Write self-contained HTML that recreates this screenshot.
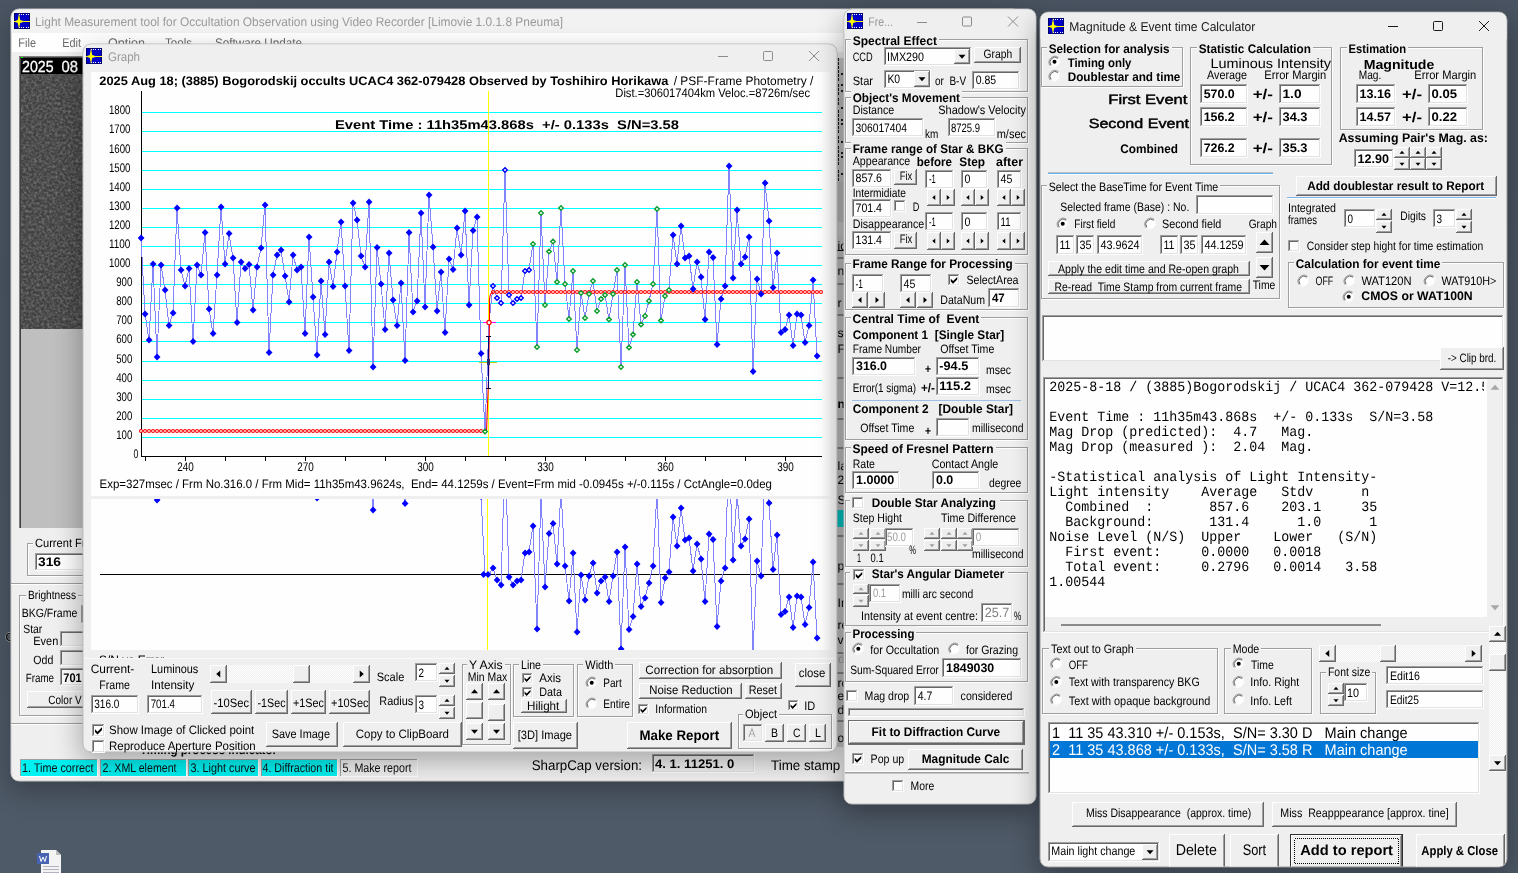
<!DOCTYPE html>
<html><head><meta charset="utf-8"><title>Limovie</title>
<style>html,body{margin:0;padding:0;background:#4b5563;overflow:hidden;font-family:"Liberation Sans",sans-serif}svg{display:block;will-change:transform;opacity:0.9999}</style>
</head><body>
<svg width="1518" height="873" viewBox="0 0 1518 873" shape-rendering="crispEdges" text-rendering="geometricPrecision"><defs>
<linearGradient id="desk" x1="0" y1="0" x2="0" y2="1">
 <stop offset="0" stop-color="#4b5563"/><stop offset="1" stop-color="#505b69"/>
</linearGradient>
<filter id="sh" x="-15%" y="-15%" width="130%" height="140%"><feGaussianBlur stdDeviation="14"/></filter>
<filter id="noise" x="0" y="0" width="100%" height="100%">
 <feTurbulence type="fractalNoise" baseFrequency="0.38" numOctaves="2" seed="7" result="t"/>
 <feColorMatrix type="matrix" values="0 0 0 0 1  0 0 0 0 1  0 0 0 0 1  0.55 0 0 0 -0.2"/>
 <feGaussianBlur stdDeviation="0.5"/>
 <feComposite in2="SourceGraphic" operator="in"/>
</filter>
<pattern id="dith" width="2" height="2" patternUnits="userSpaceOnUse">
 <rect width="2" height="2" fill="#f0f0f0"/><rect width="1" height="1" fill="#fff"/><rect x="1" y="1" width="1" height="1" fill="#fff"/>
</pattern>
<clipPath id="clipLow"><rect x="91" y="499" width="740" height="151"/></clipPath>
<clipPath id="clipGraphWin"><rect x="83" y="44" width="754" height="708" rx="8"/></clipPath>
</defs>
<rect x="0" y="0" width="1518" height="873" fill="url(#desk)" />
<text x="5.3" y="640.5" font-family="Liberation Sans" font-size="12" font-weight="bold" fill="#1a1a1a" xml:space="preserve" stroke="#d8d8d8" stroke-width="0.6" paint-order="stroke">G</text>
<rect x="9" y="19" width="1014" height="772" rx="8" fill="#000" opacity="0.28" filter="url(#sh)"/>
<rect x="11" y="9" width="1010" height="772" rx="8" fill="#f0f0f0" stroke="#c8c8c8" stroke-width="1" shape-rendering="auto"/>
<path d="M11.5 33 V17 A7.5 7.5 0 0 1 19 9.5 H1013 A7.5 7.5 0 0 1 1020.5 17 V33z" fill="#f3f3f3" shape-rendering="auto"/>
<rect x="12" y="33" width="1008" height="19" fill="#ffffff" />
<rect x="14" y="13" width="16" height="16" fill="#000070" />
<rect x="15" y="14" width="14" height="14" fill="#0000c8" />
<rect x="19" y="14" width="1" height="1" fill="#fff" />
<rect x="19" y="27" width="1" height="1" fill="#fff" />
<rect x="21.2" y="14" width="1" height="1" fill="#fff" />
<rect x="21.2" y="27" width="1" height="1" fill="#fff" />
<rect x="23.4" y="14" width="1" height="1" fill="#fff" />
<rect x="23.4" y="27" width="1" height="1" fill="#fff" />
<rect x="25.6" y="14" width="1" height="1" fill="#fff" />
<rect x="25.6" y="27" width="1" height="1" fill="#fff" />
<rect x="27.8" y="14" width="1" height="1" fill="#fff" />
<rect x="27.8" y="27" width="1" height="1" fill="#fff" />
<rect x="14" y="21" width="16" height="1.4" fill="#ffff00" />
<path d="M19 13 L20.2 20 L25 21.5 L20.2 23 L19 29 L17.8 23 L14 21.5 L17.8 20z" fill="#ffff00" shape-rendering="auto"/>
<text x="35" y="26" font-family="Liberation Sans" font-size="12.5" textLength="528" lengthAdjust="spacingAndGlyphs" fill="#9a9a9a" xml:space="preserve" >Light Measurement tool for Occultation Observation using Video Recorder [Limovie 1.0.1.8 Pneuma]</text>
<text x="18.3" y="47.3" font-family="Liberation Sans" font-size="12.5" textLength="17.7" lengthAdjust="spacingAndGlyphs" fill="#6a6a6a" xml:space="preserve" >File</text>
<text x="62.3" y="47.3" font-family="Liberation Sans" font-size="12.5" textLength="18.7" lengthAdjust="spacingAndGlyphs" fill="#6a6a6a" xml:space="preserve" >Edit</text>
<text x="108" y="47.3" font-family="Liberation Sans" font-size="12.5" textLength="37" lengthAdjust="spacingAndGlyphs" fill="#6a6a6a" xml:space="preserve" >Option</text>
<text x="165" y="47.3" font-family="Liberation Sans" font-size="12.5" textLength="27" lengthAdjust="spacingAndGlyphs" fill="#6a6a6a" xml:space="preserve" >Tools</text>
<text x="215" y="47.3" font-family="Liberation Sans" font-size="12.5" textLength="87" lengthAdjust="spacingAndGlyphs" fill="#6a6a6a" xml:space="preserve" >Software Update</text>
<rect x="19" y="56" width="70" height="472" fill="#c0c0c0" />
<rect x="19" y="56" width="1" height="472" fill="#808080" />
<rect x="19" y="56" width="70" height="1" fill="#808080" />
<rect x="20" y="57" width="1" height="471" fill="#404040" />
<rect x="20" y="57" width="69" height="1" fill="#404040" />
<rect x="21" y="58" width="66" height="16" fill="#000" />
<rect x="21" y="74" width="66" height="255" fill="#414141" />
<rect x="21" y="74" width="66" height="255" fill="#b8b8b8" filter="url(#noise)"/>
<text x="22" y="72.3" font-family="Liberation Sans" font-size="16" textLength="31.5" lengthAdjust="spacingAndGlyphs" fill="#fff" xml:space="preserve" stroke="#fff" stroke-width="0.3">2025</text>
<text x="61.5" y="72.3" font-family="Liberation Sans" font-size="16" textLength="16.5" lengthAdjust="spacingAndGlyphs" fill="#fff" xml:space="preserve" stroke="#fff" stroke-width="0.3">08</text>
<rect x="21" y="57" width="2" height="1" fill="#00ff00" />
<rect x="28.5" y="544.5" width="79" height="32" fill="none" stroke="#ffffff"/>
<rect x="27.5" y="543.5" width="79" height="32" fill="none" stroke="#a0a0a0"/>
<rect x="33" y="537" width="57" height="12" fill="#f0f0f0" />
<text x="35" y="547" font-family="Liberation Sans" font-size="12" textLength="53" lengthAdjust="spacingAndGlyphs" fill="#000" xml:space="preserve" >Current Fr.</text>
<rect x="35" y="553" width="70" height="18" fill="#fff" />
<rect x="35" y="553" width="70" height="1" fill="#a0a0a0" />
<rect x="35" y="553" width="1" height="18" fill="#a0a0a0" />
<rect x="36" y="554" width="68" height="1" fill="#696969" />
<rect x="36" y="554" width="1" height="16" fill="#696969" />
<rect x="35" y="570" width="70" height="1" fill="#ffffff" />
<rect x="104" y="553" width="1" height="18" fill="#ffffff" />
<rect x="36" y="569" width="68" height="1" fill="#e3e3e3" />
<rect x="103" y="554" width="1" height="16" fill="#e3e3e3" />
<text x="38" y="566" font-family="Liberation Sans" font-size="12.5" font-weight="bold" textLength="23" lengthAdjust="spacingAndGlyphs" fill="#000" xml:space="preserve" >316</text>
<rect x="11" y="583" width="79" height="1" fill="#a0a0a0" />
<rect x="11" y="584" width="79" height="1" fill="#ffffff" />
<rect x="20.5" y="596.5" width="79" height="120" fill="none" stroke="#ffffff"/>
<rect x="19.5" y="595.5" width="79" height="120" fill="none" stroke="#a0a0a0"/>
<rect x="26" y="589" width="52" height="12" fill="#f0f0f0" />
<text x="28" y="599" font-family="Liberation Sans" font-size="12" textLength="48" lengthAdjust="spacingAndGlyphs" fill="#000" xml:space="preserve" >Brightness</text>
<text x="21.7" y="617" font-family="Liberation Sans" font-size="12" textLength="55.6" lengthAdjust="spacingAndGlyphs" fill="#000" xml:space="preserve" >BKG/Frame</text>
<rect x="81" y="605" width="20" height="19" fill="#f0f0f0" />
<rect x="81" y="605" width="20" height="1" fill="#a0a0a0" />
<rect x="81" y="605" width="1" height="19" fill="#a0a0a0" />
<rect x="82" y="606" width="18" height="1" fill="#696969" />
<rect x="82" y="606" width="1" height="17" fill="#696969" />
<rect x="81" y="623" width="20" height="1" fill="#ffffff" />
<rect x="100" y="605" width="1" height="19" fill="#ffffff" />
<rect x="82" y="622" width="18" height="1" fill="#e3e3e3" />
<rect x="99" y="606" width="1" height="17" fill="#e3e3e3" />
<text x="23.3" y="632.7" font-family="Liberation Sans" font-size="12" textLength="19" lengthAdjust="spacingAndGlyphs" fill="#000" xml:space="preserve" >Star</text>
<text x="33.3" y="645.3" font-family="Liberation Sans" font-size="12" textLength="25" lengthAdjust="spacingAndGlyphs" fill="#000" xml:space="preserve" >Even</text>
<rect x="60" y="631" width="40" height="16" fill="#f0f0f0" />
<rect x="60" y="631" width="40" height="1" fill="#a0a0a0" />
<rect x="60" y="631" width="1" height="16" fill="#a0a0a0" />
<rect x="61" y="632" width="38" height="1" fill="#696969" />
<rect x="61" y="632" width="1" height="14" fill="#696969" />
<rect x="60" y="646" width="40" height="1" fill="#ffffff" />
<rect x="99" y="631" width="1" height="16" fill="#ffffff" />
<rect x="61" y="645" width="38" height="1" fill="#e3e3e3" />
<rect x="98" y="632" width="1" height="14" fill="#e3e3e3" />
<text x="33.3" y="663.7" font-family="Liberation Sans" font-size="12" textLength="20" lengthAdjust="spacingAndGlyphs" fill="#000" xml:space="preserve" >Odd</text>
<rect x="60" y="650" width="40" height="16" fill="#f0f0f0" />
<rect x="60" y="650" width="40" height="1" fill="#a0a0a0" />
<rect x="60" y="650" width="1" height="16" fill="#a0a0a0" />
<rect x="61" y="651" width="38" height="1" fill="#696969" />
<rect x="61" y="651" width="1" height="14" fill="#696969" />
<rect x="60" y="665" width="40" height="1" fill="#ffffff" />
<rect x="99" y="650" width="1" height="16" fill="#ffffff" />
<rect x="61" y="664" width="38" height="1" fill="#e3e3e3" />
<rect x="98" y="651" width="1" height="14" fill="#e3e3e3" />
<text x="25.7" y="682" font-family="Liberation Sans" font-size="12" textLength="28.3" lengthAdjust="spacingAndGlyphs" fill="#000" xml:space="preserve" >Frame</text>
<rect x="60" y="668" width="40" height="18" fill="#fff" />
<rect x="60" y="668" width="40" height="1" fill="#a0a0a0" />
<rect x="60" y="668" width="1" height="18" fill="#a0a0a0" />
<rect x="61" y="669" width="38" height="1" fill="#696969" />
<rect x="61" y="669" width="1" height="16" fill="#696969" />
<rect x="60" y="685" width="40" height="1" fill="#ffffff" />
<rect x="99" y="668" width="1" height="18" fill="#ffffff" />
<rect x="61" y="684" width="38" height="1" fill="#e3e3e3" />
<rect x="98" y="669" width="1" height="16" fill="#e3e3e3" />
<text x="63.3" y="681.5" font-family="Liberation Sans" font-size="12.5" font-weight="bold" textLength="18.4" lengthAdjust="spacingAndGlyphs" fill="#000" xml:space="preserve" >701</text>
<rect x="27" y="691" width="70" height="17" fill="#f0f0f0" />
<rect x="27" y="691" width="70" height="1" fill="#ffffff" />
<rect x="27" y="691" width="1" height="17" fill="#ffffff" />
<rect x="27" y="707" width="70" height="1" fill="#696969" />
<rect x="96" y="691" width="1" height="17" fill="#696969" />
<rect x="28" y="706" width="68" height="1" fill="#a0a0a0" />
<rect x="95" y="692" width="1" height="15" fill="#a0a0a0" />
<text x="48.3" y="703.7" font-family="Liberation Sans" font-size="12" textLength="33.4" lengthAdjust="spacingAndGlyphs" fill="#000" xml:space="preserve" >Color V</text>
<rect x="11" y="723" width="79" height="1" fill="#a0a0a0" />
<rect x="11" y="724" width="79" height="1" fill="#ffffff" />
<clipPath id="clipStrip"><rect x="837" y="52" width="8" height="700"/></clipPath><g clip-path="url(#clipStrip)">
<rect x="837" y="52" width="7" height="695" fill="#cdcdcd" />
<rect x="837" y="52" width="7" height="6" fill="#f0f0f0" />
<rect x="838" y="58" width="1" height="3" fill="#202020" />
<rect x="838" y="62" width="1" height="3" fill="#202020" />
<rect x="838" y="66" width="1" height="3" fill="#202020" />
<rect x="838" y="70" width="1" height="3" fill="#202020" />
<rect x="838" y="74" width="1" height="3" fill="#202020" />
<rect x="838" y="78" width="1" height="3" fill="#202020" />
<rect x="838" y="84" width="1" height="3" fill="#202020" />
<rect x="838" y="88" width="1" height="3" fill="#202020" />
<rect x="838" y="92" width="1" height="3" fill="#202020" />
<rect x="838" y="98" width="1" height="3" fill="#202020" />
<rect x="838" y="102" width="1" height="3" fill="#202020" />
<rect x="838" y="110" width="1" height="3" fill="#202020" />
<rect x="838" y="114" width="1" height="3" fill="#202020" />
<rect x="838" y="118" width="1" height="3" fill="#202020" />
<rect x="838" y="122" width="1" height="3" fill="#202020" />
<rect x="838" y="126" width="1" height="3" fill="#202020" />
<rect x="838" y="130" width="1" height="3" fill="#202020" />
<rect x="838" y="136" width="1" height="3" fill="#202020" />
<rect x="838" y="140" width="1" height="3" fill="#202020" />
<rect x="838" y="146" width="1" height="3" fill="#202020" />
<rect x="838" y="150" width="1" height="3" fill="#202020" />
<rect x="838" y="154" width="1" height="3" fill="#202020" />
<rect x="838" y="158" width="1" height="3" fill="#202020" />
<rect x="838" y="162" width="1" height="3" fill="#202020" />
<rect x="838" y="170" width="1" height="3" fill="#202020" />
<rect x="838" y="174" width="1" height="3" fill="#202020" />
<rect x="838" y="178" width="1" height="3" fill="#202020" />
<rect x="841" y="73" width="2" height="2" fill="#202020" />
<rect x="841" y="84" width="2" height="2" fill="#202020" />
<rect x="841" y="90" width="2" height="2" fill="#202020" />
<rect x="841" y="107" width="2" height="2" fill="#202020" />
<rect x="841" y="119" width="2" height="2" fill="#202020" />
<rect x="841" y="123" width="2" height="2" fill="#202020" />
<rect x="841" y="141" width="2" height="2" fill="#202020" />
<rect x="841" y="152" width="2" height="2" fill="#202020" />
<rect x="841" y="156" width="2" height="2" fill="#202020" />
<rect x="841" y="173" width="2" height="2" fill="#202020" />
<rect x="837" y="182" width="7" height="40" fill="#c4c4c4" />
<rect x="837" y="222" width="7" height="14" fill="#d4d4d4" />
<rect x="837" y="257" width="7" height="2" fill="#8a8a8a" />
<rect x="837" y="283" width="7" height="2" fill="#8a8a8a" />
<rect x="837" y="314" width="7" height="2" fill="#8a8a8a" />
<rect x="837" y="377" width="7" height="2" fill="#8a8a8a" />
<rect x="837" y="418" width="7" height="2" fill="#8a8a8a" />
<rect x="837" y="447" width="7" height="2" fill="#8a8a8a" />
<rect x="837" y="535" width="7" height="2" fill="#8a8a8a" />
<rect x="837" y="583" width="7" height="2" fill="#8a8a8a" />
<rect x="837" y="652" width="7" height="2" fill="#8a8a8a" />
<rect x="837" y="672" width="7" height="2" fill="#8a8a8a" />
<rect x="837" y="720" width="7" height="2" fill="#8a8a8a" />
<rect x="837" y="510" width="7" height="17" fill="#00d0d0" />
<text x="837.5" y="250" font-family="Liberation Sans" font-size="12.2" fill="#000" xml:space="preserve" >ic</text>
<text x="837.5" y="275" font-family="Liberation Sans" font-size="12.2" fill="#000" xml:space="preserve" >n</text>
<text x="837.5" y="307" font-family="Liberation Sans" font-size="12.2" fill="#000" xml:space="preserve" >r</text>
<text x="837.5" y="337" font-family="Liberation Sans" font-size="12.2" fill="#000" xml:space="preserve" >se</text>
<text x="837.5" y="353" font-family="Liberation Sans" font-size="12.2" fill="#000" xml:space="preserve" >Fi</text>
<text x="837.5" y="408" font-family="Liberation Sans" font-size="12.2" font-weight="bold" fill="#000" xml:space="preserve" >n</text>
<text x="837.5" y="470" font-family="Liberation Sans" font-size="12.2" fill="#000" xml:space="preserve" >la</text>
<text x="837.5" y="484" font-family="Liberation Sans" font-size="12.2" fill="#000" xml:space="preserve" >25</text>
<text x="837.5" y="504" font-family="Liberation Sans" font-size="12.2" fill="#000" xml:space="preserve" >S</text>
<text x="837.5" y="570" font-family="Liberation Sans" font-size="12.2" fill="#000" xml:space="preserve" >p</text>
<text x="837.5" y="607" font-family="Liberation Sans" font-size="12.2" fill="#000" xml:space="preserve" >In</text>
<text x="837.5" y="629" font-family="Liberation Sans" font-size="12.2" fill="#000" xml:space="preserve" >re</text>
<text x="837.5" y="644" font-family="Liberation Sans" font-size="12.2" fill="#000" xml:space="preserve" >v</text>
<text x="837.5" y="687" font-family="Liberation Sans" font-size="12.2" fill="#000" xml:space="preserve" >ro</text>
<text x="837.5" y="700" font-family="Liberation Sans" font-size="12.2" fill="#000" xml:space="preserve" >er</text>
<text x="837.5" y="714" font-family="Liberation Sans" font-size="12.2" fill="#000" xml:space="preserve" >d</text>
<text x="837.5" y="742" font-family="Liberation Sans" font-size="12.2" fill="#000" xml:space="preserve" >os</text>
<text x="838" y="663" font-family="Liberation Sans" font-size="12.2" fill="#a0a0a0" xml:space="preserve" >d</text>
<rect x="837" y="250" width="7" height="1" fill="#000" />
</g>
<rect x="20" y="759" width="78" height="18" fill="#00f2f2" />
<rect x="20" y="759" width="78" height="1" fill="#a0a0a0" />
<rect x="20" y="759" width="1" height="18" fill="#a0a0a0" />
<rect x="20" y="776" width="78" height="1" fill="#ffffff" />
<rect x="97" y="759" width="1" height="18" fill="#ffffff" />
<rect x="100" y="759" width="87" height="18" fill="#00f2f2" />
<rect x="100" y="759" width="87" height="1" fill="#a0a0a0" />
<rect x="100" y="759" width="1" height="18" fill="#a0a0a0" />
<rect x="100" y="776" width="87" height="1" fill="#ffffff" />
<rect x="186" y="759" width="1" height="18" fill="#ffffff" />
<rect x="188" y="759" width="71" height="18" fill="#00f2f2" />
<rect x="188" y="759" width="71" height="1" fill="#a0a0a0" />
<rect x="188" y="759" width="1" height="18" fill="#a0a0a0" />
<rect x="188" y="776" width="71" height="1" fill="#ffffff" />
<rect x="258" y="759" width="1" height="18" fill="#ffffff" />
<rect x="261" y="759" width="77" height="18" fill="#00f2f2" />
<rect x="261" y="759" width="77" height="1" fill="#a0a0a0" />
<rect x="261" y="759" width="1" height="18" fill="#a0a0a0" />
<rect x="261" y="776" width="77" height="1" fill="#ffffff" />
<rect x="337" y="759" width="1" height="18" fill="#ffffff" />
<rect x="340" y="759" width="78" height="18" fill="#f0f0f0" />
<rect x="340" y="759" width="78" height="1" fill="#a0a0a0" />
<rect x="340" y="759" width="1" height="18" fill="#a0a0a0" />
<rect x="340" y="776" width="78" height="1" fill="#ffffff" />
<rect x="417" y="759" width="1" height="18" fill="#ffffff" />
<text x="22" y="772" font-family="Liberation Sans" font-size="12.5" textLength="71.5" lengthAdjust="spacingAndGlyphs" fill="#101010" xml:space="preserve" >1. Time correct</text>
<text x="102.5" y="772" font-family="Liberation Sans" font-size="12.5" textLength="74" lengthAdjust="spacingAndGlyphs" fill="#101010" xml:space="preserve" >2. XML element</text>
<text x="190.5" y="772" font-family="Liberation Sans" font-size="12.5" textLength="65" lengthAdjust="spacingAndGlyphs" fill="#101010" xml:space="preserve" >3. Light curve</text>
<text x="262.5" y="772" font-family="Liberation Sans" font-size="12.5" textLength="71" lengthAdjust="spacingAndGlyphs" fill="#101010" xml:space="preserve" >4. Diffraction tit</text>
<text x="342.5" y="772" font-family="Liberation Sans" font-size="12.5" textLength="69" lengthAdjust="spacingAndGlyphs" fill="#101010" xml:space="preserve" >5. Make report</text>
<clipPath id="clipTP"><rect x="100" y="752" width="300" height="6"/></clipPath><g clip-path="url(#clipTP)">
<text x="140" y="754.3" font-family="Liberation Sans" font-size="12.5" font-weight="bold" textLength="137" lengthAdjust="spacingAndGlyphs" fill="#000" xml:space="preserve" >Timing process indicator</text>
</g>
<text x="531.7" y="769.7" font-family="Liberation Sans" font-size="14" textLength="110.3" lengthAdjust="spacingAndGlyphs" fill="#000" xml:space="preserve" >SharpCap version:</text>
<rect x="652" y="754" width="103" height="19" fill="#f0f0f0" />
<rect x="652" y="754" width="103" height="1" fill="#a0a0a0" />
<rect x="652" y="754" width="1" height="19" fill="#a0a0a0" />
<rect x="653" y="755" width="101" height="1" fill="#696969" />
<rect x="653" y="755" width="1" height="17" fill="#696969" />
<rect x="652" y="772" width="103" height="1" fill="#ffffff" />
<rect x="754" y="754" width="1" height="19" fill="#ffffff" />
<rect x="653" y="771" width="101" height="1" fill="#e3e3e3" />
<rect x="753" y="755" width="1" height="17" fill="#e3e3e3" />
<text x="655" y="767.7" font-family="Liberation Sans" font-size="12.5" font-weight="bold" textLength="79.3" lengthAdjust="spacingAndGlyphs" fill="#000" xml:space="preserve" >4. 1. 11251. 0</text>
<text x="771" y="770.3" font-family="Liberation Sans" font-size="14" textLength="69.3" lengthAdjust="spacingAndGlyphs" fill="#000" xml:space="preserve" >Time stamp</text>
<path d="M41 850 H56 L61 855 V873 H41z" fill="#f4f4f4" shape-rendering="auto"/>
<path d="M56 850 L61 855 H56z" fill="#bdbdbd" shape-rendering="auto"/>
<rect x="37" y="853" width="12" height="11" fill="#4a64b4" />
<path d="M39.5 856 l1.6 5.5 l1.9 -4.5 l1.9 4.5 l1.6 -5.5" fill="none" stroke="#fff" stroke-width="1" shape-rendering="auto"/>
<rect x="43" y="866" width="16" height="1" fill="#b4b4c0" />
<rect x="43" y="869" width="16" height="1" fill="#b4b4c0" />
<rect x="43" y="872" width="16" height="1" fill="#b4b4c0" />
<rect x="81" y="54" width="758" height="708" rx="8" fill="#000" opacity="0.3" filter="url(#sh)"/>
<rect x="83" y="44" width="754" height="708" rx="8" fill="#f0f0f0" stroke="#bdbdbd" stroke-width="1" shape-rendering="auto"/>
<path d="M83.5 71 V52 A7.5 7.5 0 0 1 91 44.5 H829 A7.5 7.5 0 0 1 836.5 52 V71z" fill="#f0f0f0" shape-rendering="auto"/>
<rect x="86" y="48" width="16" height="16" fill="#000070" />
<rect x="87" y="49" width="14" height="14" fill="#0000c8" />
<rect x="91" y="49" width="1" height="1" fill="#fff" />
<rect x="91" y="62" width="1" height="1" fill="#fff" />
<rect x="93.2" y="49" width="1" height="1" fill="#fff" />
<rect x="93.2" y="62" width="1" height="1" fill="#fff" />
<rect x="95.4" y="49" width="1" height="1" fill="#fff" />
<rect x="95.4" y="62" width="1" height="1" fill="#fff" />
<rect x="97.6" y="49" width="1" height="1" fill="#fff" />
<rect x="97.6" y="62" width="1" height="1" fill="#fff" />
<rect x="99.8" y="49" width="1" height="1" fill="#fff" />
<rect x="99.8" y="62" width="1" height="1" fill="#fff" />
<rect x="86" y="56" width="16" height="1.4" fill="#ffff00" />
<path d="M91 48 L92.2 55 L97 56.5 L92.2 58 L91 64 L89.8 58 L86 56.5 L89.8 55z" fill="#ffff00" shape-rendering="auto"/>
<text x="108" y="61" font-family="Liberation Sans" font-size="12.5" textLength="32" lengthAdjust="spacingAndGlyphs" fill="#9a9a9a" xml:space="preserve" >Graph</text>
<line x1="718" y1="56.5" x2="728" y2="56.5" stroke="#8c8c8c" stroke-width="1" />
<rect x="763.5" y="51.5" width="9" height="9" rx="1" fill="none" stroke="#8c8c8c" shape-rendering="auto"/>
<path d="M809 51 l10 10 M819 51 l-10 10" stroke="#8c8c8c" fill="none" shape-rendering="auto"/>
<linearGradient id="fadeR" x1="0" x2="1" y1="0" y2="0"><stop offset="0" stop-color="#fff"/><stop offset="1" stop-color="#f4f4f4"/></linearGradient>
<rect x="91" y="72" width="730" height="424" fill="#fff" />
<rect x="821" y="72" width="10" height="424" fill="url(#fadeR)" />
<rect x="91" y="499" width="730" height="151" fill="#fff" />
<rect x="821" y="499" width="10" height="151" fill="url(#fadeR)" />
<rect x="142" y="437" width="680" height="1" fill="#00ffff" />
<rect x="142" y="418" width="680" height="1" fill="#00ffff" />
<rect x="142" y="399" width="680" height="1" fill="#00ffff" />
<rect x="142" y="380" width="680" height="1" fill="#00ffff" />
<rect x="142" y="361" width="680" height="1" fill="#00ffff" />
<rect x="142" y="341" width="680" height="1" fill="#00ffff" />
<rect x="142" y="322" width="680" height="1" fill="#00ffff" />
<rect x="142" y="303" width="680" height="1" fill="#00ffff" />
<rect x="142" y="284" width="680" height="1" fill="#00ffff" />
<rect x="142" y="265" width="680" height="1" fill="#00ffff" />
<rect x="142" y="246" width="680" height="1" fill="#00ffff" />
<rect x="142" y="227" width="680" height="1" fill="#00ffff" />
<rect x="142" y="208" width="680" height="1" fill="#00ffff" />
<rect x="142" y="189" width="680" height="1" fill="#00ffff" />
<rect x="142" y="170" width="680" height="1" fill="#00ffff" />
<rect x="142" y="151" width="680" height="1" fill="#00ffff" />
<rect x="142" y="131" width="680" height="1" fill="#00ffff" />
<rect x="142" y="112" width="680" height="1" fill="#00ffff" />
<rect x="141" y="91" width="1" height="366" fill="#000" />
<rect x="141" y="456" width="681" height="1" fill="#000" />
<rect x="145" y="457" width="1" height="4" fill="#000" />
<rect x="185" y="457" width="1" height="4" fill="#000" />
<rect x="225" y="457" width="1" height="4" fill="#000" />
<rect x="265" y="457" width="1" height="4" fill="#000" />
<rect x="305" y="457" width="1" height="4" fill="#000" />
<rect x="345" y="457" width="1" height="4" fill="#000" />
<rect x="385" y="457" width="1" height="4" fill="#000" />
<rect x="425" y="457" width="1" height="4" fill="#000" />
<rect x="465" y="457" width="1" height="4" fill="#000" />
<rect x="505" y="457" width="1" height="4" fill="#000" />
<rect x="545" y="457" width="1" height="4" fill="#000" />
<rect x="585" y="457" width="1" height="4" fill="#000" />
<rect x="625" y="457" width="1" height="4" fill="#000" />
<rect x="665" y="457" width="1" height="4" fill="#000" />
<rect x="705" y="457" width="1" height="4" fill="#000" />
<rect x="745" y="457" width="1" height="4" fill="#000" />
<rect x="785" y="457" width="1" height="4" fill="#000" />
<text x="133.5" y="458" font-family="Liberation Sans" font-size="12.5" textLength="4.8" lengthAdjust="spacingAndGlyphs" fill="#000" xml:space="preserve" >0</text>
<text x="116.2" y="439" font-family="Liberation Sans" font-size="12.5" textLength="16.1" lengthAdjust="spacingAndGlyphs" fill="#000" xml:space="preserve" >100</text>
<text x="116.2" y="420" font-family="Liberation Sans" font-size="12.5" textLength="16.1" lengthAdjust="spacingAndGlyphs" fill="#000" xml:space="preserve" >200</text>
<text x="116.2" y="401" font-family="Liberation Sans" font-size="12.5" textLength="16.1" lengthAdjust="spacingAndGlyphs" fill="#000" xml:space="preserve" >300</text>
<text x="116.2" y="382" font-family="Liberation Sans" font-size="12.5" textLength="16.1" lengthAdjust="spacingAndGlyphs" fill="#000" xml:space="preserve" >400</text>
<text x="116.2" y="363" font-family="Liberation Sans" font-size="12.5" textLength="16.1" lengthAdjust="spacingAndGlyphs" fill="#000" xml:space="preserve" >500</text>
<text x="116.2" y="343" font-family="Liberation Sans" font-size="12.5" textLength="16.1" lengthAdjust="spacingAndGlyphs" fill="#000" xml:space="preserve" >600</text>
<text x="116.2" y="324" font-family="Liberation Sans" font-size="12.5" textLength="16.1" lengthAdjust="spacingAndGlyphs" fill="#000" xml:space="preserve" >700</text>
<text x="116.2" y="305" font-family="Liberation Sans" font-size="12.5" textLength="16.1" lengthAdjust="spacingAndGlyphs" fill="#000" xml:space="preserve" >800</text>
<text x="116.2" y="286" font-family="Liberation Sans" font-size="12.5" textLength="16.1" lengthAdjust="spacingAndGlyphs" fill="#000" xml:space="preserve" >900</text>
<text x="108.9" y="267" font-family="Liberation Sans" font-size="12.5" textLength="21.5" lengthAdjust="spacingAndGlyphs" fill="#000" xml:space="preserve" >1000</text>
<text x="108.9" y="248" font-family="Liberation Sans" font-size="12.5" textLength="21.5" lengthAdjust="spacingAndGlyphs" fill="#000" xml:space="preserve" >1100</text>
<text x="108.9" y="229" font-family="Liberation Sans" font-size="12.5" textLength="21.5" lengthAdjust="spacingAndGlyphs" fill="#000" xml:space="preserve" >1200</text>
<text x="108.9" y="210" font-family="Liberation Sans" font-size="12.5" textLength="21.5" lengthAdjust="spacingAndGlyphs" fill="#000" xml:space="preserve" >1300</text>
<text x="108.9" y="191" font-family="Liberation Sans" font-size="12.5" textLength="21.5" lengthAdjust="spacingAndGlyphs" fill="#000" xml:space="preserve" >1400</text>
<text x="108.9" y="172" font-family="Liberation Sans" font-size="12.5" textLength="21.5" lengthAdjust="spacingAndGlyphs" fill="#000" xml:space="preserve" >1500</text>
<text x="108.9" y="153" font-family="Liberation Sans" font-size="12.5" textLength="21.5" lengthAdjust="spacingAndGlyphs" fill="#000" xml:space="preserve" >1600</text>
<text x="108.9" y="133" font-family="Liberation Sans" font-size="12.5" textLength="21.5" lengthAdjust="spacingAndGlyphs" fill="#000" xml:space="preserve" >1700</text>
<text x="108.9" y="114" font-family="Liberation Sans" font-size="12.5" textLength="21.5" lengthAdjust="spacingAndGlyphs" fill="#000" xml:space="preserve" >1800</text>
<text x="177.2" y="471" font-family="Liberation Sans" font-size="12.5" textLength="16.6" lengthAdjust="spacingAndGlyphs" fill="#000" xml:space="preserve" >240</text>
<text x="297.2" y="471" font-family="Liberation Sans" font-size="12.5" textLength="16.6" lengthAdjust="spacingAndGlyphs" fill="#000" xml:space="preserve" >270</text>
<text x="417.2" y="471" font-family="Liberation Sans" font-size="12.5" textLength="16.6" lengthAdjust="spacingAndGlyphs" fill="#000" xml:space="preserve" >300</text>
<text x="537.2" y="471" font-family="Liberation Sans" font-size="12.5" textLength="16.6" lengthAdjust="spacingAndGlyphs" fill="#000" xml:space="preserve" >330</text>
<text x="657.2" y="471" font-family="Liberation Sans" font-size="12.5" textLength="16.6" lengthAdjust="spacingAndGlyphs" fill="#000" xml:space="preserve" >360</text>
<text x="777.2" y="471" font-family="Liberation Sans" font-size="12.5" textLength="16.6" lengthAdjust="spacingAndGlyphs" fill="#000" xml:space="preserve" >390</text>
<text x="99.3" y="84.7" font-family="Liberation Sans" font-size="12.3" font-weight="bold" textLength="569" lengthAdjust="spacingAndGlyphs" fill="#000" xml:space="preserve" >2025 Aug 18; (3885) Bogorodskij occults UCAC4 362-079428 Observed by Toshihiro Horikawa</text>
<text x="673.7" y="84.7" font-family="Liberation Sans" font-size="12.3" textLength="139.6" lengthAdjust="spacingAndGlyphs" fill="#000" xml:space="preserve" >/ PSF-Frame Photometry /</text>
<text x="615.3" y="96.7" font-family="Liberation Sans" font-size="12.3" textLength="194.7" lengthAdjust="spacingAndGlyphs" fill="#000" xml:space="preserve" >Dist.=306017404km Veloc.=8726m/sec</text>
<text x="335" y="128.7" font-family="Liberation Sans" font-size="12.6" font-weight="bold" textLength="344" lengthAdjust="spacingAndGlyphs" fill="#000" xml:space="preserve" >Event Time : 11h35m43.868s  +/- 0.133s  S/N=3.58</text>
<text x="99.6" y="487.8" font-family="Liberation Sans" font-size="12.2" textLength="672.4" lengthAdjust="spacingAndGlyphs" fill="#000" xml:space="preserve" >Exp=327msec / Frm No.316.0 / Frm Mid= 11h35m43.9624s,  End= 44.1259s / Event=Frm mid -0.0945s +/-0.115s / CctAngle=0.0deg</text>
<rect x="488" y="91" width="1" height="365" fill="#ffff00" />
<polyline points="141.0,238.0 145.0,313.8 149.0,340.0 153.0,264.0 157.0,356.9 161.0,264.9 165.0,289.9 169.0,325.7 173.0,313.1 177.0,207.8 181.0,269.9 185.0,285.9 189.0,268.6 193.0,341.7 197.0,264.9 201.0,274.9 205.0,232.7 209.0,309.1 213.0,333.7 217.0,274.9 221.0,206.8 225.0,264.0 229.0,233.7 233.0,258.0 237.0,322.7 241.0,262.0 245.0,268.6 249.0,264.3 253.0,309.8 257.0,266.9 261.0,248.0 265.0,204.8 269.0,352.6 273.0,274.9 277.0,255.0 281.0,250.0 285.0,275.9 289.0,301.8 293.0,255.0 297.0,269.9 301.0,266.9 305.0,333.7 309.0,237.1 313.0,296.8 317.0,355.0 321.0,280.9 325.0,334.7 329.0,262.0 333.0,286.5 337.0,252.0 341.0,221.8 345.0,285.9 349.0,350.6 353.0,202.8 357.0,219.8 361.0,256.0 365.0,266.9 369.0,201.8 373.0,366.9 377.0,247.7 381.0,283.9 385.0,329.7 389.0,253.0 393.0,299.8 397.0,325.7 401.0,282.9 405.0,360.6 409.0,232.7 413.0,311.8 417.0,300.8 421.0,212.8 425.0,306.8 429.0,194.9 433.0,247.0 437.0,310.8 441.0,271.9 445.0,332.7 449.0,259.0 453.0,269.6 457.0,227.8 461.0,255.0 465.0,210.8 469.0,304.8 473.0,230.7 477.0,217.1 481.0,353.6 485.0,431.4 489.0,322.5 493.0,285.9 497.0,297.8 501.0,302.8 505.0,170.0 509.0,294.8 513.0,302.8 517.0,298.8 521.0,297.8 525.0,270.9 529.0,269.9 533.0,244.0 537.0,347.0 541.0,212.8 545.0,304.8 549.0,251.7 553.0,241.7 557.0,281.9 561.0,207.8 565.0,283.9 569.0,318.8 573.0,270.9 577.0,350.0 581.0,292.8 585.0,317.8 589.0,293.8 593.0,280.9 597.0,310.8 601.0,298.8 605.0,294.8 609.0,319.7 613.0,293.8 617.0,269.9 621.0,366.9 625.0,264.9 629.0,347.6 633.0,334.7 637.0,281.9 641.0,324.7 645.0,315.8 649.0,300.8 653.0,283.9 657.0,208.8 661.0,320.7 665.0,295.8 669.0,289.9 673.0,235.1 677.0,264.0 681.0,225.8 685.0,258.0 689.0,256.0 693.0,288.9 697.0,262.0 701.0,276.9 705.0,319.7 709.0,252.0 713.0,257.6 717.0,344.7 721.0,298.8 725.0,285.9 729.0,166.0 733.0,277.9 737.0,209.8 741.0,264.0 745.0,257.0 749.0,237.1 753.0,371.6 757.0,278.9 761.0,293.8 765.0,182.9 769.0,220.8 773.0,287.5 777.0,253.0 781.0,332.7 785.0,329.7 789.0,314.8 793.0,345.7 797.0,314.1 801.0,314.8 805.0,342.7 809.0,325.7 813.0,279.9 817.0,355.9" fill="none" stroke="#8484ff" stroke-width="1"/>
<g shape-rendering="auto"><circle cx="141" cy="431" r="1.45" fill="#fff" stroke="#ff0000" stroke-width="1.1"/><circle cx="145" cy="431" r="1.45" fill="#fff" stroke="#ff0000" stroke-width="1.1"/><circle cx="149" cy="431" r="1.45" fill="#fff" stroke="#ff0000" stroke-width="1.1"/><circle cx="153" cy="431" r="1.45" fill="#fff" stroke="#ff0000" stroke-width="1.1"/><circle cx="157" cy="431" r="1.45" fill="#fff" stroke="#ff0000" stroke-width="1.1"/><circle cx="161" cy="431" r="1.45" fill="#fff" stroke="#ff0000" stroke-width="1.1"/><circle cx="165" cy="431" r="1.45" fill="#fff" stroke="#ff0000" stroke-width="1.1"/><circle cx="169" cy="431" r="1.45" fill="#fff" stroke="#ff0000" stroke-width="1.1"/><circle cx="173" cy="431" r="1.45" fill="#fff" stroke="#ff0000" stroke-width="1.1"/><circle cx="177" cy="431" r="1.45" fill="#fff" stroke="#ff0000" stroke-width="1.1"/><circle cx="181" cy="431" r="1.45" fill="#fff" stroke="#ff0000" stroke-width="1.1"/><circle cx="185" cy="431" r="1.45" fill="#fff" stroke="#ff0000" stroke-width="1.1"/><circle cx="189" cy="431" r="1.45" fill="#fff" stroke="#ff0000" stroke-width="1.1"/><circle cx="193" cy="431" r="1.45" fill="#fff" stroke="#ff0000" stroke-width="1.1"/><circle cx="197" cy="431" r="1.45" fill="#fff" stroke="#ff0000" stroke-width="1.1"/><circle cx="201" cy="431" r="1.45" fill="#fff" stroke="#ff0000" stroke-width="1.1"/><circle cx="205" cy="431" r="1.45" fill="#fff" stroke="#ff0000" stroke-width="1.1"/><circle cx="209" cy="431" r="1.45" fill="#fff" stroke="#ff0000" stroke-width="1.1"/><circle cx="213" cy="431" r="1.45" fill="#fff" stroke="#ff0000" stroke-width="1.1"/><circle cx="217" cy="431" r="1.45" fill="#fff" stroke="#ff0000" stroke-width="1.1"/><circle cx="221" cy="431" r="1.45" fill="#fff" stroke="#ff0000" stroke-width="1.1"/><circle cx="225" cy="431" r="1.45" fill="#fff" stroke="#ff0000" stroke-width="1.1"/><circle cx="229" cy="431" r="1.45" fill="#fff" stroke="#ff0000" stroke-width="1.1"/><circle cx="233" cy="431" r="1.45" fill="#fff" stroke="#ff0000" stroke-width="1.1"/><circle cx="237" cy="431" r="1.45" fill="#fff" stroke="#ff0000" stroke-width="1.1"/><circle cx="241" cy="431" r="1.45" fill="#fff" stroke="#ff0000" stroke-width="1.1"/><circle cx="245" cy="431" r="1.45" fill="#fff" stroke="#ff0000" stroke-width="1.1"/><circle cx="249" cy="431" r="1.45" fill="#fff" stroke="#ff0000" stroke-width="1.1"/><circle cx="253" cy="431" r="1.45" fill="#fff" stroke="#ff0000" stroke-width="1.1"/><circle cx="257" cy="431" r="1.45" fill="#fff" stroke="#ff0000" stroke-width="1.1"/><circle cx="261" cy="431" r="1.45" fill="#fff" stroke="#ff0000" stroke-width="1.1"/><circle cx="265" cy="431" r="1.45" fill="#fff" stroke="#ff0000" stroke-width="1.1"/><circle cx="269" cy="431" r="1.45" fill="#fff" stroke="#ff0000" stroke-width="1.1"/><circle cx="273" cy="431" r="1.45" fill="#fff" stroke="#ff0000" stroke-width="1.1"/><circle cx="277" cy="431" r="1.45" fill="#fff" stroke="#ff0000" stroke-width="1.1"/><circle cx="281" cy="431" r="1.45" fill="#fff" stroke="#ff0000" stroke-width="1.1"/><circle cx="285" cy="431" r="1.45" fill="#fff" stroke="#ff0000" stroke-width="1.1"/><circle cx="289" cy="431" r="1.45" fill="#fff" stroke="#ff0000" stroke-width="1.1"/><circle cx="293" cy="431" r="1.45" fill="#fff" stroke="#ff0000" stroke-width="1.1"/><circle cx="297" cy="431" r="1.45" fill="#fff" stroke="#ff0000" stroke-width="1.1"/><circle cx="301" cy="431" r="1.45" fill="#fff" stroke="#ff0000" stroke-width="1.1"/><circle cx="305" cy="431" r="1.45" fill="#fff" stroke="#ff0000" stroke-width="1.1"/><circle cx="309" cy="431" r="1.45" fill="#fff" stroke="#ff0000" stroke-width="1.1"/><circle cx="313" cy="431" r="1.45" fill="#fff" stroke="#ff0000" stroke-width="1.1"/><circle cx="317" cy="431" r="1.45" fill="#fff" stroke="#ff0000" stroke-width="1.1"/><circle cx="321" cy="431" r="1.45" fill="#fff" stroke="#ff0000" stroke-width="1.1"/><circle cx="325" cy="431" r="1.45" fill="#fff" stroke="#ff0000" stroke-width="1.1"/><circle cx="329" cy="431" r="1.45" fill="#fff" stroke="#ff0000" stroke-width="1.1"/><circle cx="333" cy="431" r="1.45" fill="#fff" stroke="#ff0000" stroke-width="1.1"/><circle cx="337" cy="431" r="1.45" fill="#fff" stroke="#ff0000" stroke-width="1.1"/><circle cx="341" cy="431" r="1.45" fill="#fff" stroke="#ff0000" stroke-width="1.1"/><circle cx="345" cy="431" r="1.45" fill="#fff" stroke="#ff0000" stroke-width="1.1"/><circle cx="349" cy="431" r="1.45" fill="#fff" stroke="#ff0000" stroke-width="1.1"/><circle cx="353" cy="431" r="1.45" fill="#fff" stroke="#ff0000" stroke-width="1.1"/><circle cx="357" cy="431" r="1.45" fill="#fff" stroke="#ff0000" stroke-width="1.1"/><circle cx="361" cy="431" r="1.45" fill="#fff" stroke="#ff0000" stroke-width="1.1"/><circle cx="365" cy="431" r="1.45" fill="#fff" stroke="#ff0000" stroke-width="1.1"/><circle cx="369" cy="431" r="1.45" fill="#fff" stroke="#ff0000" stroke-width="1.1"/><circle cx="373" cy="431" r="1.45" fill="#fff" stroke="#ff0000" stroke-width="1.1"/><circle cx="377" cy="431" r="1.45" fill="#fff" stroke="#ff0000" stroke-width="1.1"/><circle cx="381" cy="431" r="1.45" fill="#fff" stroke="#ff0000" stroke-width="1.1"/><circle cx="385" cy="431" r="1.45" fill="#fff" stroke="#ff0000" stroke-width="1.1"/><circle cx="389" cy="431" r="1.45" fill="#fff" stroke="#ff0000" stroke-width="1.1"/><circle cx="393" cy="431" r="1.45" fill="#fff" stroke="#ff0000" stroke-width="1.1"/><circle cx="397" cy="431" r="1.45" fill="#fff" stroke="#ff0000" stroke-width="1.1"/><circle cx="401" cy="431" r="1.45" fill="#fff" stroke="#ff0000" stroke-width="1.1"/><circle cx="405" cy="431" r="1.45" fill="#fff" stroke="#ff0000" stroke-width="1.1"/><circle cx="409" cy="431" r="1.45" fill="#fff" stroke="#ff0000" stroke-width="1.1"/><circle cx="413" cy="431" r="1.45" fill="#fff" stroke="#ff0000" stroke-width="1.1"/><circle cx="417" cy="431" r="1.45" fill="#fff" stroke="#ff0000" stroke-width="1.1"/><circle cx="421" cy="431" r="1.45" fill="#fff" stroke="#ff0000" stroke-width="1.1"/><circle cx="425" cy="431" r="1.45" fill="#fff" stroke="#ff0000" stroke-width="1.1"/><circle cx="429" cy="431" r="1.45" fill="#fff" stroke="#ff0000" stroke-width="1.1"/><circle cx="433" cy="431" r="1.45" fill="#fff" stroke="#ff0000" stroke-width="1.1"/><circle cx="437" cy="431" r="1.45" fill="#fff" stroke="#ff0000" stroke-width="1.1"/><circle cx="441" cy="431" r="1.45" fill="#fff" stroke="#ff0000" stroke-width="1.1"/><circle cx="445" cy="431" r="1.45" fill="#fff" stroke="#ff0000" stroke-width="1.1"/><circle cx="449" cy="431" r="1.45" fill="#fff" stroke="#ff0000" stroke-width="1.1"/><circle cx="453" cy="431" r="1.45" fill="#fff" stroke="#ff0000" stroke-width="1.1"/><circle cx="457" cy="431" r="1.45" fill="#fff" stroke="#ff0000" stroke-width="1.1"/><circle cx="461" cy="431" r="1.45" fill="#fff" stroke="#ff0000" stroke-width="1.1"/><circle cx="465" cy="431" r="1.45" fill="#fff" stroke="#ff0000" stroke-width="1.1"/><circle cx="469" cy="431" r="1.45" fill="#fff" stroke="#ff0000" stroke-width="1.1"/><circle cx="473" cy="431" r="1.45" fill="#fff" stroke="#ff0000" stroke-width="1.1"/><circle cx="477" cy="431" r="1.45" fill="#fff" stroke="#ff0000" stroke-width="1.1"/><circle cx="481" cy="431" r="1.45" fill="#fff" stroke="#ff0000" stroke-width="1.1"/><circle cx="485" cy="431" r="1.45" fill="#fff" stroke="#ff0000" stroke-width="1.1"/></g>
<g shape-rendering="auto"><circle cx="493" cy="292" r="1.45" fill="#fff" stroke="#ff0000" stroke-width="1.1"/><circle cx="497" cy="292" r="1.45" fill="#fff" stroke="#ff0000" stroke-width="1.1"/><circle cx="501" cy="292" r="1.45" fill="#fff" stroke="#ff0000" stroke-width="1.1"/><circle cx="505" cy="292" r="1.45" fill="#fff" stroke="#ff0000" stroke-width="1.1"/><circle cx="509" cy="292" r="1.45" fill="#fff" stroke="#ff0000" stroke-width="1.1"/><circle cx="513" cy="292" r="1.45" fill="#fff" stroke="#ff0000" stroke-width="1.1"/><circle cx="517" cy="292" r="1.45" fill="#fff" stroke="#ff0000" stroke-width="1.1"/><circle cx="521" cy="292" r="1.45" fill="#fff" stroke="#ff0000" stroke-width="1.1"/><circle cx="525" cy="292" r="1.45" fill="#fff" stroke="#ff0000" stroke-width="1.1"/><circle cx="529" cy="292" r="1.45" fill="#fff" stroke="#ff0000" stroke-width="1.1"/><circle cx="533" cy="292" r="1.45" fill="#fff" stroke="#ff0000" stroke-width="1.1"/><circle cx="537" cy="292" r="1.45" fill="#fff" stroke="#ff0000" stroke-width="1.1"/><circle cx="541" cy="292" r="1.45" fill="#fff" stroke="#ff0000" stroke-width="1.1"/><circle cx="545" cy="292" r="1.45" fill="#fff" stroke="#ff0000" stroke-width="1.1"/><circle cx="549" cy="292" r="1.45" fill="#fff" stroke="#ff0000" stroke-width="1.1"/><circle cx="553" cy="292" r="1.45" fill="#fff" stroke="#ff0000" stroke-width="1.1"/><circle cx="557" cy="292" r="1.45" fill="#fff" stroke="#ff0000" stroke-width="1.1"/><circle cx="561" cy="292" r="1.45" fill="#fff" stroke="#ff0000" stroke-width="1.1"/><circle cx="565" cy="292" r="1.45" fill="#fff" stroke="#ff0000" stroke-width="1.1"/><circle cx="569" cy="292" r="1.45" fill="#fff" stroke="#ff0000" stroke-width="1.1"/><circle cx="573" cy="292" r="1.45" fill="#fff" stroke="#ff0000" stroke-width="1.1"/><circle cx="577" cy="292" r="1.45" fill="#fff" stroke="#ff0000" stroke-width="1.1"/><circle cx="581" cy="292" r="1.45" fill="#fff" stroke="#ff0000" stroke-width="1.1"/><circle cx="585" cy="292" r="1.45" fill="#fff" stroke="#ff0000" stroke-width="1.1"/><circle cx="589" cy="292" r="1.45" fill="#fff" stroke="#ff0000" stroke-width="1.1"/><circle cx="593" cy="292" r="1.45" fill="#fff" stroke="#ff0000" stroke-width="1.1"/><circle cx="597" cy="292" r="1.45" fill="#fff" stroke="#ff0000" stroke-width="1.1"/><circle cx="601" cy="292" r="1.45" fill="#fff" stroke="#ff0000" stroke-width="1.1"/><circle cx="605" cy="292" r="1.45" fill="#fff" stroke="#ff0000" stroke-width="1.1"/><circle cx="609" cy="292" r="1.45" fill="#fff" stroke="#ff0000" stroke-width="1.1"/><circle cx="613" cy="292" r="1.45" fill="#fff" stroke="#ff0000" stroke-width="1.1"/><circle cx="617" cy="292" r="1.45" fill="#fff" stroke="#ff0000" stroke-width="1.1"/><circle cx="621" cy="292" r="1.45" fill="#fff" stroke="#ff0000" stroke-width="1.1"/><circle cx="625" cy="292" r="1.45" fill="#fff" stroke="#ff0000" stroke-width="1.1"/><circle cx="629" cy="292" r="1.45" fill="#fff" stroke="#ff0000" stroke-width="1.1"/><circle cx="633" cy="292" r="1.45" fill="#fff" stroke="#ff0000" stroke-width="1.1"/><circle cx="637" cy="292" r="1.45" fill="#fff" stroke="#ff0000" stroke-width="1.1"/><circle cx="641" cy="292" r="1.45" fill="#fff" stroke="#ff0000" stroke-width="1.1"/><circle cx="645" cy="292" r="1.45" fill="#fff" stroke="#ff0000" stroke-width="1.1"/><circle cx="649" cy="292" r="1.45" fill="#fff" stroke="#ff0000" stroke-width="1.1"/><circle cx="653" cy="292" r="1.45" fill="#fff" stroke="#ff0000" stroke-width="1.1"/><circle cx="657" cy="292" r="1.45" fill="#fff" stroke="#ff0000" stroke-width="1.1"/><circle cx="661" cy="292" r="1.45" fill="#fff" stroke="#ff0000" stroke-width="1.1"/><circle cx="665" cy="292" r="1.45" fill="#fff" stroke="#ff0000" stroke-width="1.1"/><circle cx="669" cy="292" r="1.45" fill="#fff" stroke="#ff0000" stroke-width="1.1"/><circle cx="673" cy="292" r="1.45" fill="#fff" stroke="#ff0000" stroke-width="1.1"/><circle cx="677" cy="292" r="1.45" fill="#fff" stroke="#ff0000" stroke-width="1.1"/><circle cx="681" cy="292" r="1.45" fill="#fff" stroke="#ff0000" stroke-width="1.1"/><circle cx="685" cy="292" r="1.45" fill="#fff" stroke="#ff0000" stroke-width="1.1"/><circle cx="689" cy="292" r="1.45" fill="#fff" stroke="#ff0000" stroke-width="1.1"/><circle cx="693" cy="292" r="1.45" fill="#fff" stroke="#ff0000" stroke-width="1.1"/><circle cx="697" cy="292" r="1.45" fill="#fff" stroke="#ff0000" stroke-width="1.1"/><circle cx="701" cy="292" r="1.45" fill="#fff" stroke="#ff0000" stroke-width="1.1"/><circle cx="705" cy="292" r="1.45" fill="#fff" stroke="#ff0000" stroke-width="1.1"/><circle cx="709" cy="292" r="1.45" fill="#fff" stroke="#ff0000" stroke-width="1.1"/><circle cx="713" cy="292" r="1.45" fill="#fff" stroke="#ff0000" stroke-width="1.1"/><circle cx="717" cy="292" r="1.45" fill="#fff" stroke="#ff0000" stroke-width="1.1"/><circle cx="721" cy="292" r="1.45" fill="#fff" stroke="#ff0000" stroke-width="1.1"/><circle cx="725" cy="292" r="1.45" fill="#fff" stroke="#ff0000" stroke-width="1.1"/><circle cx="729" cy="292" r="1.45" fill="#fff" stroke="#ff0000" stroke-width="1.1"/><circle cx="733" cy="292" r="1.45" fill="#fff" stroke="#ff0000" stroke-width="1.1"/><circle cx="737" cy="292" r="1.45" fill="#fff" stroke="#ff0000" stroke-width="1.1"/><circle cx="741" cy="292" r="1.45" fill="#fff" stroke="#ff0000" stroke-width="1.1"/><circle cx="745" cy="292" r="1.45" fill="#fff" stroke="#ff0000" stroke-width="1.1"/><circle cx="749" cy="292" r="1.45" fill="#fff" stroke="#ff0000" stroke-width="1.1"/><circle cx="753" cy="292" r="1.45" fill="#fff" stroke="#ff0000" stroke-width="1.1"/><circle cx="757" cy="292" r="1.45" fill="#fff" stroke="#ff0000" stroke-width="1.1"/><circle cx="761" cy="292" r="1.45" fill="#fff" stroke="#ff0000" stroke-width="1.1"/><circle cx="765" cy="292" r="1.45" fill="#fff" stroke="#ff0000" stroke-width="1.1"/><circle cx="769" cy="292" r="1.45" fill="#fff" stroke="#ff0000" stroke-width="1.1"/><circle cx="773" cy="292" r="1.45" fill="#fff" stroke="#ff0000" stroke-width="1.1"/><circle cx="777" cy="292" r="1.45" fill="#fff" stroke="#ff0000" stroke-width="1.1"/><circle cx="781" cy="292" r="1.45" fill="#fff" stroke="#ff0000" stroke-width="1.1"/><circle cx="785" cy="292" r="1.45" fill="#fff" stroke="#ff0000" stroke-width="1.1"/><circle cx="789" cy="292" r="1.45" fill="#fff" stroke="#ff0000" stroke-width="1.1"/><circle cx="793" cy="292" r="1.45" fill="#fff" stroke="#ff0000" stroke-width="1.1"/><circle cx="797" cy="292" r="1.45" fill="#fff" stroke="#ff0000" stroke-width="1.1"/><circle cx="801" cy="292" r="1.45" fill="#fff" stroke="#ff0000" stroke-width="1.1"/><circle cx="805" cy="292" r="1.45" fill="#fff" stroke="#ff0000" stroke-width="1.1"/><circle cx="809" cy="292" r="1.45" fill="#fff" stroke="#ff0000" stroke-width="1.1"/><circle cx="813" cy="292" r="1.45" fill="#fff" stroke="#ff0000" stroke-width="1.1"/><circle cx="817" cy="292" r="1.45" fill="#fff" stroke="#ff0000" stroke-width="1.1"/><circle cx="821" cy="292" r="1.45" fill="#fff" stroke="#ff0000" stroke-width="1.1"/></g>
<path d="M486.5 431 L488.5 380 L489.5 322 L489.5 300 Q489.8 292 493.5 292" fill="none" stroke="#ff0000" stroke-width="1.1" shape-rendering="auto"/>
<g shape-rendering="auto">
<path d="M137.8 238.0 L141.0 234.5 L144.5 238.0 L141.0 241.5z" fill="#0000ff"/>
<path d="M141.8 314.0 L145.0 310.5 L148.5 314.0 L145.0 317.5z" fill="#0000ff"/>
<path d="M145.8 340.0 L149.0 336.5 L152.5 340.0 L149.0 343.5z" fill="#0000ff"/>
<path d="M149.8 264.0 L153.0 260.5 L156.5 264.0 L153.0 267.5z" fill="#0000ff"/>
<path d="M153.8 357.0 L157.0 353.5 L160.5 357.0 L157.0 360.5z" fill="#0000ff"/>
<path d="M157.8 265.0 L161.0 261.5 L164.5 265.0 L161.0 268.5z" fill="#0000ff"/>
<path d="M161.8 290.0 L165.0 286.5 L168.5 290.0 L165.0 293.5z" fill="#0000ff"/>
<path d="M165.8 325.5 L169.0 322.0 L172.5 325.5 L169.0 329.0z" fill="#0000ff"/>
<path d="M169.8 313.0 L173.0 309.5 L176.5 313.0 L173.0 316.5z" fill="#0000ff"/>
<path d="M173.8 208.0 L177.0 204.5 L180.5 208.0 L177.0 211.5z" fill="#0000ff"/>
<path d="M177.8 270.0 L181.0 266.5 L184.5 270.0 L181.0 273.5z" fill="#0000ff"/>
<path d="M181.8 286.0 L185.0 282.5 L188.5 286.0 L185.0 289.5z" fill="#0000ff"/>
<path d="M185.8 268.5 L189.0 265.0 L192.5 268.5 L189.0 272.0z" fill="#0000ff"/>
<path d="M189.8 341.5 L193.0 338.0 L196.5 341.5 L193.0 345.0z" fill="#0000ff"/>
<path d="M193.8 265.0 L197.0 261.5 L200.5 265.0 L197.0 268.5z" fill="#0000ff"/>
<path d="M197.8 275.0 L201.0 271.5 L204.5 275.0 L201.0 278.5z" fill="#0000ff"/>
<path d="M201.8 232.5 L205.0 229.0 L208.5 232.5 L205.0 236.0z" fill="#0000ff"/>
<path d="M205.8 309.0 L209.0 305.5 L212.5 309.0 L209.0 312.5z" fill="#0000ff"/>
<path d="M209.8 333.5 L213.0 330.0 L216.5 333.5 L213.0 337.0z" fill="#0000ff"/>
<path d="M213.8 275.0 L217.0 271.5 L220.5 275.0 L217.0 278.5z" fill="#0000ff"/>
<path d="M217.8 207.0 L221.0 203.5 L224.5 207.0 L221.0 210.5z" fill="#0000ff"/>
<path d="M221.8 264.0 L225.0 260.5 L228.5 264.0 L225.0 267.5z" fill="#0000ff"/>
<path d="M225.8 233.5 L229.0 230.0 L232.5 233.5 L229.0 237.0z" fill="#0000ff"/>
<path d="M229.8 258.0 L233.0 254.5 L236.5 258.0 L233.0 261.5z" fill="#0000ff"/>
<path d="M233.8 322.5 L237.0 319.0 L240.5 322.5 L237.0 326.0z" fill="#0000ff"/>
<path d="M237.8 262.0 L241.0 258.5 L244.5 262.0 L241.0 265.5z" fill="#0000ff"/>
<path d="M241.8 268.5 L245.0 265.0 L248.5 268.5 L245.0 272.0z" fill="#0000ff"/>
<path d="M245.8 264.5 L249.0 261.0 L252.5 264.5 L249.0 268.0z" fill="#0000ff"/>
<path d="M249.8 310.0 L253.0 306.5 L256.5 310.0 L253.0 313.5z" fill="#0000ff"/>
<path d="M253.8 267.0 L257.0 263.5 L260.5 267.0 L257.0 270.5z" fill="#0000ff"/>
<path d="M257.8 248.0 L261.0 244.5 L264.5 248.0 L261.0 251.5z" fill="#0000ff"/>
<path d="M261.8 205.0 L265.0 201.5 L268.5 205.0 L265.0 208.5z" fill="#0000ff"/>
<path d="M265.8 352.5 L269.0 349.0 L272.5 352.5 L269.0 356.0z" fill="#0000ff"/>
<path d="M269.8 275.0 L273.0 271.5 L276.5 275.0 L273.0 278.5z" fill="#0000ff"/>
<path d="M273.8 255.0 L277.0 251.5 L280.5 255.0 L277.0 258.5z" fill="#0000ff"/>
<path d="M277.8 250.0 L281.0 246.5 L284.5 250.0 L281.0 253.5z" fill="#0000ff"/>
<path d="M281.8 276.0 L285.0 272.5 L288.5 276.0 L285.0 279.5z" fill="#0000ff"/>
<path d="M285.8 302.0 L289.0 298.5 L292.5 302.0 L289.0 305.5z" fill="#0000ff"/>
<path d="M289.8 255.0 L293.0 251.5 L296.5 255.0 L293.0 258.5z" fill="#0000ff"/>
<path d="M293.8 270.0 L297.0 266.5 L300.5 270.0 L297.0 273.5z" fill="#0000ff"/>
<path d="M297.8 267.0 L301.0 263.5 L304.5 267.0 L301.0 270.5z" fill="#0000ff"/>
<path d="M301.8 333.5 L305.0 330.0 L308.5 333.5 L305.0 337.0z" fill="#0000ff"/>
<path d="M305.8 237.0 L309.0 233.5 L312.5 237.0 L309.0 240.5z" fill="#0000ff"/>
<path d="M309.8 297.0 L313.0 293.5 L316.5 297.0 L313.0 300.5z" fill="#0000ff"/>
<path d="M313.8 355.0 L317.0 351.5 L320.5 355.0 L317.0 358.5z" fill="#0000ff"/>
<path d="M317.8 281.0 L321.0 277.5 L324.5 281.0 L321.0 284.5z" fill="#0000ff"/>
<path d="M321.8 334.5 L325.0 331.0 L328.5 334.5 L325.0 338.0z" fill="#0000ff"/>
<path d="M325.8 262.0 L329.0 258.5 L332.5 262.0 L329.0 265.5z" fill="#0000ff"/>
<path d="M329.8 286.5 L333.0 283.0 L336.5 286.5 L333.0 290.0z" fill="#0000ff"/>
<path d="M333.8 252.0 L337.0 248.5 L340.5 252.0 L337.0 255.5z" fill="#0000ff"/>
<path d="M337.8 222.0 L341.0 218.5 L344.5 222.0 L341.0 225.5z" fill="#0000ff"/>
<path d="M341.8 286.0 L345.0 282.5 L348.5 286.0 L345.0 289.5z" fill="#0000ff"/>
<path d="M345.8 350.5 L349.0 347.0 L352.5 350.5 L349.0 354.0z" fill="#0000ff"/>
<path d="M349.8 203.0 L353.0 199.5 L356.5 203.0 L353.0 206.5z" fill="#0000ff"/>
<path d="M353.8 220.0 L357.0 216.5 L360.5 220.0 L357.0 223.5z" fill="#0000ff"/>
<path d="M357.8 256.0 L361.0 252.5 L364.5 256.0 L361.0 259.5z" fill="#0000ff"/>
<path d="M361.8 267.0 L365.0 263.5 L368.5 267.0 L365.0 270.5z" fill="#0000ff"/>
<path d="M365.8 202.0 L369.0 198.5 L372.5 202.0 L369.0 205.5z" fill="#0000ff"/>
<path d="M369.8 367.0 L373.0 363.5 L376.5 367.0 L373.0 370.5z" fill="#0000ff"/>
<path d="M373.8 247.5 L377.0 244.0 L380.5 247.5 L377.0 251.0z" fill="#0000ff"/>
<path d="M377.8 284.0 L381.0 280.5 L384.5 284.0 L381.0 287.5z" fill="#0000ff"/>
<path d="M381.8 329.5 L385.0 326.0 L388.5 329.5 L385.0 333.0z" fill="#0000ff"/>
<path d="M385.8 253.0 L389.0 249.5 L392.5 253.0 L389.0 256.5z" fill="#0000ff"/>
<path d="M389.8 300.0 L393.0 296.5 L396.5 300.0 L393.0 303.5z" fill="#0000ff"/>
<path d="M393.8 325.5 L397.0 322.0 L400.5 325.5 L397.0 329.0z" fill="#0000ff"/>
<path d="M397.8 283.0 L401.0 279.5 L404.5 283.0 L401.0 286.5z" fill="#0000ff"/>
<path d="M401.8 360.5 L405.0 357.0 L408.5 360.5 L405.0 364.0z" fill="#0000ff"/>
<path d="M405.8 232.5 L409.0 229.0 L412.5 232.5 L409.0 236.0z" fill="#0000ff"/>
<path d="M409.8 312.0 L413.0 308.5 L416.5 312.0 L413.0 315.5z" fill="#0000ff"/>
<path d="M413.8 301.0 L417.0 297.5 L420.5 301.0 L417.0 304.5z" fill="#0000ff"/>
<path d="M417.8 213.0 L421.0 209.5 L424.5 213.0 L421.0 216.5z" fill="#0000ff"/>
<path d="M421.8 307.0 L425.0 303.5 L428.5 307.0 L425.0 310.5z" fill="#0000ff"/>
<path d="M425.8 195.0 L429.0 191.5 L432.5 195.0 L429.0 198.5z" fill="#0000ff"/>
<path d="M429.8 247.0 L433.0 243.5 L436.5 247.0 L433.0 250.5z" fill="#0000ff"/>
<path d="M433.8 311.0 L437.0 307.5 L440.5 311.0 L437.0 314.5z" fill="#0000ff"/>
<path d="M437.8 272.0 L441.0 268.5 L444.5 272.0 L441.0 275.5z" fill="#0000ff"/>
<path d="M441.8 332.5 L445.0 329.0 L448.5 332.5 L445.0 336.0z" fill="#0000ff"/>
<path d="M445.8 259.0 L449.0 255.5 L452.5 259.0 L449.0 262.5z" fill="#0000ff"/>
<path d="M449.8 269.5 L453.0 266.0 L456.5 269.5 L453.0 273.0z" fill="#0000ff"/>
<path d="M453.8 228.0 L457.0 224.5 L460.5 228.0 L457.0 231.5z" fill="#0000ff"/>
<path d="M457.8 255.0 L461.0 251.5 L464.5 255.0 L461.0 258.5z" fill="#0000ff"/>
<path d="M461.8 211.0 L465.0 207.5 L468.5 211.0 L465.0 214.5z" fill="#0000ff"/>
<path d="M465.8 305.0 L469.0 301.5 L472.5 305.0 L469.0 308.5z" fill="#0000ff"/>
<path d="M469.8 230.5 L473.0 227.0 L476.5 230.5 L473.0 234.0z" fill="#0000ff"/>
<path d="M473.8 217.0 L477.0 213.5 L480.5 217.0 L477.0 220.5z" fill="#0000ff"/>
<path d="M477.8 353.5 L481.0 350.0 L484.5 353.5 L481.0 357.0z" fill="#0000ff"/>
<path d="M482.7 431.5 L485.0 429.2 L487.3 431.5 L485.0 433.8z" fill="#fff" stroke="#10a030" stroke-width="1.4"/>
<path d="M490.7 286.0 L493.0 283.7 L495.3 286.0 L493.0 288.3z" fill="#fff" stroke="#0000ff" stroke-width="1.4"/>
<path d="M494.7 298.0 L497.0 295.7 L499.3 298.0 L497.0 300.3z" fill="#fff" stroke="#0000ff" stroke-width="1.4"/>
<path d="M498.7 303.0 L501.0 300.7 L503.3 303.0 L501.0 305.3z" fill="#fff" stroke="#0000ff" stroke-width="1.4"/>
<path d="M502.7 170.0 L505.0 167.7 L507.3 170.0 L505.0 172.3z" fill="#fff" stroke="#0000ff" stroke-width="1.4"/>
<path d="M506.7 295.0 L509.0 292.7 L511.3 295.0 L509.0 297.3z" fill="#fff" stroke="#0000ff" stroke-width="1.4"/>
<path d="M510.7 303.0 L513.0 300.7 L515.3 303.0 L513.0 305.3z" fill="#fff" stroke="#0000ff" stroke-width="1.4"/>
<path d="M514.7 299.0 L517.0 296.7 L519.3 299.0 L517.0 301.3z" fill="#fff" stroke="#0000ff" stroke-width="1.4"/>
<path d="M518.7 298.0 L521.0 295.7 L523.3 298.0 L521.0 300.3z" fill="#fff" stroke="#0000ff" stroke-width="1.4"/>
<path d="M522.7 271.0 L525.0 268.7 L527.3 271.0 L525.0 273.3z" fill="#fff" stroke="#0000ff" stroke-width="1.4"/>
<path d="M526.7 270.0 L529.0 267.7 L531.3 270.0 L529.0 272.3z" fill="#fff" stroke="#0000ff" stroke-width="1.4"/>
<path d="M530.7 244.0 L533.0 241.7 L535.3 244.0 L533.0 246.3z" fill="#fff" stroke="#10a030" stroke-width="1.4"/>
<path d="M534.7 347.0 L537.0 344.7 L539.3 347.0 L537.0 349.3z" fill="#fff" stroke="#10a030" stroke-width="1.4"/>
<path d="M538.7 213.0 L541.0 210.7 L543.3 213.0 L541.0 215.3z" fill="#fff" stroke="#10a030" stroke-width="1.4"/>
<path d="M542.7 305.0 L545.0 302.7 L547.3 305.0 L545.0 307.3z" fill="#fff" stroke="#10a030" stroke-width="1.4"/>
<path d="M546.7 251.5 L549.0 249.2 L551.3 251.5 L549.0 253.8z" fill="#fff" stroke="#10a030" stroke-width="1.4"/>
<path d="M550.7 241.5 L553.0 239.2 L555.3 241.5 L553.0 243.8z" fill="#fff" stroke="#10a030" stroke-width="1.4"/>
<path d="M554.7 282.0 L557.0 279.7 L559.3 282.0 L557.0 284.3z" fill="#fff" stroke="#10a030" stroke-width="1.4"/>
<path d="M558.7 208.0 L561.0 205.7 L563.3 208.0 L561.0 210.3z" fill="#fff" stroke="#10a030" stroke-width="1.4"/>
<path d="M562.7 284.0 L565.0 281.7 L567.3 284.0 L565.0 286.3z" fill="#fff" stroke="#10a030" stroke-width="1.4"/>
<path d="M566.7 319.0 L569.0 316.7 L571.3 319.0 L569.0 321.3z" fill="#fff" stroke="#10a030" stroke-width="1.4"/>
<path d="M570.7 271.0 L573.0 268.7 L575.3 271.0 L573.0 273.3z" fill="#fff" stroke="#10a030" stroke-width="1.4"/>
<path d="M574.7 350.0 L577.0 347.7 L579.3 350.0 L577.0 352.3z" fill="#fff" stroke="#10a030" stroke-width="1.4"/>
<path d="M578.7 293.0 L581.0 290.7 L583.3 293.0 L581.0 295.3z" fill="#fff" stroke="#10a030" stroke-width="1.4"/>
<path d="M582.7 318.0 L585.0 315.7 L587.3 318.0 L585.0 320.3z" fill="#fff" stroke="#10a030" stroke-width="1.4"/>
<path d="M586.7 294.0 L589.0 291.7 L591.3 294.0 L589.0 296.3z" fill="#fff" stroke="#10a030" stroke-width="1.4"/>
<path d="M590.7 281.0 L593.0 278.7 L595.3 281.0 L593.0 283.3z" fill="#fff" stroke="#10a030" stroke-width="1.4"/>
<path d="M594.7 311.0 L597.0 308.7 L599.3 311.0 L597.0 313.3z" fill="#fff" stroke="#10a030" stroke-width="1.4"/>
<path d="M598.7 299.0 L601.0 296.7 L603.3 299.0 L601.0 301.3z" fill="#fff" stroke="#10a030" stroke-width="1.4"/>
<path d="M602.7 295.0 L605.0 292.7 L607.3 295.0 L605.0 297.3z" fill="#fff" stroke="#10a030" stroke-width="1.4"/>
<path d="M606.7 319.5 L609.0 317.2 L611.3 319.5 L609.0 321.8z" fill="#fff" stroke="#10a030" stroke-width="1.4"/>
<path d="M610.7 294.0 L613.0 291.7 L615.3 294.0 L613.0 296.3z" fill="#fff" stroke="#10a030" stroke-width="1.4"/>
<path d="M614.7 270.0 L617.0 267.7 L619.3 270.0 L617.0 272.3z" fill="#fff" stroke="#10a030" stroke-width="1.4"/>
<path d="M618.7 367.0 L621.0 364.7 L623.3 367.0 L621.0 369.3z" fill="#fff" stroke="#10a030" stroke-width="1.4"/>
<path d="M622.7 265.0 L625.0 262.7 L627.3 265.0 L625.0 267.3z" fill="#fff" stroke="#10a030" stroke-width="1.4"/>
<path d="M626.7 347.5 L629.0 345.2 L631.3 347.5 L629.0 349.8z" fill="#fff" stroke="#10a030" stroke-width="1.4"/>
<path d="M630.7 334.5 L633.0 332.2 L635.3 334.5 L633.0 336.8z" fill="#fff" stroke="#10a030" stroke-width="1.4"/>
<path d="M634.7 282.0 L637.0 279.7 L639.3 282.0 L637.0 284.3z" fill="#fff" stroke="#10a030" stroke-width="1.4"/>
<path d="M638.7 324.5 L641.0 322.2 L643.3 324.5 L641.0 326.8z" fill="#fff" stroke="#10a030" stroke-width="1.4"/>
<path d="M642.7 316.0 L645.0 313.7 L647.3 316.0 L645.0 318.3z" fill="#fff" stroke="#10a030" stroke-width="1.4"/>
<path d="M646.7 301.0 L649.0 298.7 L651.3 301.0 L649.0 303.3z" fill="#fff" stroke="#10a030" stroke-width="1.4"/>
<path d="M650.7 284.0 L653.0 281.7 L655.3 284.0 L653.0 286.3z" fill="#fff" stroke="#10a030" stroke-width="1.4"/>
<path d="M654.7 209.0 L657.0 206.7 L659.3 209.0 L657.0 211.3z" fill="#fff" stroke="#10a030" stroke-width="1.4"/>
<path d="M658.7 320.5 L661.0 318.2 L663.3 320.5 L661.0 322.8z" fill="#fff" stroke="#10a030" stroke-width="1.4"/>
<path d="M662.7 296.0 L665.0 293.7 L667.3 296.0 L665.0 298.3z" fill="#fff" stroke="#10a030" stroke-width="1.4"/>
<path d="M666.7 290.0 L669.0 287.7 L671.3 290.0 L669.0 292.3z" fill="#fff" stroke="#10a030" stroke-width="1.4"/>
<path d="M669.8 235.0 L673.0 231.5 L676.5 235.0 L673.0 238.5z" fill="#0000ff"/>
<path d="M673.8 264.0 L677.0 260.5 L680.5 264.0 L677.0 267.5z" fill="#0000ff"/>
<path d="M677.8 226.0 L681.0 222.5 L684.5 226.0 L681.0 229.5z" fill="#0000ff"/>
<path d="M681.8 258.0 L685.0 254.5 L688.5 258.0 L685.0 261.5z" fill="#0000ff"/>
<path d="M685.8 256.0 L689.0 252.5 L692.5 256.0 L689.0 259.5z" fill="#0000ff"/>
<path d="M689.8 289.0 L693.0 285.5 L696.5 289.0 L693.0 292.5z" fill="#0000ff"/>
<path d="M693.8 262.0 L697.0 258.5 L700.5 262.0 L697.0 265.5z" fill="#0000ff"/>
<path d="M697.8 277.0 L701.0 273.5 L704.5 277.0 L701.0 280.5z" fill="#0000ff"/>
<path d="M701.8 319.5 L705.0 316.0 L708.5 319.5 L705.0 323.0z" fill="#0000ff"/>
<path d="M705.8 252.0 L709.0 248.5 L712.5 252.0 L709.0 255.5z" fill="#0000ff"/>
<path d="M709.8 257.5 L713.0 254.0 L716.5 257.5 L713.0 261.0z" fill="#0000ff"/>
<path d="M713.8 344.5 L717.0 341.0 L720.5 344.5 L717.0 348.0z" fill="#0000ff"/>
<path d="M717.8 299.0 L721.0 295.5 L724.5 299.0 L721.0 302.5z" fill="#0000ff"/>
<path d="M721.8 286.0 L725.0 282.5 L728.5 286.0 L725.0 289.5z" fill="#0000ff"/>
<path d="M725.8 166.0 L729.0 162.5 L732.5 166.0 L729.0 169.5z" fill="#0000ff"/>
<path d="M729.8 278.0 L733.0 274.5 L736.5 278.0 L733.0 281.5z" fill="#0000ff"/>
<path d="M733.8 210.0 L737.0 206.5 L740.5 210.0 L737.0 213.5z" fill="#0000ff"/>
<path d="M737.8 264.0 L741.0 260.5 L744.5 264.0 L741.0 267.5z" fill="#0000ff"/>
<path d="M741.8 257.0 L745.0 253.5 L748.5 257.0 L745.0 260.5z" fill="#0000ff"/>
<path d="M745.8 237.0 L749.0 233.5 L752.5 237.0 L749.0 240.5z" fill="#0000ff"/>
<path d="M749.8 371.5 L753.0 368.0 L756.5 371.5 L753.0 375.0z" fill="#0000ff"/>
<path d="M753.8 279.0 L757.0 275.5 L760.5 279.0 L757.0 282.5z" fill="#0000ff"/>
<path d="M757.8 294.0 L761.0 290.5 L764.5 294.0 L761.0 297.5z" fill="#0000ff"/>
<path d="M761.8 183.0 L765.0 179.5 L768.5 183.0 L765.0 186.5z" fill="#0000ff"/>
<path d="M765.8 221.0 L769.0 217.5 L772.5 221.0 L769.0 224.5z" fill="#0000ff"/>
<path d="M769.8 287.5 L773.0 284.0 L776.5 287.5 L773.0 291.0z" fill="#0000ff"/>
<path d="M773.8 253.0 L777.0 249.5 L780.5 253.0 L777.0 256.5z" fill="#0000ff"/>
<path d="M777.8 332.5 L781.0 329.0 L784.5 332.5 L781.0 336.0z" fill="#0000ff"/>
<path d="M781.8 329.5 L785.0 326.0 L788.5 329.5 L785.0 333.0z" fill="#0000ff"/>
<path d="M785.8 315.0 L789.0 311.5 L792.5 315.0 L789.0 318.5z" fill="#0000ff"/>
<path d="M789.8 345.5 L793.0 342.0 L796.5 345.5 L793.0 349.0z" fill="#0000ff"/>
<path d="M793.8 314.0 L797.0 310.5 L800.5 314.0 L797.0 317.5z" fill="#0000ff"/>
<path d="M797.8 315.0 L801.0 311.5 L804.5 315.0 L801.0 318.5z" fill="#0000ff"/>
<path d="M801.8 342.5 L805.0 339.0 L808.5 342.5 L805.0 346.0z" fill="#0000ff"/>
<path d="M805.8 325.5 L809.0 322.0 L812.5 325.5 L809.0 329.0z" fill="#0000ff"/>
<path d="M809.8 280.0 L813.0 276.5 L816.5 280.0 L813.0 283.5z" fill="#0000ff"/>
<path d="M813.8 356.0 L817.0 352.5 L820.5 356.0 L817.0 359.5z" fill="#0000ff"/>
</g>
<rect x="483" y="322" width="13" height="1" fill="#ff00ff" />
<circle cx="489" cy="322.5" r="2.1" fill="#fff" stroke="#ff0000" stroke-width="1.2" shape-rendering="auto"/>
<rect x="479" y="362" width="18" height="1" fill="#c8c800" />
<rect x="488" y="336" width="1" height="53" fill="#000080" />
<rect x="486" y="336" width="5" height="1" fill="#000040" />
<rect x="486" y="388" width="5" height="1" fill="#000040" />
<rect x="487" y="359" width="3" height="6" fill="#303070" />
<rect x="100" y="574" width="720" height="1" fill="#000" />
<g clip-path="url(#clipLow)">
<rect x="487" y="499" width="1" height="151" fill="#ffff00" />
<polyline points="141.0,381.0 145.0,456.8 149.0,483.0 153.0,407.0 157.0,499.9 161.0,407.9 165.0,432.9 169.0,468.7 173.0,456.1 177.0,350.8 181.0,412.9 185.0,428.9 189.0,411.6 193.0,484.7 197.0,407.9 201.0,417.9 205.0,375.7 209.0,452.1 213.0,476.7 217.0,417.9 221.0,349.8 225.0,407.0 229.0,376.7 233.0,401.0 237.0,465.7 241.0,405.0 245.0,411.6 249.0,407.3 253.0,452.8 257.0,409.9 261.0,391.0 265.0,347.8 269.0,495.6 273.0,417.9 277.0,398.0 281.0,393.0 285.0,418.9 289.0,444.8 293.0,398.0 297.0,412.9 301.0,409.9 305.0,476.7 309.0,380.1 313.0,439.8 317.0,498.0 321.0,423.9 325.0,477.7 329.0,405.0 333.0,429.5 337.0,395.0 341.0,364.8 345.0,428.9 349.0,493.6 353.0,345.8 357.0,362.8 361.0,399.0 365.0,409.9 369.0,344.8 373.0,509.9 377.0,390.7 381.0,426.9 385.0,472.7 389.0,396.0 393.0,442.8 397.0,468.7 401.0,425.9 405.0,503.6 409.0,375.7 413.0,454.8 417.0,443.8 421.0,355.8 425.0,449.8 429.0,337.9 433.0,390.0 437.0,453.8 441.0,414.9 445.0,475.7 449.0,402.0 453.0,412.6 457.0,370.8 461.0,398.0 465.0,353.8 469.0,447.8 473.0,373.7 477.0,360.1 481.0,496.6 485.0,574.3 489.0,574.3 493.0,567.9 497.0,579.8 501.0,584.8 505.0,452.0 509.0,576.8 513.0,584.8 517.0,580.8 521.0,579.8 525.0,552.9 529.0,551.9 533.0,526.0 537.0,629.0 541.0,494.8 545.0,586.8 549.0,533.7 553.0,523.7 557.0,563.9 561.0,489.8 565.0,565.9 569.0,600.8 573.0,552.9 577.0,632.0 581.0,574.8 585.0,599.8 589.0,575.8 593.0,562.9 597.0,592.8 601.0,580.8 605.0,576.8 609.0,601.7 613.0,575.8 617.0,551.9 621.0,648.9 625.0,546.9 629.0,629.6 633.0,616.7 637.0,563.9 641.0,606.7 645.0,597.8 649.0,582.8 653.0,565.9 657.0,490.8 661.0,602.7 665.0,577.8 669.0,571.9 673.0,517.1 677.0,546.0 681.0,507.8 685.0,540.0 689.0,538.0 693.0,570.9 697.0,544.0 701.0,558.9 705.0,601.7 709.0,534.0 713.0,539.6 717.0,626.7 721.0,580.8 725.0,567.9 729.0,448.0 733.0,559.9 737.0,491.8 741.0,546.0 745.0,539.0 749.0,519.1 753.0,653.6 757.0,560.9 761.0,575.8 765.0,464.9 769.0,502.8 773.0,569.5 777.0,535.0 781.0,614.7 785.0,611.7 789.0,596.8 793.0,627.7 797.0,596.1 801.0,596.8 805.0,624.7 809.0,607.7 813.0,561.9 817.0,637.9" fill="none" stroke="#8484ff" stroke-width="1"/>
<g shape-rendering="auto">
<path d="M153.8 500.0 L157.0 496.5 L160.5 500.0 L157.0 503.5z" fill="#0000ff"/>
<path d="M265.8 495.5 L269.0 492.0 L272.5 495.5 L269.0 499.0z" fill="#0000ff"/>
<path d="M313.8 498.0 L317.0 494.5 L320.5 498.0 L317.0 501.5z" fill="#0000ff"/>
<path d="M345.8 493.5 L349.0 490.0 L352.5 493.5 L349.0 497.0z" fill="#0000ff"/>
<path d="M369.8 510.0 L373.0 506.5 L376.5 510.0 L373.0 513.5z" fill="#0000ff"/>
<path d="M401.8 503.5 L405.0 500.0 L408.5 503.5 L405.0 507.0z" fill="#0000ff"/>
<path d="M477.8 496.5 L481.0 493.0 L484.5 496.5 L481.0 500.0z" fill="#0000ff"/>
<path d="M480.3 574.5 L483.5 571.0 L487.0 574.5 L483.5 578.0z" fill="#0000ff"/>
<path d="M484.8 574.5 L488.0 571.0 L491.5 574.5 L488.0 578.0z" fill="#0000ff"/>
<path d="M489.8 568.0 L493.0 564.5 L496.5 568.0 L493.0 571.5z" fill="#0000ff"/>
<path d="M493.8 580.0 L497.0 576.5 L500.5 580.0 L497.0 583.5z" fill="#0000ff"/>
<path d="M497.8 585.0 L501.0 581.5 L504.5 585.0 L501.0 588.5z" fill="#0000ff"/>
<path d="M505.8 577.0 L509.0 573.5 L512.5 577.0 L509.0 580.5z" fill="#0000ff"/>
<path d="M509.8 585.0 L513.0 581.5 L516.5 585.0 L513.0 588.5z" fill="#0000ff"/>
<path d="M513.8 581.0 L517.0 577.5 L520.5 581.0 L517.0 584.5z" fill="#0000ff"/>
<path d="M517.8 580.0 L521.0 576.5 L524.5 580.0 L521.0 583.5z" fill="#0000ff"/>
<path d="M521.8 553.0 L525.0 549.5 L528.5 553.0 L525.0 556.5z" fill="#0000ff"/>
<path d="M525.8 552.0 L529.0 548.5 L532.5 552.0 L529.0 555.5z" fill="#0000ff"/>
<path d="M529.8 526.0 L533.0 522.5 L536.5 526.0 L533.0 529.5z" fill="#0000ff"/>
<path d="M533.8 629.0 L537.0 625.5 L540.5 629.0 L537.0 632.5z" fill="#0000ff"/>
<path d="M537.8 495.0 L541.0 491.5 L544.5 495.0 L541.0 498.5z" fill="#0000ff"/>
<path d="M541.8 587.0 L545.0 583.5 L548.5 587.0 L545.0 590.5z" fill="#0000ff"/>
<path d="M545.8 533.5 L549.0 530.0 L552.5 533.5 L549.0 537.0z" fill="#0000ff"/>
<path d="M549.8 523.5 L553.0 520.0 L556.5 523.5 L553.0 527.0z" fill="#0000ff"/>
<path d="M553.8 564.0 L557.0 560.5 L560.5 564.0 L557.0 567.5z" fill="#0000ff"/>
<path d="M561.8 566.0 L565.0 562.5 L568.5 566.0 L565.0 569.5z" fill="#0000ff"/>
<path d="M565.8 601.0 L569.0 597.5 L572.5 601.0 L569.0 604.5z" fill="#0000ff"/>
<path d="M569.8 553.0 L573.0 549.5 L576.5 553.0 L573.0 556.5z" fill="#0000ff"/>
<path d="M573.8 632.0 L577.0 628.5 L580.5 632.0 L577.0 635.5z" fill="#0000ff"/>
<path d="M577.8 575.0 L581.0 571.5 L584.5 575.0 L581.0 578.5z" fill="#0000ff"/>
<path d="M581.8 600.0 L585.0 596.5 L588.5 600.0 L585.0 603.5z" fill="#0000ff"/>
<path d="M585.8 576.0 L589.0 572.5 L592.5 576.0 L589.0 579.5z" fill="#0000ff"/>
<path d="M589.8 563.0 L593.0 559.5 L596.5 563.0 L593.0 566.5z" fill="#0000ff"/>
<path d="M593.8 593.0 L597.0 589.5 L600.5 593.0 L597.0 596.5z" fill="#0000ff"/>
<path d="M597.8 581.0 L601.0 577.5 L604.5 581.0 L601.0 584.5z" fill="#0000ff"/>
<path d="M601.8 577.0 L605.0 573.5 L608.5 577.0 L605.0 580.5z" fill="#0000ff"/>
<path d="M605.8 601.5 L609.0 598.0 L612.5 601.5 L609.0 605.0z" fill="#0000ff"/>
<path d="M609.8 576.0 L613.0 572.5 L616.5 576.0 L613.0 579.5z" fill="#0000ff"/>
<path d="M613.8 552.0 L617.0 548.5 L620.5 552.0 L617.0 555.5z" fill="#0000ff"/>
<path d="M617.8 649.0 L621.0 645.5 L624.5 649.0 L621.0 652.5z" fill="#0000ff"/>
<path d="M621.8 547.0 L625.0 543.5 L628.5 547.0 L625.0 550.5z" fill="#0000ff"/>
<path d="M625.8 629.5 L629.0 626.0 L632.5 629.5 L629.0 633.0z" fill="#0000ff"/>
<path d="M629.8 616.5 L633.0 613.0 L636.5 616.5 L633.0 620.0z" fill="#0000ff"/>
<path d="M633.8 564.0 L637.0 560.5 L640.5 564.0 L637.0 567.5z" fill="#0000ff"/>
<path d="M637.8 606.5 L641.0 603.0 L644.5 606.5 L641.0 610.0z" fill="#0000ff"/>
<path d="M641.8 598.0 L645.0 594.5 L648.5 598.0 L645.0 601.5z" fill="#0000ff"/>
<path d="M645.8 583.0 L649.0 579.5 L652.5 583.0 L649.0 586.5z" fill="#0000ff"/>
<path d="M649.8 566.0 L653.0 562.5 L656.5 566.0 L653.0 569.5z" fill="#0000ff"/>
<path d="M653.8 491.0 L657.0 487.5 L660.5 491.0 L657.0 494.5z" fill="#0000ff"/>
<path d="M657.8 602.5 L661.0 599.0 L664.5 602.5 L661.0 606.0z" fill="#0000ff"/>
<path d="M661.8 578.0 L665.0 574.5 L668.5 578.0 L665.0 581.5z" fill="#0000ff"/>
<path d="M665.8 572.0 L669.0 568.5 L672.5 572.0 L669.0 575.5z" fill="#0000ff"/>
<path d="M669.8 517.0 L673.0 513.5 L676.5 517.0 L673.0 520.5z" fill="#0000ff"/>
<path d="M673.8 546.0 L677.0 542.5 L680.5 546.0 L677.0 549.5z" fill="#0000ff"/>
<path d="M677.8 508.0 L681.0 504.5 L684.5 508.0 L681.0 511.5z" fill="#0000ff"/>
<path d="M681.8 540.0 L685.0 536.5 L688.5 540.0 L685.0 543.5z" fill="#0000ff"/>
<path d="M685.8 538.0 L689.0 534.5 L692.5 538.0 L689.0 541.5z" fill="#0000ff"/>
<path d="M689.8 571.0 L693.0 567.5 L696.5 571.0 L693.0 574.5z" fill="#0000ff"/>
<path d="M693.8 544.0 L697.0 540.5 L700.5 544.0 L697.0 547.5z" fill="#0000ff"/>
<path d="M697.8 559.0 L701.0 555.5 L704.5 559.0 L701.0 562.5z" fill="#0000ff"/>
<path d="M701.8 601.5 L705.0 598.0 L708.5 601.5 L705.0 605.0z" fill="#0000ff"/>
<path d="M705.8 534.0 L709.0 530.5 L712.5 534.0 L709.0 537.5z" fill="#0000ff"/>
<path d="M709.8 539.5 L713.0 536.0 L716.5 539.5 L713.0 543.0z" fill="#0000ff"/>
<path d="M713.8 626.5 L717.0 623.0 L720.5 626.5 L717.0 630.0z" fill="#0000ff"/>
<path d="M717.8 581.0 L721.0 577.5 L724.5 581.0 L721.0 584.5z" fill="#0000ff"/>
<path d="M721.8 568.0 L725.0 564.5 L728.5 568.0 L725.0 571.5z" fill="#0000ff"/>
<path d="M729.8 560.0 L733.0 556.5 L736.5 560.0 L733.0 563.5z" fill="#0000ff"/>
<path d="M733.8 492.0 L737.0 488.5 L740.5 492.0 L737.0 495.5z" fill="#0000ff"/>
<path d="M737.8 546.0 L741.0 542.5 L744.5 546.0 L741.0 549.5z" fill="#0000ff"/>
<path d="M741.8 539.0 L745.0 535.5 L748.5 539.0 L745.0 542.5z" fill="#0000ff"/>
<path d="M745.8 519.0 L749.0 515.5 L752.5 519.0 L749.0 522.5z" fill="#0000ff"/>
<path d="M749.8 653.5 L753.0 650.0 L756.5 653.5 L753.0 657.0z" fill="#0000ff"/>
<path d="M753.8 561.0 L757.0 557.5 L760.5 561.0 L757.0 564.5z" fill="#0000ff"/>
<path d="M757.8 576.0 L761.0 572.5 L764.5 576.0 L761.0 579.5z" fill="#0000ff"/>
<path d="M765.8 503.0 L769.0 499.5 L772.5 503.0 L769.0 506.5z" fill="#0000ff"/>
<path d="M769.8 569.5 L773.0 566.0 L776.5 569.5 L773.0 573.0z" fill="#0000ff"/>
<path d="M773.8 535.0 L777.0 531.5 L780.5 535.0 L777.0 538.5z" fill="#0000ff"/>
<path d="M777.8 614.5 L781.0 611.0 L784.5 614.5 L781.0 618.0z" fill="#0000ff"/>
<path d="M781.8 611.5 L785.0 608.0 L788.5 611.5 L785.0 615.0z" fill="#0000ff"/>
<path d="M785.8 597.0 L789.0 593.5 L792.5 597.0 L789.0 600.5z" fill="#0000ff"/>
<path d="M789.8 627.5 L793.0 624.0 L796.5 627.5 L793.0 631.0z" fill="#0000ff"/>
<path d="M793.8 596.0 L797.0 592.5 L800.5 596.0 L797.0 599.5z" fill="#0000ff"/>
<path d="M797.8 597.0 L801.0 593.5 L804.5 597.0 L801.0 600.5z" fill="#0000ff"/>
<path d="M801.8 624.5 L805.0 621.0 L808.5 624.5 L805.0 628.0z" fill="#0000ff"/>
<path d="M805.8 607.5 L809.0 604.0 L812.5 607.5 L809.0 611.0z" fill="#0000ff"/>
<path d="M809.8 562.0 L813.0 558.5 L816.5 562.0 L813.0 565.5z" fill="#0000ff"/>
<path d="M813.8 638.0 L817.0 634.5 L820.5 638.0 L817.0 641.5z" fill="#0000ff"/>
</g></g>
<clipPath id="clipSN"><rect x="91" y="650" width="200" height="8.5"/></clipPath>
<g clip-path="url(#clipSN)">
<text x="99" y="664" font-family="Liberation Sans" font-size="12.2" textLength="65.3" lengthAdjust="spacingAndGlyphs" fill="#000" xml:space="preserve" >S/N vs Error</text>
</g>
<rect x="84" y="658" width="752" height="1" fill="#fbfbfb" />
<text x="90.7" y="672.7" font-family="Liberation Sans" font-size="12.2" textLength="43.6" lengthAdjust="spacingAndGlyphs" fill="#000" xml:space="preserve" >Current-</text>
<text x="99.3" y="688.7" font-family="Liberation Sans" font-size="12.2" textLength="30.7" lengthAdjust="spacingAndGlyphs" fill="#000" xml:space="preserve" >Frame</text>
<text x="151" y="672.7" font-family="Liberation Sans" font-size="12.2" textLength="47.3" lengthAdjust="spacingAndGlyphs" fill="#000" xml:space="preserve" >Luminous</text>
<text x="151" y="688.7" font-family="Liberation Sans" font-size="12.2" textLength="43.3" lengthAdjust="spacingAndGlyphs" fill="#000" xml:space="preserve" >Intensity</text>
<rect x="91" y="695" width="48" height="19" fill="#fff" />
<rect x="91" y="695" width="48" height="1" fill="#a0a0a0" />
<rect x="91" y="695" width="1" height="19" fill="#a0a0a0" />
<rect x="92" y="696" width="46" height="1" fill="#696969" />
<rect x="92" y="696" width="1" height="17" fill="#696969" />
<rect x="91" y="713" width="48" height="1" fill="#ffffff" />
<rect x="138" y="695" width="1" height="19" fill="#ffffff" />
<rect x="92" y="712" width="46" height="1" fill="#e3e3e3" />
<rect x="137" y="696" width="1" height="17" fill="#e3e3e3" />
<text x="94.3" y="708" font-family="Liberation Sans" font-size="12.2" textLength="25" lengthAdjust="spacingAndGlyphs" fill="#000" xml:space="preserve" >316.0</text>
<rect x="147" y="695" width="56" height="19" fill="#fff" />
<rect x="147" y="695" width="56" height="1" fill="#a0a0a0" />
<rect x="147" y="695" width="1" height="19" fill="#a0a0a0" />
<rect x="148" y="696" width="54" height="1" fill="#696969" />
<rect x="148" y="696" width="1" height="17" fill="#696969" />
<rect x="147" y="713" width="56" height="1" fill="#ffffff" />
<rect x="202" y="695" width="1" height="19" fill="#ffffff" />
<rect x="148" y="712" width="54" height="1" fill="#e3e3e3" />
<rect x="201" y="696" width="1" height="17" fill="#e3e3e3" />
<text x="150.7" y="708" font-family="Liberation Sans" font-size="12.2" textLength="24.3" lengthAdjust="spacingAndGlyphs" fill="#000" xml:space="preserve" >701.4</text>
<rect x="210" y="665" width="160" height="18" fill="url(#dith)" />
<rect x="210" y="665" width="17" height="18" fill="#f0f0f0" />
<rect x="210" y="665" width="17" height="1" fill="#ffffff" />
<rect x="210" y="665" width="1" height="18" fill="#ffffff" />
<rect x="210" y="682" width="17" height="1" fill="#696969" />
<rect x="226" y="665" width="1" height="18" fill="#696969" />
<rect x="211" y="681" width="15" height="1" fill="#a0a0a0" />
<rect x="225" y="666" width="1" height="16" fill="#a0a0a0" />
<path d="M220.25 670.5 L220.25 677.5 L216.25 674.0z" fill="#000" shape-rendering="auto"/>
<rect x="353" y="665" width="17" height="18" fill="#f0f0f0" />
<rect x="353" y="665" width="17" height="1" fill="#ffffff" />
<rect x="353" y="665" width="1" height="18" fill="#ffffff" />
<rect x="353" y="682" width="17" height="1" fill="#696969" />
<rect x="369" y="665" width="1" height="18" fill="#696969" />
<rect x="354" y="681" width="15" height="1" fill="#a0a0a0" />
<rect x="368" y="666" width="1" height="16" fill="#a0a0a0" />
<path d="M359.75 670.5 L359.75 677.5 L363.75 674.0z" fill="#000" shape-rendering="auto"/>
<rect x="293" y="665" width="17" height="18" fill="#f0f0f0" />
<rect x="293" y="665" width="17" height="1" fill="#ffffff" />
<rect x="293" y="665" width="1" height="18" fill="#ffffff" />
<rect x="293" y="682" width="17" height="1" fill="#696969" />
<rect x="309" y="665" width="1" height="18" fill="#696969" />
<rect x="294" y="681" width="15" height="1" fill="#a0a0a0" />
<rect x="308" y="666" width="1" height="16" fill="#a0a0a0" />
<text x="376.7" y="681" font-family="Liberation Sans" font-size="12.2" textLength="27.6" lengthAdjust="spacingAndGlyphs" fill="#000" xml:space="preserve" >Scale</text>
<rect x="415" y="663" width="23" height="19" fill="#fff" />
<rect x="415" y="663" width="23" height="1" fill="#a0a0a0" />
<rect x="415" y="663" width="1" height="19" fill="#a0a0a0" />
<rect x="416" y="664" width="21" height="1" fill="#696969" />
<rect x="416" y="664" width="1" height="17" fill="#696969" />
<rect x="415" y="681" width="23" height="1" fill="#ffffff" />
<rect x="437" y="663" width="1" height="19" fill="#ffffff" />
<rect x="416" y="680" width="21" height="1" fill="#e3e3e3" />
<rect x="436" y="664" width="1" height="17" fill="#e3e3e3" />
<text x="418.5" y="676.5" font-family="Liberation Sans" font-size="12.2" textLength="5.5" lengthAdjust="spacingAndGlyphs" fill="#000" xml:space="preserve" >2</text>
<rect x="439" y="663" width="16" height="11" fill="#f0f0f0" />
<rect x="439" y="663" width="16" height="1" fill="#ffffff" />
<rect x="439" y="663" width="1" height="11" fill="#ffffff" />
<rect x="439" y="673" width="16" height="1" fill="#696969" />
<rect x="454" y="663" width="1" height="11" fill="#696969" />
<rect x="440" y="672" width="14" height="1" fill="#a0a0a0" />
<rect x="453" y="664" width="1" height="9" fill="#a0a0a0" />
<path d="M444.5 669.75 L449.5 669.75 L447.0 666.75z" fill="#000" shape-rendering="auto"/>
<rect x="439" y="675" width="16" height="12" fill="#f0f0f0" />
<rect x="439" y="675" width="16" height="1" fill="#ffffff" />
<rect x="439" y="675" width="1" height="12" fill="#ffffff" />
<rect x="439" y="686" width="16" height="1" fill="#696969" />
<rect x="454" y="675" width="1" height="12" fill="#696969" />
<rect x="440" y="685" width="14" height="1" fill="#a0a0a0" />
<rect x="453" y="676" width="1" height="10" fill="#a0a0a0" />
<path d="M444.5 679.75 L449.5 679.75 L447.0 682.75z" fill="#000" shape-rendering="auto"/>
<text x="379.3" y="704.7" font-family="Liberation Sans" font-size="12.2" textLength="34" lengthAdjust="spacingAndGlyphs" fill="#000" xml:space="preserve" >Radius</text>
<rect x="415" y="695" width="23" height="19" fill="#fff" />
<rect x="415" y="695" width="23" height="1" fill="#a0a0a0" />
<rect x="415" y="695" width="1" height="19" fill="#a0a0a0" />
<rect x="416" y="696" width="21" height="1" fill="#696969" />
<rect x="416" y="696" width="1" height="17" fill="#696969" />
<rect x="415" y="713" width="23" height="1" fill="#ffffff" />
<rect x="437" y="695" width="1" height="19" fill="#ffffff" />
<rect x="416" y="712" width="21" height="1" fill="#e3e3e3" />
<rect x="436" y="696" width="1" height="17" fill="#e3e3e3" />
<text x="418.5" y="709" font-family="Liberation Sans" font-size="12.2" textLength="5.5" lengthAdjust="spacingAndGlyphs" fill="#000" xml:space="preserve" >3</text>
<rect x="439" y="695" width="16" height="11" fill="#f0f0f0" />
<rect x="439" y="695" width="16" height="1" fill="#ffffff" />
<rect x="439" y="695" width="1" height="11" fill="#ffffff" />
<rect x="439" y="705" width="16" height="1" fill="#696969" />
<rect x="454" y="695" width="1" height="11" fill="#696969" />
<rect x="440" y="704" width="14" height="1" fill="#a0a0a0" />
<rect x="453" y="696" width="1" height="9" fill="#a0a0a0" />
<path d="M444.5 701.75 L449.5 701.75 L447.0 698.75z" fill="#000" shape-rendering="auto"/>
<rect x="439" y="707" width="16" height="12" fill="#f0f0f0" />
<rect x="439" y="707" width="16" height="1" fill="#ffffff" />
<rect x="439" y="707" width="1" height="12" fill="#ffffff" />
<rect x="439" y="718" width="16" height="1" fill="#696969" />
<rect x="454" y="707" width="1" height="12" fill="#696969" />
<rect x="440" y="717" width="14" height="1" fill="#a0a0a0" />
<rect x="453" y="708" width="1" height="10" fill="#a0a0a0" />
<path d="M444.5 711.75 L449.5 711.75 L447.0 714.75z" fill="#000" shape-rendering="auto"/>
<rect x="211" y="690" width="41" height="24" fill="#f0f0f0" />
<rect x="211" y="690" width="41" height="1" fill="#ffffff" />
<rect x="211" y="690" width="1" height="24" fill="#ffffff" />
<rect x="211" y="713" width="41" height="1" fill="#696969" />
<rect x="251" y="690" width="1" height="24" fill="#696969" />
<rect x="212" y="712" width="39" height="1" fill="#a0a0a0" />
<rect x="250" y="691" width="1" height="22" fill="#a0a0a0" />
<text x="213.5" y="706.5" font-family="Liberation Sans" font-size="12.2" textLength="35.5" lengthAdjust="spacingAndGlyphs" fill="#000" xml:space="preserve" >-10Sec</text>
<rect x="255" y="690" width="33" height="24" fill="#f0f0f0" />
<rect x="255" y="690" width="33" height="1" fill="#ffffff" />
<rect x="255" y="690" width="1" height="24" fill="#ffffff" />
<rect x="255" y="713" width="33" height="1" fill="#696969" />
<rect x="287" y="690" width="1" height="24" fill="#696969" />
<rect x="256" y="712" width="31" height="1" fill="#a0a0a0" />
<rect x="286" y="691" width="1" height="22" fill="#a0a0a0" />
<text x="257.5" y="706.5" font-family="Liberation Sans" font-size="12.2" textLength="28" lengthAdjust="spacingAndGlyphs" fill="#000" xml:space="preserve" >-1Sec</text>
<rect x="291" y="690" width="35" height="24" fill="#f0f0f0" />
<rect x="291" y="690" width="35" height="1" fill="#ffffff" />
<rect x="291" y="690" width="1" height="24" fill="#ffffff" />
<rect x="291" y="713" width="35" height="1" fill="#696969" />
<rect x="325" y="690" width="1" height="24" fill="#696969" />
<rect x="292" y="712" width="33" height="1" fill="#a0a0a0" />
<rect x="324" y="691" width="1" height="22" fill="#a0a0a0" />
<text x="293" y="706.5" font-family="Liberation Sans" font-size="12.2" textLength="31" lengthAdjust="spacingAndGlyphs" fill="#000" xml:space="preserve" >+1Sec</text>
<rect x="329" y="690" width="41" height="24" fill="#f0f0f0" />
<rect x="329" y="690" width="41" height="1" fill="#ffffff" />
<rect x="329" y="690" width="1" height="24" fill="#ffffff" />
<rect x="329" y="713" width="41" height="1" fill="#696969" />
<rect x="369" y="690" width="1" height="24" fill="#696969" />
<rect x="330" y="712" width="39" height="1" fill="#a0a0a0" />
<rect x="368" y="691" width="1" height="22" fill="#a0a0a0" />
<text x="331" y="706.5" font-family="Liberation Sans" font-size="12.2" textLength="37.5" lengthAdjust="spacingAndGlyphs" fill="#000" xml:space="preserve" >+10Sec</text>
<rect x="92" y="724" width="13" height="13" fill="#fff" />
<rect x="92" y="724" width="13" height="1" fill="#a0a0a0" />
<rect x="92" y="724" width="1" height="13" fill="#a0a0a0" />
<rect x="93" y="725" width="11" height="1" fill="#696969" />
<rect x="93" y="725" width="1" height="11" fill="#696969" />
<rect x="92" y="736" width="13" height="1" fill="#ffffff" />
<rect x="104" y="724" width="1" height="13" fill="#ffffff" />
<rect x="93" y="735" width="11" height="1" fill="#e3e3e3" />
<rect x="103" y="725" width="1" height="11" fill="#e3e3e3" />
<path d="M95 729.2 l2.5 2.5 l4.5 -4.5 v2.8 l-4.5 4.5 l-2.5 -2.5z" fill="#000" shape-rendering="auto"/>
<text x="109" y="733.7" font-family="Liberation Sans" font-size="12.2" textLength="145.3" lengthAdjust="spacingAndGlyphs" fill="#000" xml:space="preserve" >Show Image of Clicked point</text>
<rect x="92" y="740" width="13" height="13" fill="#fff" />
<rect x="92" y="740" width="13" height="1" fill="#a0a0a0" />
<rect x="92" y="740" width="1" height="13" fill="#a0a0a0" />
<rect x="93" y="741" width="11" height="1" fill="#696969" />
<rect x="93" y="741" width="1" height="11" fill="#696969" />
<rect x="92" y="752" width="13" height="1" fill="#ffffff" />
<rect x="104" y="740" width="1" height="13" fill="#ffffff" />
<rect x="93" y="751" width="11" height="1" fill="#e3e3e3" />
<rect x="103" y="741" width="1" height="11" fill="#e3e3e3" />
<text x="109" y="749.7" font-family="Liberation Sans" font-size="12.2" textLength="146.7" lengthAdjust="spacingAndGlyphs" fill="#000" xml:space="preserve" >Reproduce Aperture Position</text>
<rect x="266" y="722" width="72" height="25" fill="#f0f0f0" />
<rect x="266" y="722" width="72" height="1" fill="#ffffff" />
<rect x="266" y="722" width="1" height="25" fill="#ffffff" />
<rect x="266" y="746" width="72" height="1" fill="#696969" />
<rect x="337" y="722" width="1" height="25" fill="#696969" />
<rect x="267" y="745" width="70" height="1" fill="#a0a0a0" />
<rect x="336" y="723" width="1" height="23" fill="#a0a0a0" />
<text x="271.7" y="737.7" font-family="Liberation Sans" font-size="12.2" textLength="58.3" lengthAdjust="spacingAndGlyphs" fill="#000" xml:space="preserve" >Save Image</text>
<rect x="343" y="722" width="119" height="25" fill="#f0f0f0" />
<rect x="343" y="722" width="119" height="1" fill="#ffffff" />
<rect x="343" y="722" width="1" height="25" fill="#ffffff" />
<rect x="343" y="746" width="119" height="1" fill="#696969" />
<rect x="461" y="722" width="1" height="25" fill="#696969" />
<rect x="344" y="745" width="117" height="1" fill="#a0a0a0" />
<rect x="460" y="723" width="1" height="23" fill="#a0a0a0" />
<text x="355.7" y="737.7" font-family="Liberation Sans" font-size="12.2" textLength="93.3" lengthAdjust="spacingAndGlyphs" fill="#000" xml:space="preserve" >Copy to ClipBoard</text>
<rect x="463.5" y="665.5" width="48" height="80" fill="none" stroke="#ffffff"/>
<rect x="462.5" y="664.5" width="48" height="80" fill="none" stroke="#a0a0a0"/>
<rect x="466.9" y="658" width="37.7" height="12" fill="#f0f0f0" />
<text x="468.9" y="668.7" font-family="Liberation Sans" font-size="12.2" textLength="33.7" lengthAdjust="spacingAndGlyphs" fill="#000" xml:space="preserve" >Y Axis</text>
<text x="467.8" y="680.6" font-family="Liberation Sans" font-size="12.2" textLength="39.5" lengthAdjust="spacingAndGlyphs" fill="#000" xml:space="preserve" >Min Max</text>
<rect x="466" y="683" width="17" height="57" fill="url(#dith)" />
<rect x="466" y="683" width="17" height="17" fill="#f0f0f0" />
<rect x="466" y="683" width="17" height="1" fill="#ffffff" />
<rect x="466" y="683" width="1" height="17" fill="#ffffff" />
<rect x="466" y="699" width="17" height="1" fill="#696969" />
<rect x="482" y="683" width="1" height="17" fill="#696969" />
<rect x="467" y="698" width="15" height="1" fill="#a0a0a0" />
<rect x="481" y="684" width="1" height="15" fill="#a0a0a0" />
<path d="M471.0 693.25 L478.0 693.25 L474.5 689.25z" fill="#000" shape-rendering="auto"/>
<rect x="466" y="702" width="17" height="17" fill="#f0f0f0" />
<rect x="466" y="702" width="17" height="1" fill="#ffffff" />
<rect x="466" y="702" width="1" height="17" fill="#ffffff" />
<rect x="466" y="718" width="17" height="1" fill="#696969" />
<rect x="482" y="702" width="1" height="17" fill="#696969" />
<rect x="467" y="717" width="15" height="1" fill="#a0a0a0" />
<rect x="481" y="703" width="1" height="15" fill="#a0a0a0" />
<rect x="466" y="723" width="17" height="17" fill="#f0f0f0" />
<rect x="466" y="723" width="17" height="1" fill="#ffffff" />
<rect x="466" y="723" width="1" height="17" fill="#ffffff" />
<rect x="466" y="739" width="17" height="1" fill="#696969" />
<rect x="482" y="723" width="1" height="17" fill="#696969" />
<rect x="467" y="738" width="15" height="1" fill="#a0a0a0" />
<rect x="481" y="724" width="1" height="15" fill="#a0a0a0" />
<path d="M471.0 729.75 L478.0 729.75 L474.5 733.75z" fill="#000" shape-rendering="auto"/>
<rect x="488" y="683" width="17" height="57" fill="url(#dith)" />
<rect x="488" y="683" width="17" height="17" fill="#f0f0f0" />
<rect x="488" y="683" width="17" height="1" fill="#ffffff" />
<rect x="488" y="683" width="1" height="17" fill="#ffffff" />
<rect x="488" y="699" width="17" height="1" fill="#696969" />
<rect x="504" y="683" width="1" height="17" fill="#696969" />
<rect x="489" y="698" width="15" height="1" fill="#a0a0a0" />
<rect x="503" y="684" width="1" height="15" fill="#a0a0a0" />
<path d="M493.0 693.25 L500.0 693.25 L496.5 689.25z" fill="#000" shape-rendering="auto"/>
<rect x="488" y="704" width="17" height="17" fill="#f0f0f0" />
<rect x="488" y="704" width="17" height="1" fill="#ffffff" />
<rect x="488" y="704" width="1" height="17" fill="#ffffff" />
<rect x="488" y="720" width="17" height="1" fill="#696969" />
<rect x="504" y="704" width="1" height="17" fill="#696969" />
<rect x="489" y="719" width="15" height="1" fill="#a0a0a0" />
<rect x="503" y="705" width="1" height="15" fill="#a0a0a0" />
<rect x="488" y="723" width="17" height="17" fill="#f0f0f0" />
<rect x="488" y="723" width="17" height="1" fill="#ffffff" />
<rect x="488" y="723" width="1" height="17" fill="#ffffff" />
<rect x="488" y="739" width="17" height="1" fill="#696969" />
<rect x="504" y="723" width="1" height="17" fill="#696969" />
<rect x="489" y="738" width="15" height="1" fill="#a0a0a0" />
<rect x="503" y="724" width="1" height="15" fill="#a0a0a0" />
<path d="M493.0 729.75 L500.0 729.75 L496.5 733.75z" fill="#000" shape-rendering="auto"/>
<rect x="514.5" y="665.5" width="60" height="52" fill="none" stroke="#ffffff"/>
<rect x="513.5" y="664.5" width="60" height="52" fill="none" stroke="#a0a0a0"/>
<rect x="519" y="658" width="24" height="12" fill="#f0f0f0" />
<text x="521" y="668.5" font-family="Liberation Sans" font-size="12.2" textLength="20" lengthAdjust="spacingAndGlyphs" fill="#000" xml:space="preserve" >Line</text>
<rect x="522" y="673" width="11" height="11" fill="#fff" />
<rect x="522" y="673" width="11" height="1" fill="#a0a0a0" />
<rect x="522" y="673" width="1" height="11" fill="#a0a0a0" />
<rect x="523" y="674" width="9" height="1" fill="#696969" />
<rect x="523" y="674" width="1" height="9" fill="#696969" />
<rect x="522" y="683" width="11" height="1" fill="#ffffff" />
<rect x="532" y="673" width="1" height="11" fill="#ffffff" />
<rect x="523" y="682" width="9" height="1" fill="#e3e3e3" />
<rect x="531" y="674" width="1" height="9" fill="#e3e3e3" />
<path d="M524.538 677.4 l2.11538 2.11538 l3.80769 -3.80769 v2.36923 l-3.80769 3.80769 l-2.11538 -2.11538z" fill="#000" shape-rendering="auto"/>
<text x="539.3" y="682" font-family="Liberation Sans" font-size="12.2" textLength="21.7" lengthAdjust="spacingAndGlyphs" fill="#000" xml:space="preserve" >Axis</text>
<rect x="522" y="687" width="11" height="11" fill="#fff" />
<rect x="522" y="687" width="11" height="1" fill="#a0a0a0" />
<rect x="522" y="687" width="1" height="11" fill="#a0a0a0" />
<rect x="523" y="688" width="9" height="1" fill="#696969" />
<rect x="523" y="688" width="1" height="9" fill="#696969" />
<rect x="522" y="697" width="11" height="1" fill="#ffffff" />
<rect x="532" y="687" width="1" height="11" fill="#ffffff" />
<rect x="523" y="696" width="9" height="1" fill="#e3e3e3" />
<rect x="531" y="688" width="1" height="9" fill="#e3e3e3" />
<path d="M524.538 691.4 l2.11538 2.11538 l3.80769 -3.80769 v2.36923 l-3.80769 3.80769 l-2.11538 -2.11538z" fill="#000" shape-rendering="auto"/>
<text x="539.3" y="696.3" font-family="Liberation Sans" font-size="12.2" textLength="22.7" lengthAdjust="spacingAndGlyphs" fill="#000" xml:space="preserve" >Data</text>
<rect x="521" y="699" width="46" height="14" fill="#f0f0f0" />
<rect x="521" y="699" width="46" height="1" fill="#ffffff" />
<rect x="521" y="699" width="1" height="14" fill="#ffffff" />
<rect x="521" y="712" width="46" height="1" fill="#696969" />
<rect x="566" y="699" width="1" height="14" fill="#696969" />
<rect x="522" y="711" width="44" height="1" fill="#a0a0a0" />
<rect x="565" y="700" width="1" height="12" fill="#a0a0a0" />
<text x="527" y="709.7" font-family="Liberation Sans" font-size="12.2" textLength="32.3" lengthAdjust="spacingAndGlyphs" fill="#000" xml:space="preserve" >Hilight</text>
<rect x="578.5" y="665.5" width="55" height="52" fill="none" stroke="#ffffff"/>
<rect x="577.5" y="664.5" width="55" height="52" fill="none" stroke="#a0a0a0"/>
<rect x="583.3" y="658" width="32" height="12" fill="#f0f0f0" />
<text x="585.3" y="668.5" font-family="Liberation Sans" font-size="12.2" textLength="28" lengthAdjust="spacingAndGlyphs" fill="#000" xml:space="preserve" >Width</text>
<circle cx="591.7" cy="682.7" r="5.5" fill="#fff" stroke="#e3e3e3" stroke-width="1" shape-rendering="auto"/>
<path d="M587.5 686.9 A6 6 0 0 1 595.9 678.5" fill="none" stroke="#a0a0a0" stroke-width="1" shape-rendering="auto"/>
<path d="M588.2 686.2 A5 5 0 0 1 595.2 679.2" fill="none" stroke="#696969" stroke-width="1" shape-rendering="auto"/>
<path d="M587.5 686.9 A6 6 0 0 0 595.9 678.5" fill="none" stroke="#ffffff" stroke-width="1" shape-rendering="auto"/>
<circle cx="591.7" cy="682.7" r="2" fill="#000" shape-rendering="auto"/>
<text x="603.3" y="686.5" font-family="Liberation Sans" font-size="12.2" textLength="18.4" lengthAdjust="spacingAndGlyphs" fill="#000" xml:space="preserve" >Part</text>
<circle cx="591.7" cy="703.7" r="5.5" fill="#fff" stroke="#e3e3e3" stroke-width="1" shape-rendering="auto"/>
<path d="M587.5 707.9 A6 6 0 0 1 595.9 699.5" fill="none" stroke="#a0a0a0" stroke-width="1" shape-rendering="auto"/>
<path d="M588.2 707.2 A5 5 0 0 1 595.2 700.2" fill="none" stroke="#696969" stroke-width="1" shape-rendering="auto"/>
<path d="M587.5 707.9 A6 6 0 0 0 595.9 699.5" fill="none" stroke="#ffffff" stroke-width="1" shape-rendering="auto"/>
<text x="603.3" y="707.7" font-family="Liberation Sans" font-size="12.2" textLength="26.7" lengthAdjust="spacingAndGlyphs" fill="#000" xml:space="preserve" >Entire</text>
<rect x="639" y="662" width="143" height="17" fill="#f0f0f0" />
<rect x="639" y="662" width="143" height="1" fill="#ffffff" />
<rect x="639" y="662" width="1" height="17" fill="#ffffff" />
<rect x="639" y="678" width="143" height="1" fill="#696969" />
<rect x="781" y="662" width="1" height="17" fill="#696969" />
<rect x="640" y="677" width="141" height="1" fill="#a0a0a0" />
<rect x="780" y="663" width="1" height="15" fill="#a0a0a0" />
<text x="645.3" y="673.7" font-family="Liberation Sans" font-size="12.2" textLength="128" lengthAdjust="spacingAndGlyphs" fill="#000" xml:space="preserve" >Correction for absorption</text>
<rect x="639" y="683" width="103" height="16" fill="#f0f0f0" />
<rect x="639" y="683" width="103" height="1" fill="#ffffff" />
<rect x="639" y="683" width="1" height="16" fill="#ffffff" />
<rect x="639" y="698" width="103" height="1" fill="#696969" />
<rect x="741" y="683" width="1" height="16" fill="#696969" />
<rect x="640" y="697" width="101" height="1" fill="#a0a0a0" />
<rect x="740" y="684" width="1" height="14" fill="#a0a0a0" />
<text x="649.3" y="694.3" font-family="Liberation Sans" font-size="12.2" textLength="83.4" lengthAdjust="spacingAndGlyphs" fill="#000" xml:space="preserve" >Noise Reduction</text>
<rect x="745" y="683" width="37" height="16" fill="#f0f0f0" />
<rect x="745" y="683" width="37" height="1" fill="#ffffff" />
<rect x="745" y="683" width="1" height="16" fill="#ffffff" />
<rect x="745" y="698" width="37" height="1" fill="#696969" />
<rect x="781" y="683" width="1" height="16" fill="#696969" />
<rect x="746" y="697" width="35" height="1" fill="#a0a0a0" />
<rect x="780" y="684" width="1" height="14" fill="#a0a0a0" />
<text x="748.7" y="694.3" font-family="Liberation Sans" font-size="12.2" textLength="28.3" lengthAdjust="spacingAndGlyphs" fill="#000" xml:space="preserve" >Reset</text>
<rect x="795" y="663" width="36" height="24" fill="#f0f0f0" />
<rect x="795" y="663" width="36" height="1" fill="#ffffff" />
<rect x="795" y="663" width="1" height="24" fill="#ffffff" />
<rect x="795" y="686" width="36" height="1" fill="#696969" />
<rect x="830" y="663" width="1" height="24" fill="#696969" />
<rect x="796" y="685" width="34" height="1" fill="#a0a0a0" />
<rect x="829" y="664" width="1" height="22" fill="#a0a0a0" />
<text x="798.7" y="677" font-family="Liberation Sans" font-size="12.2" textLength="26.6" lengthAdjust="spacingAndGlyphs" fill="#000" xml:space="preserve" >close</text>
<rect x="638" y="704" width="11" height="11" fill="#fff" />
<rect x="638" y="704" width="11" height="1" fill="#a0a0a0" />
<rect x="638" y="704" width="1" height="11" fill="#a0a0a0" />
<rect x="639" y="705" width="9" height="1" fill="#696969" />
<rect x="639" y="705" width="1" height="9" fill="#696969" />
<rect x="638" y="714" width="11" height="1" fill="#ffffff" />
<rect x="648" y="704" width="1" height="11" fill="#ffffff" />
<rect x="639" y="713" width="9" height="1" fill="#e3e3e3" />
<rect x="647" y="705" width="1" height="9" fill="#e3e3e3" />
<path d="M640.538 708.4 l2.11538 2.11538 l3.80769 -3.80769 v2.36923 l-3.80769 3.80769 l-2.11538 -2.11538z" fill="#000" shape-rendering="auto"/>
<text x="655.3" y="712.7" font-family="Liberation Sans" font-size="12.2" textLength="51.7" lengthAdjust="spacingAndGlyphs" fill="#000" xml:space="preserve" >Information</text>
<rect x="788" y="700" width="11" height="11" fill="#fff" />
<rect x="788" y="700" width="11" height="1" fill="#a0a0a0" />
<rect x="788" y="700" width="1" height="11" fill="#a0a0a0" />
<rect x="789" y="701" width="9" height="1" fill="#696969" />
<rect x="789" y="701" width="1" height="9" fill="#696969" />
<rect x="788" y="710" width="11" height="1" fill="#ffffff" />
<rect x="798" y="700" width="1" height="11" fill="#ffffff" />
<rect x="789" y="709" width="9" height="1" fill="#e3e3e3" />
<rect x="797" y="701" width="1" height="9" fill="#e3e3e3" />
<path d="M790.538 704.4 l2.11538 2.11538 l3.80769 -3.80769 v2.36923 l-3.80769 3.80769 l-2.11538 -2.11538z" fill="#000" shape-rendering="auto"/>
<text x="804.3" y="709.7" font-family="Liberation Sans" font-size="12.2" textLength="11" lengthAdjust="spacingAndGlyphs" fill="#000" xml:space="preserve" >ID</text>
<rect x="739.5" y="715.5" width="93" height="34" fill="none" stroke="#ffffff"/>
<rect x="738.5" y="714.5" width="93" height="34" fill="none" stroke="#a0a0a0"/>
<rect x="743" y="708" width="36" height="12" fill="#f0f0f0" />
<text x="745" y="717.7" font-family="Liberation Sans" font-size="12.2" textLength="32" lengthAdjust="spacingAndGlyphs" fill="#000" xml:space="preserve" >Object</text>
<rect x="743" y="724" width="20" height="18" fill="#f0f0f0" />
<rect x="743" y="724" width="20" height="1" fill="#a0a0a0" />
<rect x="743" y="724" width="1" height="18" fill="#a0a0a0" />
<rect x="744" y="725" width="18" height="1" fill="#696969" />
<rect x="744" y="725" width="1" height="16" fill="#696969" />
<rect x="743" y="741" width="20" height="1" fill="#ffffff" />
<rect x="762" y="724" width="1" height="18" fill="#ffffff" />
<rect x="744" y="740" width="18" height="1" fill="#e3e3e3" />
<rect x="761" y="725" width="1" height="16" fill="#e3e3e3" />
<text x="749" y="737" font-family="Liberation Sans" font-size="12.2" textLength="7" lengthAdjust="spacingAndGlyphs" fill="#fff" xml:space="preserve" >A</text>
<text x="748.5" y="736.5" font-family="Liberation Sans" font-size="12.2" textLength="7" lengthAdjust="spacingAndGlyphs" fill="#a0a0a0" xml:space="preserve" >A</text>
<rect x="765" y="724" width="19" height="18" fill="#f0f0f0" />
<rect x="765" y="724" width="19" height="1" fill="#ffffff" />
<rect x="765" y="724" width="1" height="18" fill="#ffffff" />
<rect x="765" y="741" width="19" height="1" fill="#696969" />
<rect x="783" y="724" width="1" height="18" fill="#696969" />
<rect x="766" y="740" width="17" height="1" fill="#a0a0a0" />
<rect x="782" y="725" width="1" height="16" fill="#a0a0a0" />
<text x="771" y="737" font-family="Liberation Sans" font-size="12.2" textLength="7" lengthAdjust="spacingAndGlyphs" fill="#000" xml:space="preserve" >B</text>
<rect x="787" y="724" width="19" height="18" fill="#f0f0f0" />
<rect x="787" y="724" width="19" height="1" fill="#ffffff" />
<rect x="787" y="724" width="1" height="18" fill="#ffffff" />
<rect x="787" y="741" width="19" height="1" fill="#696969" />
<rect x="805" y="724" width="1" height="18" fill="#696969" />
<rect x="788" y="740" width="17" height="1" fill="#a0a0a0" />
<rect x="804" y="725" width="1" height="16" fill="#a0a0a0" />
<text x="793" y="737" font-family="Liberation Sans" font-size="12.2" textLength="7.5" lengthAdjust="spacingAndGlyphs" fill="#000" xml:space="preserve" >C</text>
<rect x="809" y="724" width="17" height="18" fill="#f0f0f0" />
<rect x="809" y="724" width="17" height="1" fill="#ffffff" />
<rect x="809" y="724" width="1" height="18" fill="#ffffff" />
<rect x="809" y="741" width="17" height="1" fill="#696969" />
<rect x="825" y="724" width="1" height="18" fill="#696969" />
<rect x="810" y="740" width="15" height="1" fill="#a0a0a0" />
<rect x="824" y="725" width="1" height="16" fill="#a0a0a0" />
<text x="815" y="737" font-family="Liberation Sans" font-size="12.2" textLength="6" lengthAdjust="spacingAndGlyphs" fill="#000" xml:space="preserve" >L</text>
<rect x="513" y="722" width="65" height="27" fill="#f0f0f0" />
<rect x="513" y="722" width="65" height="1" fill="#ffffff" />
<rect x="513" y="722" width="1" height="27" fill="#ffffff" />
<rect x="513" y="748" width="65" height="1" fill="#696969" />
<rect x="577" y="722" width="1" height="27" fill="#696969" />
<rect x="514" y="747" width="63" height="1" fill="#a0a0a0" />
<rect x="576" y="723" width="1" height="25" fill="#a0a0a0" />
<text x="517.7" y="738.5" font-family="Liberation Sans" font-size="12.2" textLength="54.3" lengthAdjust="spacingAndGlyphs" fill="#000" xml:space="preserve" >[3D] Image</text>
<rect x="627" y="722" width="105" height="27" fill="#f0f0f0" />
<rect x="627" y="722" width="105" height="1" fill="#ffffff" />
<rect x="627" y="722" width="1" height="27" fill="#ffffff" />
<rect x="627" y="748" width="105" height="1" fill="#696969" />
<rect x="731" y="722" width="1" height="27" fill="#696969" />
<rect x="628" y="747" width="103" height="1" fill="#a0a0a0" />
<rect x="730" y="723" width="1" height="25" fill="#a0a0a0" />
<text x="639.5" y="739.5" font-family="Liberation Sans" font-size="14" font-weight="bold" textLength="79.7" lengthAdjust="spacingAndGlyphs" fill="#000" xml:space="preserve" >Make Report</text>
<rect x="842" y="19" width="196" height="795" rx="8" fill="#000" opacity="0.3" filter="url(#sh)"/>
<rect x="844" y="9" width="192" height="795" rx="8" fill="#f0f0f0" stroke="#bdbdbd" stroke-width="1" shape-rendering="auto"/>
<path d="M844.5 33 V17 A7.5 7.5 0 0 1 852 9.5 H1028 A7.5 7.5 0 0 1 1035.5 17 V33z" fill="#f0f0f0" shape-rendering="auto"/>
<rect x="847" y="13" width="16" height="16" fill="#000070" />
<rect x="848" y="14" width="14" height="14" fill="#0000c8" />
<rect x="852" y="14" width="1" height="1" fill="#fff" />
<rect x="852" y="27" width="1" height="1" fill="#fff" />
<rect x="854.2" y="14" width="1" height="1" fill="#fff" />
<rect x="854.2" y="27" width="1" height="1" fill="#fff" />
<rect x="856.4" y="14" width="1" height="1" fill="#fff" />
<rect x="856.4" y="27" width="1" height="1" fill="#fff" />
<rect x="858.6" y="14" width="1" height="1" fill="#fff" />
<rect x="858.6" y="27" width="1" height="1" fill="#fff" />
<rect x="860.8" y="14" width="1" height="1" fill="#fff" />
<rect x="860.8" y="27" width="1" height="1" fill="#fff" />
<rect x="847" y="21" width="16" height="1.4" fill="#ffff00" />
<path d="M852 13 L853.2 20 L858 21.5 L853.2 23 L852 29 L850.8 23 L847 21.5 L850.8 20z" fill="#ffff00" shape-rendering="auto"/>
<text x="868.3" y="26" font-family="Liberation Sans" font-size="12.5" textLength="24.7" lengthAdjust="spacingAndGlyphs" fill="#9a9a9a" xml:space="preserve" >Fre...</text>
<line x1="916.7" y1="22" x2="926.7" y2="22" stroke="#8c8c8c" stroke-width="1" />
<rect x="962.5" y="17.0" width="9" height="9" rx="1" fill="none" stroke="#8c8c8c" shape-rendering="auto"/>
<path d="M1008 16.5 l10 10 M1018 16.5 l-10 10" stroke="#8c8c8c" fill="none" shape-rendering="auto"/>
<rect x="846.5" y="40.5" width="182" height="52" fill="none" stroke="#ffffff"/>
<rect x="845.5" y="39.5" width="182" height="52" fill="none" stroke="#a0a0a0"/>
<rect x="850.7" y="33" width="88.3" height="12" fill="#f0f0f0" />
<text x="852.7" y="44.7" font-family="Liberation Sans" font-size="12.4" font-weight="bold" textLength="84.3" lengthAdjust="spacingAndGlyphs" fill="#000" xml:space="preserve" >Spectral Effect</text>
<text x="852.7" y="61" font-family="Liberation Sans" font-size="12.2" textLength="20" lengthAdjust="spacingAndGlyphs" fill="#000" xml:space="preserve" >CCD</text>
<rect x="884" y="47" width="88" height="19" fill="#fff" />
<rect x="884" y="47" width="88" height="1" fill="#a0a0a0" />
<rect x="884" y="47" width="1" height="19" fill="#a0a0a0" />
<rect x="885" y="48" width="86" height="1" fill="#696969" />
<rect x="885" y="48" width="1" height="17" fill="#696969" />
<rect x="884" y="65" width="88" height="1" fill="#ffffff" />
<rect x="971" y="47" width="1" height="19" fill="#ffffff" />
<rect x="885" y="64" width="86" height="1" fill="#e3e3e3" />
<rect x="970" y="48" width="1" height="17" fill="#e3e3e3" />
<text x="887" y="60.5" font-family="Liberation Sans" font-size="12.2" textLength="37" lengthAdjust="spacingAndGlyphs" fill="#000" xml:space="preserve" >IMX290</text>
<rect x="954" y="49" width="16" height="15" fill="#f0f0f0" />
<rect x="954" y="49" width="16" height="1" fill="#ffffff" />
<rect x="954" y="49" width="1" height="15" fill="#ffffff" />
<rect x="954" y="63" width="16" height="1" fill="#696969" />
<rect x="969" y="49" width="1" height="15" fill="#696969" />
<rect x="955" y="62" width="14" height="1" fill="#a0a0a0" />
<rect x="968" y="50" width="1" height="13" fill="#a0a0a0" />
<path d="M958.5 54.75 L965.5 54.75 L962.0 58.75z" fill="#000" shape-rendering="auto"/>
<rect x="974" y="47" width="47" height="16" fill="#f0f0f0" />
<rect x="974" y="47" width="47" height="1" fill="#ffffff" />
<rect x="974" y="47" width="1" height="16" fill="#ffffff" />
<rect x="974" y="62" width="47" height="1" fill="#696969" />
<rect x="1020" y="47" width="1" height="16" fill="#696969" />
<rect x="975" y="61" width="45" height="1" fill="#a0a0a0" />
<rect x="1019" y="48" width="1" height="14" fill="#a0a0a0" />
<text x="983.6" y="57.9" font-family="Liberation Sans" font-size="12.2" textLength="28.6" lengthAdjust="spacingAndGlyphs" fill="#000" xml:space="preserve" >Graph</text>
<text x="852.7" y="84.7" font-family="Liberation Sans" font-size="12.2" textLength="20.3" lengthAdjust="spacingAndGlyphs" fill="#000" xml:space="preserve" >Star</text>
<rect x="884" y="70" width="47" height="19" fill="#fff" />
<rect x="884" y="70" width="47" height="1" fill="#a0a0a0" />
<rect x="884" y="70" width="1" height="19" fill="#a0a0a0" />
<rect x="885" y="71" width="45" height="1" fill="#696969" />
<rect x="885" y="71" width="1" height="17" fill="#696969" />
<rect x="884" y="88" width="47" height="1" fill="#ffffff" />
<rect x="930" y="70" width="1" height="19" fill="#ffffff" />
<rect x="885" y="87" width="45" height="1" fill="#e3e3e3" />
<rect x="929" y="71" width="1" height="17" fill="#e3e3e3" />
<text x="887.4" y="82.6" font-family="Liberation Sans" font-size="12.2" textLength="12.8" lengthAdjust="spacingAndGlyphs" fill="#000" xml:space="preserve" >K0</text>
<rect x="914" y="71" width="16" height="16" fill="#f0f0f0" />
<rect x="914" y="71" width="16" height="1" fill="#ffffff" />
<rect x="914" y="71" width="1" height="16" fill="#ffffff" />
<rect x="914" y="86" width="16" height="1" fill="#696969" />
<rect x="929" y="71" width="1" height="16" fill="#696969" />
<rect x="915" y="85" width="14" height="1" fill="#a0a0a0" />
<rect x="928" y="72" width="1" height="14" fill="#a0a0a0" />
<path d="M918.5 77.25 L925.5 77.25 L922.0 81.25z" fill="#000" shape-rendering="auto"/>
<text x="935" y="84.5" font-family="Liberation Sans" font-size="12.2" textLength="31.1" lengthAdjust="spacingAndGlyphs" fill="#000" xml:space="preserve" >or  B-V</text>
<rect x="972" y="71" width="48" height="19" fill="#fff" />
<rect x="972" y="71" width="48" height="1" fill="#a0a0a0" />
<rect x="972" y="71" width="1" height="19" fill="#a0a0a0" />
<rect x="973" y="72" width="46" height="1" fill="#696969" />
<rect x="973" y="72" width="1" height="17" fill="#696969" />
<rect x="972" y="89" width="48" height="1" fill="#ffffff" />
<rect x="1019" y="71" width="1" height="19" fill="#ffffff" />
<rect x="973" y="88" width="46" height="1" fill="#e3e3e3" />
<rect x="1018" y="72" width="1" height="17" fill="#e3e3e3" />
<text x="975.7" y="83.5" font-family="Liberation Sans" font-size="12.2" textLength="20.4" lengthAdjust="spacingAndGlyphs" fill="#000" xml:space="preserve" >0.85</text>
<rect x="846.5" y="98.5" width="182" height="45" fill="none" stroke="#ffffff"/>
<rect x="845.5" y="97.5" width="182" height="45" fill="none" stroke="#a0a0a0"/>
<rect x="850.7" y="91" width="111.3" height="12" fill="#f0f0f0" />
<text x="852.7" y="102.3" font-family="Liberation Sans" font-size="12.4" font-weight="bold" textLength="107.3" lengthAdjust="spacingAndGlyphs" fill="#000" xml:space="preserve" >Object&#x27;s Movement</text>
<text x="852.7" y="114.3" font-family="Liberation Sans" font-size="12.2" textLength="41.6" lengthAdjust="spacingAndGlyphs" fill="#000" xml:space="preserve" >Distance</text>
<text x="938.3" y="114.3" font-family="Liberation Sans" font-size="12.2" textLength="87.7" lengthAdjust="spacingAndGlyphs" fill="#000" xml:space="preserve" >Shadow&#x27;s Velocity</text>
<rect x="852" y="118" width="72" height="19" fill="#fff" />
<rect x="852" y="118" width="72" height="1" fill="#a0a0a0" />
<rect x="852" y="118" width="1" height="19" fill="#a0a0a0" />
<rect x="853" y="119" width="70" height="1" fill="#696969" />
<rect x="853" y="119" width="1" height="17" fill="#696969" />
<rect x="852" y="136" width="72" height="1" fill="#ffffff" />
<rect x="923" y="118" width="1" height="19" fill="#ffffff" />
<rect x="853" y="135" width="70" height="1" fill="#e3e3e3" />
<rect x="922" y="119" width="1" height="17" fill="#e3e3e3" />
<text x="855.5" y="132" font-family="Liberation Sans" font-size="12.2" textLength="51.5" lengthAdjust="spacingAndGlyphs" fill="#000" xml:space="preserve" >306017404</text>
<text x="925" y="138.3" font-family="Liberation Sans" font-size="12.2" textLength="13.3" lengthAdjust="spacingAndGlyphs" fill="#000" xml:space="preserve" >km</text>
<rect x="948" y="118" width="48" height="19" fill="#fff" />
<rect x="948" y="118" width="48" height="1" fill="#a0a0a0" />
<rect x="948" y="118" width="1" height="19" fill="#a0a0a0" />
<rect x="949" y="119" width="46" height="1" fill="#696969" />
<rect x="949" y="119" width="1" height="17" fill="#696969" />
<rect x="948" y="136" width="48" height="1" fill="#ffffff" />
<rect x="995" y="118" width="1" height="19" fill="#ffffff" />
<rect x="949" y="135" width="46" height="1" fill="#e3e3e3" />
<rect x="994" y="119" width="1" height="17" fill="#e3e3e3" />
<text x="951" y="132" font-family="Liberation Sans" font-size="12.2" textLength="29" lengthAdjust="spacingAndGlyphs" fill="#000" xml:space="preserve" >8725.9</text>
<text x="996.7" y="138.3" font-family="Liberation Sans" font-size="12.2" textLength="29.3" lengthAdjust="spacingAndGlyphs" fill="#000" xml:space="preserve" >m/sec</text>
<rect x="846.5" y="149.5" width="182" height="106" fill="none" stroke="#ffffff"/>
<rect x="845.5" y="148.5" width="182" height="106" fill="none" stroke="#a0a0a0"/>
<rect x="850.7" y="142" width="155" height="12" fill="#f0f0f0" />
<text x="852.7" y="152.7" font-family="Liberation Sans" font-size="12.4" font-weight="bold" textLength="151" lengthAdjust="spacingAndGlyphs" fill="#000" xml:space="preserve" >Frame range of Star &amp; BKG</text>
<text x="852.7" y="165" font-family="Liberation Sans" font-size="12.2" textLength="57.6" lengthAdjust="spacingAndGlyphs" fill="#000" xml:space="preserve" >Appearance</text>
<text x="916.7" y="165.7" font-family="Liberation Sans" font-size="12.4" font-weight="bold" textLength="35.3" lengthAdjust="spacingAndGlyphs" fill="#000" xml:space="preserve" >before</text>
<text x="959.3" y="165.7" font-family="Liberation Sans" font-size="12.4" font-weight="bold" textLength="25.7" lengthAdjust="spacingAndGlyphs" fill="#000" xml:space="preserve" >Step</text>
<text x="996" y="165.7" font-family="Liberation Sans" font-size="12.4" font-weight="bold" textLength="27" lengthAdjust="spacingAndGlyphs" fill="#000" xml:space="preserve" >after</text>
<rect x="852" y="169" width="40" height="19" fill="#fff" />
<rect x="852" y="169" width="40" height="1" fill="#a0a0a0" />
<rect x="852" y="169" width="1" height="19" fill="#a0a0a0" />
<rect x="853" y="170" width="38" height="1" fill="#696969" />
<rect x="853" y="170" width="1" height="17" fill="#696969" />
<rect x="852" y="187" width="40" height="1" fill="#ffffff" />
<rect x="891" y="169" width="1" height="19" fill="#ffffff" />
<rect x="853" y="186" width="38" height="1" fill="#e3e3e3" />
<rect x="890" y="170" width="1" height="17" fill="#e3e3e3" />
<text x="855.5" y="181.7" font-family="Liberation Sans" font-size="12.2" textLength="26.5" lengthAdjust="spacingAndGlyphs" fill="#000" xml:space="preserve" >857.6</text>
<rect x="894" y="169" width="23" height="16" fill="#f0f0f0" />
<rect x="894" y="169" width="23" height="1" fill="#ffffff" />
<rect x="894" y="169" width="1" height="16" fill="#ffffff" />
<rect x="894" y="184" width="23" height="1" fill="#696969" />
<rect x="916" y="169" width="1" height="16" fill="#696969" />
<rect x="895" y="183" width="21" height="1" fill="#a0a0a0" />
<rect x="915" y="170" width="1" height="14" fill="#a0a0a0" />
<text x="899.7" y="179.7" font-family="Liberation Sans" font-size="12.2" textLength="12.5" lengthAdjust="spacingAndGlyphs" fill="#000" xml:space="preserve" >Fix</text>
<rect x="925" y="170" width="29" height="19" fill="#fff" />
<rect x="925" y="170" width="29" height="1" fill="#a0a0a0" />
<rect x="925" y="170" width="1" height="19" fill="#a0a0a0" />
<rect x="926" y="171" width="27" height="1" fill="#696969" />
<rect x="926" y="171" width="1" height="17" fill="#696969" />
<rect x="925" y="188" width="29" height="1" fill="#ffffff" />
<rect x="953" y="170" width="1" height="19" fill="#ffffff" />
<rect x="926" y="187" width="27" height="1" fill="#e3e3e3" />
<rect x="952" y="171" width="1" height="17" fill="#e3e3e3" />
<text x="929" y="183" font-family="Liberation Sans" font-size="12.2" textLength="6.8" lengthAdjust="spacingAndGlyphs" fill="#000" xml:space="preserve" >-1</text>
<rect x="961" y="170" width="27" height="19" fill="#fff" />
<rect x="961" y="170" width="27" height="1" fill="#a0a0a0" />
<rect x="961" y="170" width="1" height="19" fill="#a0a0a0" />
<rect x="962" y="171" width="25" height="1" fill="#696969" />
<rect x="962" y="171" width="1" height="17" fill="#696969" />
<rect x="961" y="188" width="27" height="1" fill="#ffffff" />
<rect x="987" y="170" width="1" height="19" fill="#ffffff" />
<rect x="962" y="187" width="25" height="1" fill="#e3e3e3" />
<rect x="986" y="171" width="1" height="17" fill="#e3e3e3" />
<text x="964.5" y="183" font-family="Liberation Sans" font-size="12.2" textLength="5.9" lengthAdjust="spacingAndGlyphs" fill="#000" xml:space="preserve" >0</text>
<rect x="997" y="170" width="25" height="19" fill="#fff" />
<rect x="997" y="170" width="25" height="1" fill="#a0a0a0" />
<rect x="997" y="170" width="1" height="19" fill="#a0a0a0" />
<rect x="998" y="171" width="23" height="1" fill="#696969" />
<rect x="998" y="171" width="1" height="17" fill="#696969" />
<rect x="997" y="188" width="25" height="1" fill="#ffffff" />
<rect x="1021" y="170" width="1" height="19" fill="#ffffff" />
<rect x="998" y="187" width="23" height="1" fill="#e3e3e3" />
<rect x="1020" y="171" width="1" height="17" fill="#e3e3e3" />
<text x="1000.5" y="183" font-family="Liberation Sans" font-size="12.2" textLength="11.8" lengthAdjust="spacingAndGlyphs" fill="#000" xml:space="preserve" >45</text>
<text x="852.7" y="196.7" font-family="Liberation Sans" font-size="12.2" textLength="53.3" lengthAdjust="spacingAndGlyphs" fill="#000" xml:space="preserve" >Intermidiate</text>
<rect x="927" y="189" width="14" height="17" fill="#f0f0f0" />
<rect x="927" y="189" width="14" height="1" fill="#ffffff" />
<rect x="927" y="189" width="1" height="17" fill="#ffffff" />
<rect x="927" y="205" width="14" height="1" fill="#696969" />
<rect x="940" y="189" width="1" height="17" fill="#696969" />
<rect x="928" y="204" width="12" height="1" fill="#a0a0a0" />
<rect x="939" y="190" width="1" height="15" fill="#a0a0a0" />
<path d="M935.25 195.0 L935.25 200.0 L932.25 197.5z" fill="#000" shape-rendering="auto"/>
<rect x="941" y="189" width="14" height="17" fill="#f0f0f0" />
<rect x="941" y="189" width="14" height="1" fill="#ffffff" />
<rect x="941" y="189" width="1" height="17" fill="#ffffff" />
<rect x="941" y="205" width="14" height="1" fill="#696969" />
<rect x="954" y="189" width="1" height="17" fill="#696969" />
<rect x="942" y="204" width="12" height="1" fill="#a0a0a0" />
<rect x="953" y="190" width="1" height="15" fill="#a0a0a0" />
<path d="M946.75 195.0 L946.75 200.0 L949.75 197.5z" fill="#000" shape-rendering="auto"/>
<rect x="961" y="189" width="14" height="17" fill="#f0f0f0" />
<rect x="961" y="189" width="14" height="1" fill="#ffffff" />
<rect x="961" y="189" width="1" height="17" fill="#ffffff" />
<rect x="961" y="205" width="14" height="1" fill="#696969" />
<rect x="974" y="189" width="1" height="17" fill="#696969" />
<rect x="962" y="204" width="12" height="1" fill="#a0a0a0" />
<rect x="973" y="190" width="1" height="15" fill="#a0a0a0" />
<path d="M969.25 195.0 L969.25 200.0 L966.25 197.5z" fill="#000" shape-rendering="auto"/>
<rect x="975" y="189" width="14" height="17" fill="#f0f0f0" />
<rect x="975" y="189" width="14" height="1" fill="#ffffff" />
<rect x="975" y="189" width="1" height="17" fill="#ffffff" />
<rect x="975" y="205" width="14" height="1" fill="#696969" />
<rect x="988" y="189" width="1" height="17" fill="#696969" />
<rect x="976" y="204" width="12" height="1" fill="#a0a0a0" />
<rect x="987" y="190" width="1" height="15" fill="#a0a0a0" />
<path d="M980.75 195.0 L980.75 200.0 L983.75 197.5z" fill="#000" shape-rendering="auto"/>
<rect x="997" y="189" width="14" height="17" fill="#f0f0f0" />
<rect x="997" y="189" width="14" height="1" fill="#ffffff" />
<rect x="997" y="189" width="1" height="17" fill="#ffffff" />
<rect x="997" y="205" width="14" height="1" fill="#696969" />
<rect x="1010" y="189" width="1" height="17" fill="#696969" />
<rect x="998" y="204" width="12" height="1" fill="#a0a0a0" />
<rect x="1009" y="190" width="1" height="15" fill="#a0a0a0" />
<path d="M1005.25 195.0 L1005.25 200.0 L1002.25 197.5z" fill="#000" shape-rendering="auto"/>
<rect x="1011" y="189" width="14" height="17" fill="#f0f0f0" />
<rect x="1011" y="189" width="14" height="1" fill="#ffffff" />
<rect x="1011" y="189" width="1" height="17" fill="#ffffff" />
<rect x="1011" y="205" width="14" height="1" fill="#696969" />
<rect x="1024" y="189" width="1" height="17" fill="#696969" />
<rect x="1012" y="204" width="12" height="1" fill="#a0a0a0" />
<rect x="1023" y="190" width="1" height="15" fill="#a0a0a0" />
<path d="M1016.75 195.0 L1016.75 200.0 L1019.75 197.5z" fill="#000" shape-rendering="auto"/>
<rect x="852" y="199" width="40" height="19" fill="#fff" />
<rect x="852" y="199" width="40" height="1" fill="#a0a0a0" />
<rect x="852" y="199" width="1" height="19" fill="#a0a0a0" />
<rect x="853" y="200" width="38" height="1" fill="#696969" />
<rect x="853" y="200" width="1" height="17" fill="#696969" />
<rect x="852" y="217" width="40" height="1" fill="#ffffff" />
<rect x="891" y="199" width="1" height="19" fill="#ffffff" />
<rect x="853" y="216" width="38" height="1" fill="#e3e3e3" />
<rect x="890" y="200" width="1" height="17" fill="#e3e3e3" />
<text x="855.5" y="212" font-family="Liberation Sans" font-size="12.2" textLength="26.5" lengthAdjust="spacingAndGlyphs" fill="#000" xml:space="preserve" >701.4</text>
<rect x="894" y="200" width="12" height="12" fill="#fff" />
<rect x="894" y="200" width="12" height="1" fill="#a0a0a0" />
<rect x="894" y="200" width="1" height="12" fill="#a0a0a0" />
<rect x="895" y="201" width="10" height="1" fill="#696969" />
<rect x="895" y="201" width="1" height="10" fill="#696969" />
<rect x="894" y="211" width="12" height="1" fill="#ffffff" />
<rect x="905" y="200" width="1" height="12" fill="#ffffff" />
<rect x="895" y="210" width="10" height="1" fill="#e3e3e3" />
<rect x="904" y="201" width="1" height="10" fill="#e3e3e3" />
<text x="912.7" y="211" font-family="Liberation Sans" font-size="12.2" textLength="6.6" lengthAdjust="spacingAndGlyphs" fill="#000" xml:space="preserve" >D</text>
<rect x="925" y="212" width="29" height="19" fill="#fff" />
<rect x="925" y="212" width="29" height="1" fill="#a0a0a0" />
<rect x="925" y="212" width="1" height="19" fill="#a0a0a0" />
<rect x="926" y="213" width="27" height="1" fill="#696969" />
<rect x="926" y="213" width="1" height="17" fill="#696969" />
<rect x="925" y="230" width="29" height="1" fill="#ffffff" />
<rect x="953" y="212" width="1" height="19" fill="#ffffff" />
<rect x="926" y="229" width="27" height="1" fill="#e3e3e3" />
<rect x="952" y="213" width="1" height="17" fill="#e3e3e3" />
<text x="929" y="225.5" font-family="Liberation Sans" font-size="12.2" textLength="6.8" lengthAdjust="spacingAndGlyphs" fill="#000" xml:space="preserve" >-1</text>
<rect x="961" y="212" width="27" height="19" fill="#fff" />
<rect x="961" y="212" width="27" height="1" fill="#a0a0a0" />
<rect x="961" y="212" width="1" height="19" fill="#a0a0a0" />
<rect x="962" y="213" width="25" height="1" fill="#696969" />
<rect x="962" y="213" width="1" height="17" fill="#696969" />
<rect x="961" y="230" width="27" height="1" fill="#ffffff" />
<rect x="987" y="212" width="1" height="19" fill="#ffffff" />
<rect x="962" y="229" width="25" height="1" fill="#e3e3e3" />
<rect x="986" y="213" width="1" height="17" fill="#e3e3e3" />
<text x="964.5" y="225.5" font-family="Liberation Sans" font-size="12.2" textLength="5.9" lengthAdjust="spacingAndGlyphs" fill="#000" xml:space="preserve" >0</text>
<rect x="997" y="212" width="25" height="19" fill="#fff" />
<rect x="997" y="212" width="25" height="1" fill="#a0a0a0" />
<rect x="997" y="212" width="1" height="19" fill="#a0a0a0" />
<rect x="998" y="213" width="23" height="1" fill="#696969" />
<rect x="998" y="213" width="1" height="17" fill="#696969" />
<rect x="997" y="230" width="25" height="1" fill="#ffffff" />
<rect x="1021" y="212" width="1" height="19" fill="#ffffff" />
<rect x="998" y="229" width="23" height="1" fill="#e3e3e3" />
<rect x="1020" y="213" width="1" height="17" fill="#e3e3e3" />
<text x="1000.5" y="225.5" font-family="Liberation Sans" font-size="12.2" textLength="10" lengthAdjust="spacingAndGlyphs" fill="#000" xml:space="preserve" >11</text>
<text x="852.7" y="228.3" font-family="Liberation Sans" font-size="12.2" textLength="71.6" lengthAdjust="spacingAndGlyphs" fill="#000" xml:space="preserve" >Disappearance</text>
<rect x="852" y="231" width="40" height="19" fill="#fff" />
<rect x="852" y="231" width="40" height="1" fill="#a0a0a0" />
<rect x="852" y="231" width="1" height="19" fill="#a0a0a0" />
<rect x="853" y="232" width="38" height="1" fill="#696969" />
<rect x="853" y="232" width="1" height="17" fill="#696969" />
<rect x="852" y="249" width="40" height="1" fill="#ffffff" />
<rect x="891" y="231" width="1" height="19" fill="#ffffff" />
<rect x="853" y="248" width="38" height="1" fill="#e3e3e3" />
<rect x="890" y="232" width="1" height="17" fill="#e3e3e3" />
<text x="855.5" y="244" font-family="Liberation Sans" font-size="12.2" textLength="26.5" lengthAdjust="spacingAndGlyphs" fill="#000" xml:space="preserve" >131.4</text>
<rect x="894" y="232" width="23" height="17" fill="#f0f0f0" />
<rect x="894" y="232" width="23" height="1" fill="#ffffff" />
<rect x="894" y="232" width="1" height="17" fill="#ffffff" />
<rect x="894" y="248" width="23" height="1" fill="#696969" />
<rect x="916" y="232" width="1" height="17" fill="#696969" />
<rect x="895" y="247" width="21" height="1" fill="#a0a0a0" />
<rect x="915" y="233" width="1" height="15" fill="#a0a0a0" />
<text x="899.7" y="243.2" font-family="Liberation Sans" font-size="12.2" textLength="12.5" lengthAdjust="spacingAndGlyphs" fill="#000" xml:space="preserve" >Fix</text>
<rect x="927" y="232" width="14" height="18" fill="#f0f0f0" />
<rect x="927" y="232" width="14" height="1" fill="#ffffff" />
<rect x="927" y="232" width="1" height="18" fill="#ffffff" />
<rect x="927" y="249" width="14" height="1" fill="#696969" />
<rect x="940" y="232" width="1" height="18" fill="#696969" />
<rect x="928" y="248" width="12" height="1" fill="#a0a0a0" />
<rect x="939" y="233" width="1" height="16" fill="#a0a0a0" />
<path d="M935.25 238.5 L935.25 243.5 L932.25 241.0z" fill="#000" shape-rendering="auto"/>
<rect x="941" y="232" width="14" height="18" fill="#f0f0f0" />
<rect x="941" y="232" width="14" height="1" fill="#ffffff" />
<rect x="941" y="232" width="1" height="18" fill="#ffffff" />
<rect x="941" y="249" width="14" height="1" fill="#696969" />
<rect x="954" y="232" width="1" height="18" fill="#696969" />
<rect x="942" y="248" width="12" height="1" fill="#a0a0a0" />
<rect x="953" y="233" width="1" height="16" fill="#a0a0a0" />
<path d="M946.75 238.5 L946.75 243.5 L949.75 241.0z" fill="#000" shape-rendering="auto"/>
<rect x="961" y="232" width="14" height="18" fill="#f0f0f0" />
<rect x="961" y="232" width="14" height="1" fill="#ffffff" />
<rect x="961" y="232" width="1" height="18" fill="#ffffff" />
<rect x="961" y="249" width="14" height="1" fill="#696969" />
<rect x="974" y="232" width="1" height="18" fill="#696969" />
<rect x="962" y="248" width="12" height="1" fill="#a0a0a0" />
<rect x="973" y="233" width="1" height="16" fill="#a0a0a0" />
<path d="M969.25 238.5 L969.25 243.5 L966.25 241.0z" fill="#000" shape-rendering="auto"/>
<rect x="975" y="232" width="14" height="18" fill="#f0f0f0" />
<rect x="975" y="232" width="14" height="1" fill="#ffffff" />
<rect x="975" y="232" width="1" height="18" fill="#ffffff" />
<rect x="975" y="249" width="14" height="1" fill="#696969" />
<rect x="988" y="232" width="1" height="18" fill="#696969" />
<rect x="976" y="248" width="12" height="1" fill="#a0a0a0" />
<rect x="987" y="233" width="1" height="16" fill="#a0a0a0" />
<path d="M980.75 238.5 L980.75 243.5 L983.75 241.0z" fill="#000" shape-rendering="auto"/>
<rect x="997" y="232" width="14" height="18" fill="#f0f0f0" />
<rect x="997" y="232" width="14" height="1" fill="#ffffff" />
<rect x="997" y="232" width="1" height="18" fill="#ffffff" />
<rect x="997" y="249" width="14" height="1" fill="#696969" />
<rect x="1010" y="232" width="1" height="18" fill="#696969" />
<rect x="998" y="248" width="12" height="1" fill="#a0a0a0" />
<rect x="1009" y="233" width="1" height="16" fill="#a0a0a0" />
<path d="M1005.25 238.5 L1005.25 243.5 L1002.25 241.0z" fill="#000" shape-rendering="auto"/>
<rect x="1011" y="232" width="14" height="18" fill="#f0f0f0" />
<rect x="1011" y="232" width="14" height="1" fill="#ffffff" />
<rect x="1011" y="232" width="1" height="18" fill="#ffffff" />
<rect x="1011" y="249" width="14" height="1" fill="#696969" />
<rect x="1024" y="232" width="1" height="18" fill="#696969" />
<rect x="1012" y="248" width="12" height="1" fill="#a0a0a0" />
<rect x="1023" y="233" width="1" height="16" fill="#a0a0a0" />
<path d="M1016.75 238.5 L1016.75 243.5 L1019.75 241.0z" fill="#000" shape-rendering="auto"/>
<rect x="846.5" y="264.5" width="182" height="46" fill="none" stroke="#ffffff"/>
<rect x="845.5" y="263.5" width="182" height="46" fill="none" stroke="#a0a0a0"/>
<rect x="850.5" y="257" width="164.1" height="12" fill="#f0f0f0" />
<text x="852.5" y="268.4" font-family="Liberation Sans" font-size="12.4" font-weight="bold" textLength="160.1" lengthAdjust="spacingAndGlyphs" fill="#000" xml:space="preserve" >Frame Range for Processing</text>
<rect x="852" y="274" width="32" height="19" fill="#fff" />
<rect x="852" y="274" width="32" height="1" fill="#a0a0a0" />
<rect x="852" y="274" width="1" height="19" fill="#a0a0a0" />
<rect x="853" y="275" width="30" height="1" fill="#696969" />
<rect x="853" y="275" width="1" height="17" fill="#696969" />
<rect x="852" y="292" width="32" height="1" fill="#ffffff" />
<rect x="883" y="274" width="1" height="19" fill="#ffffff" />
<rect x="853" y="291" width="30" height="1" fill="#e3e3e3" />
<rect x="882" y="275" width="1" height="17" fill="#e3e3e3" />
<text x="855.5" y="287.5" font-family="Liberation Sans" font-size="12.2" textLength="7.5" lengthAdjust="spacingAndGlyphs" fill="#000" xml:space="preserve" >-1</text>
<rect x="900" y="274" width="32" height="19" fill="#fff" />
<rect x="900" y="274" width="32" height="1" fill="#a0a0a0" />
<rect x="900" y="274" width="1" height="19" fill="#a0a0a0" />
<rect x="901" y="275" width="30" height="1" fill="#696969" />
<rect x="901" y="275" width="1" height="17" fill="#696969" />
<rect x="900" y="292" width="32" height="1" fill="#ffffff" />
<rect x="931" y="274" width="1" height="19" fill="#ffffff" />
<rect x="901" y="291" width="30" height="1" fill="#e3e3e3" />
<rect x="930" y="275" width="1" height="17" fill="#e3e3e3" />
<text x="903.6" y="287.5" font-family="Liberation Sans" font-size="12.2" textLength="11.8" lengthAdjust="spacingAndGlyphs" fill="#000" xml:space="preserve" >45</text>
<rect x="948" y="274" width="12" height="12" fill="#fff" />
<rect x="948" y="274" width="12" height="1" fill="#a0a0a0" />
<rect x="948" y="274" width="1" height="12" fill="#a0a0a0" />
<rect x="949" y="275" width="10" height="1" fill="#696969" />
<rect x="949" y="275" width="1" height="10" fill="#696969" />
<rect x="948" y="285" width="12" height="1" fill="#ffffff" />
<rect x="959" y="274" width="1" height="12" fill="#ffffff" />
<rect x="949" y="284" width="10" height="1" fill="#e3e3e3" />
<rect x="958" y="275" width="1" height="10" fill="#e3e3e3" />
<path d="M950.769 278.8 l2.30769 2.30769 l4.15385 -4.15385 v2.58462 l-4.15385 4.15385 l-2.30769 -2.30769z" fill="#000" shape-rendering="auto"/>
<text x="966.5" y="283.8" font-family="Liberation Sans" font-size="12.2" textLength="52" lengthAdjust="spacingAndGlyphs" fill="#000" xml:space="preserve" >SelectArea</text>
<rect x="852" y="292" width="16" height="16" fill="#f0f0f0" />
<rect x="852" y="292" width="16" height="1" fill="#ffffff" />
<rect x="852" y="292" width="1" height="16" fill="#ffffff" />
<rect x="852" y="307" width="16" height="1" fill="#696969" />
<rect x="867" y="292" width="1" height="16" fill="#696969" />
<rect x="853" y="306" width="14" height="1" fill="#a0a0a0" />
<rect x="866" y="293" width="1" height="14" fill="#a0a0a0" />
<path d="M861.5 297.0 L861.5 303.0 L858.0 300.0z" fill="#000" shape-rendering="auto"/>
<rect x="869" y="292" width="16" height="16" fill="#f0f0f0" />
<rect x="869" y="292" width="16" height="1" fill="#ffffff" />
<rect x="869" y="292" width="1" height="16" fill="#ffffff" />
<rect x="869" y="307" width="16" height="1" fill="#696969" />
<rect x="884" y="292" width="1" height="16" fill="#696969" />
<rect x="870" y="306" width="14" height="1" fill="#a0a0a0" />
<rect x="883" y="293" width="1" height="14" fill="#a0a0a0" />
<path d="M875.5 297.0 L875.5 303.0 L879.0 300.0z" fill="#000" shape-rendering="auto"/>
<rect x="900" y="292" width="16" height="16" fill="#f0f0f0" />
<rect x="900" y="292" width="16" height="1" fill="#ffffff" />
<rect x="900" y="292" width="1" height="16" fill="#ffffff" />
<rect x="900" y="307" width="16" height="1" fill="#696969" />
<rect x="915" y="292" width="1" height="16" fill="#696969" />
<rect x="901" y="306" width="14" height="1" fill="#a0a0a0" />
<rect x="914" y="293" width="1" height="14" fill="#a0a0a0" />
<path d="M909.5 297.0 L909.5 303.0 L906.0 300.0z" fill="#000" shape-rendering="auto"/>
<rect x="917" y="292" width="16" height="16" fill="#f0f0f0" />
<rect x="917" y="292" width="16" height="1" fill="#ffffff" />
<rect x="917" y="292" width="1" height="16" fill="#ffffff" />
<rect x="917" y="307" width="16" height="1" fill="#696969" />
<rect x="932" y="292" width="1" height="16" fill="#696969" />
<rect x="918" y="306" width="14" height="1" fill="#a0a0a0" />
<rect x="931" y="293" width="1" height="14" fill="#a0a0a0" />
<path d="M923.5 297.0 L923.5 303.0 L927.0 300.0z" fill="#000" shape-rendering="auto"/>
<text x="940.3" y="304.3" font-family="Liberation Sans" font-size="12.2" textLength="44.7" lengthAdjust="spacingAndGlyphs" fill="#000" xml:space="preserve" >DataNum</text>
<rect x="988" y="288" width="32" height="20" fill="#fff" />
<rect x="988" y="288" width="32" height="1" fill="#a0a0a0" />
<rect x="988" y="288" width="1" height="20" fill="#a0a0a0" />
<rect x="989" y="289" width="30" height="1" fill="#696969" />
<rect x="989" y="289" width="1" height="18" fill="#696969" />
<rect x="988" y="307" width="32" height="1" fill="#ffffff" />
<rect x="1019" y="288" width="1" height="20" fill="#ffffff" />
<rect x="989" y="306" width="30" height="1" fill="#e3e3e3" />
<rect x="1018" y="289" width="1" height="18" fill="#e3e3e3" />
<text x="991.9" y="301.6" font-family="Liberation Sans" font-size="12.4" font-weight="bold" textLength="12.8" lengthAdjust="spacingAndGlyphs" fill="#000" xml:space="preserve" >47</text>
<rect x="846.5" y="318.5" width="182" height="122" fill="none" stroke="#ffffff"/>
<rect x="845.5" y="317.5" width="182" height="122" fill="none" stroke="#a0a0a0"/>
<rect x="850.5" y="311" width="130.8" height="12" fill="#f0f0f0" />
<text x="852.5" y="322.5" font-family="Liberation Sans" font-size="12.4" font-weight="bold" textLength="126.8" lengthAdjust="spacingAndGlyphs" fill="#000" xml:space="preserve" >Central Time of  Event</text>
<text x="852.7" y="338.7" font-family="Liberation Sans" font-size="12.4" font-weight="bold" textLength="151.6" lengthAdjust="spacingAndGlyphs" fill="#000" xml:space="preserve" >Component 1  [Single Star]</text>
<text x="852.7" y="352.7" font-family="Liberation Sans" font-size="12.2" textLength="68.3" lengthAdjust="spacingAndGlyphs" fill="#000" xml:space="preserve" >Frame Number</text>
<text x="940.3" y="352.7" font-family="Liberation Sans" font-size="12.2" textLength="54" lengthAdjust="spacingAndGlyphs" fill="#000" xml:space="preserve" >Offset Time</text>
<rect x="852" y="357" width="64" height="19" fill="#fff" />
<rect x="852" y="357" width="64" height="1" fill="#a0a0a0" />
<rect x="852" y="357" width="1" height="19" fill="#a0a0a0" />
<rect x="853" y="358" width="62" height="1" fill="#696969" />
<rect x="853" y="358" width="1" height="17" fill="#696969" />
<rect x="852" y="375" width="64" height="1" fill="#ffffff" />
<rect x="915" y="357" width="1" height="19" fill="#ffffff" />
<rect x="853" y="374" width="62" height="1" fill="#e3e3e3" />
<rect x="914" y="358" width="1" height="17" fill="#e3e3e3" />
<text x="856" y="370" font-family="Liberation Sans" font-size="12.4" font-weight="bold" textLength="31" lengthAdjust="spacingAndGlyphs" fill="#000" xml:space="preserve" >316.0</text>
<text x="925" y="373" font-family="Liberation Sans" font-size="12.4" font-weight="bold" textLength="6" lengthAdjust="spacingAndGlyphs" fill="#000" xml:space="preserve" >+</text>
<rect x="936" y="357" width="44" height="19" fill="#fff" />
<rect x="936" y="357" width="44" height="1" fill="#a0a0a0" />
<rect x="936" y="357" width="1" height="19" fill="#a0a0a0" />
<rect x="937" y="358" width="42" height="1" fill="#696969" />
<rect x="937" y="358" width="1" height="17" fill="#696969" />
<rect x="936" y="375" width="44" height="1" fill="#ffffff" />
<rect x="979" y="357" width="1" height="19" fill="#ffffff" />
<rect x="937" y="374" width="42" height="1" fill="#e3e3e3" />
<rect x="978" y="358" width="1" height="17" fill="#e3e3e3" />
<text x="939.3" y="370" font-family="Liberation Sans" font-size="12.4" font-weight="bold" textLength="29" lengthAdjust="spacingAndGlyphs" fill="#000" xml:space="preserve" >-94.5</text>
<text x="986" y="374.3" font-family="Liberation Sans" font-size="12.2" textLength="25" lengthAdjust="spacingAndGlyphs" fill="#000" xml:space="preserve" >msec</text>
<rect x="936" y="377" width="44" height="19" fill="#fff" />
<rect x="936" y="377" width="44" height="1" fill="#a0a0a0" />
<rect x="936" y="377" width="1" height="19" fill="#a0a0a0" />
<rect x="937" y="378" width="42" height="1" fill="#696969" />
<rect x="937" y="378" width="1" height="17" fill="#696969" />
<rect x="936" y="395" width="44" height="1" fill="#ffffff" />
<rect x="979" y="377" width="1" height="19" fill="#ffffff" />
<rect x="937" y="394" width="42" height="1" fill="#e3e3e3" />
<rect x="978" y="378" width="1" height="17" fill="#e3e3e3" />
<text x="939.3" y="390" font-family="Liberation Sans" font-size="12.4" font-weight="bold" textLength="31.7" lengthAdjust="spacingAndGlyphs" fill="#000" xml:space="preserve" >115.2</text>
<text x="986" y="392.7" font-family="Liberation Sans" font-size="12.2" textLength="25" lengthAdjust="spacingAndGlyphs" fill="#000" xml:space="preserve" >msec</text>
<text x="852.7" y="392" font-family="Liberation Sans" font-size="12.2" textLength="63.3" lengthAdjust="spacingAndGlyphs" fill="#000" xml:space="preserve" >Error(1 sigma)</text>
<text x="921" y="392" font-family="Liberation Sans" font-size="12.4" font-weight="bold" textLength="14" lengthAdjust="spacingAndGlyphs" fill="#000" xml:space="preserve" >+/-</text>
<rect x="852" y="400" width="169" height="1" fill="#9cc0e8" />
<text x="852.7" y="413.3" font-family="Liberation Sans" font-size="12.4" font-weight="bold" textLength="160.3" lengthAdjust="spacingAndGlyphs" fill="#000" xml:space="preserve" >Component 2   [Double Star]</text>
<text x="860.3" y="432" font-family="Liberation Sans" font-size="12.2" textLength="54" lengthAdjust="spacingAndGlyphs" fill="#000" xml:space="preserve" >Offset Time</text>
<text x="925" y="435" font-family="Liberation Sans" font-size="12.4" font-weight="bold" textLength="6" lengthAdjust="spacingAndGlyphs" fill="#000" xml:space="preserve" >+</text>
<rect x="936" y="418" width="34" height="19" fill="#fff" />
<rect x="936" y="418" width="34" height="1" fill="#a0a0a0" />
<rect x="936" y="418" width="1" height="19" fill="#a0a0a0" />
<rect x="937" y="419" width="32" height="1" fill="#696969" />
<rect x="937" y="419" width="1" height="17" fill="#696969" />
<rect x="936" y="436" width="34" height="1" fill="#ffffff" />
<rect x="969" y="418" width="1" height="19" fill="#ffffff" />
<rect x="937" y="435" width="32" height="1" fill="#e3e3e3" />
<rect x="968" y="419" width="1" height="17" fill="#e3e3e3" />
<text x="972" y="432" font-family="Liberation Sans" font-size="12.2" textLength="51.5" lengthAdjust="spacingAndGlyphs" fill="#000" xml:space="preserve" >millisecond</text>
<rect x="846.5" y="448.5" width="182" height="45" fill="none" stroke="#ffffff"/>
<rect x="845.5" y="447.5" width="182" height="45" fill="none" stroke="#a0a0a0"/>
<rect x="850.5" y="441" width="145" height="12" fill="#f0f0f0" />
<text x="852.5" y="452.9" font-family="Liberation Sans" font-size="12.4" font-weight="bold" textLength="141" lengthAdjust="spacingAndGlyphs" fill="#000" xml:space="preserve" >Speed of Fresnel Pattern</text>
<text x="852.7" y="467.7" font-family="Liberation Sans" font-size="12.2" textLength="22.3" lengthAdjust="spacingAndGlyphs" fill="#000" xml:space="preserve" >Rate</text>
<text x="931.7" y="467.7" font-family="Liberation Sans" font-size="12.2" textLength="66.6" lengthAdjust="spacingAndGlyphs" fill="#000" xml:space="preserve" >Contact Angle</text>
<rect x="852" y="471" width="48" height="19" fill="#fff" />
<rect x="852" y="471" width="48" height="1" fill="#a0a0a0" />
<rect x="852" y="471" width="1" height="19" fill="#a0a0a0" />
<rect x="853" y="472" width="46" height="1" fill="#696969" />
<rect x="853" y="472" width="1" height="17" fill="#696969" />
<rect x="852" y="489" width="48" height="1" fill="#ffffff" />
<rect x="899" y="471" width="1" height="19" fill="#ffffff" />
<rect x="853" y="488" width="46" height="1" fill="#e3e3e3" />
<rect x="898" y="472" width="1" height="17" fill="#e3e3e3" />
<text x="856" y="483.8" font-family="Liberation Sans" font-size="12.4" font-weight="bold" textLength="38.3" lengthAdjust="spacingAndGlyphs" fill="#000" xml:space="preserve" >1.0000</text>
<rect x="932" y="471" width="48" height="19" fill="#fff" />
<rect x="932" y="471" width="48" height="1" fill="#a0a0a0" />
<rect x="932" y="471" width="1" height="19" fill="#a0a0a0" />
<rect x="933" y="472" width="46" height="1" fill="#696969" />
<rect x="933" y="472" width="1" height="17" fill="#696969" />
<rect x="932" y="489" width="48" height="1" fill="#ffffff" />
<rect x="979" y="471" width="1" height="19" fill="#ffffff" />
<rect x="933" y="488" width="46" height="1" fill="#e3e3e3" />
<rect x="978" y="472" width="1" height="17" fill="#e3e3e3" />
<text x="936" y="483.8" font-family="Liberation Sans" font-size="12.4" font-weight="bold" textLength="17.3" lengthAdjust="spacingAndGlyphs" fill="#000" xml:space="preserve" >0.0</text>
<text x="988.9" y="487" font-family="Liberation Sans" font-size="12.2" textLength="32.3" lengthAdjust="spacingAndGlyphs" fill="#000" xml:space="preserve" >degree</text>
<rect x="846.5" y="501.5" width="182" height="66" fill="none" stroke="#ffffff"/>
<rect x="845.5" y="500.5" width="182" height="66" fill="none" stroke="#a0a0a0"/>
<rect x="850" y="497" width="150" height="12" fill="#f0f0f0" />
<rect x="852" y="497" width="12" height="12" fill="#fff" />
<rect x="852" y="497" width="12" height="1" fill="#a0a0a0" />
<rect x="852" y="497" width="1" height="12" fill="#a0a0a0" />
<rect x="853" y="498" width="10" height="1" fill="#696969" />
<rect x="853" y="498" width="1" height="10" fill="#696969" />
<rect x="852" y="508" width="12" height="1" fill="#ffffff" />
<rect x="863" y="497" width="1" height="12" fill="#ffffff" />
<rect x="853" y="507" width="10" height="1" fill="#e3e3e3" />
<rect x="862" y="498" width="1" height="10" fill="#e3e3e3" />
<text x="871.7" y="506.7" font-family="Liberation Sans" font-size="12.4" font-weight="bold" textLength="124.3" lengthAdjust="spacingAndGlyphs" fill="#000" xml:space="preserve" >Double Star Analyzing</text>
<text x="852.7" y="521.7" font-family="Liberation Sans" font-size="12.2" textLength="49.3" lengthAdjust="spacingAndGlyphs" fill="#000" xml:space="preserve" >Step Hight</text>
<text x="941" y="521.7" font-family="Liberation Sans" font-size="12.2" textLength="75" lengthAdjust="spacingAndGlyphs" fill="#000" xml:space="preserve" >Time Difference</text>
<rect x="853" y="528" width="16" height="11" fill="#f0f0f0" />
<rect x="853" y="528" width="16" height="1" fill="#ffffff" />
<rect x="853" y="528" width="1" height="11" fill="#ffffff" />
<rect x="853" y="538" width="16" height="1" fill="#696969" />
<rect x="868" y="528" width="1" height="11" fill="#696969" />
<rect x="854" y="537" width="14" height="1" fill="#a0a0a0" />
<rect x="867" y="529" width="1" height="9" fill="#a0a0a0" />
<path d="M858.5 534.75 L863.5 534.75 L861.0 531.75z" fill="#a0a0a0" shape-rendering="auto"/>
<rect x="853" y="540" width="16" height="11" fill="#f0f0f0" />
<rect x="853" y="540" width="16" height="1" fill="#ffffff" />
<rect x="853" y="540" width="1" height="11" fill="#ffffff" />
<rect x="853" y="550" width="16" height="1" fill="#696969" />
<rect x="868" y="540" width="1" height="11" fill="#696969" />
<rect x="854" y="549" width="14" height="1" fill="#a0a0a0" />
<rect x="867" y="541" width="1" height="9" fill="#a0a0a0" />
<path d="M858.5 544.25 L863.5 544.25 L861.0 547.25z" fill="#a0a0a0" shape-rendering="auto"/>
<rect x="870" y="528" width="16" height="11" fill="#f0f0f0" />
<rect x="870" y="528" width="16" height="1" fill="#ffffff" />
<rect x="870" y="528" width="1" height="11" fill="#ffffff" />
<rect x="870" y="538" width="16" height="1" fill="#696969" />
<rect x="885" y="528" width="1" height="11" fill="#696969" />
<rect x="871" y="537" width="14" height="1" fill="#a0a0a0" />
<rect x="884" y="529" width="1" height="9" fill="#a0a0a0" />
<path d="M875.5 534.75 L880.5 534.75 L878.0 531.75z" fill="#a0a0a0" shape-rendering="auto"/>
<rect x="870" y="540" width="16" height="11" fill="#f0f0f0" />
<rect x="870" y="540" width="16" height="1" fill="#ffffff" />
<rect x="870" y="540" width="1" height="11" fill="#ffffff" />
<rect x="870" y="550" width="16" height="1" fill="#696969" />
<rect x="885" y="540" width="1" height="11" fill="#696969" />
<rect x="871" y="549" width="14" height="1" fill="#a0a0a0" />
<rect x="884" y="541" width="1" height="9" fill="#a0a0a0" />
<path d="M875.5 544.25 L880.5 544.25 L878.0 547.25z" fill="#a0a0a0" shape-rendering="auto"/>
<rect x="885" y="528" width="29" height="19" fill="#fff" />
<rect x="885" y="528" width="29" height="1" fill="#a0a0a0" />
<rect x="885" y="528" width="1" height="19" fill="#a0a0a0" />
<rect x="886" y="529" width="27" height="1" fill="#696969" />
<rect x="886" y="529" width="1" height="17" fill="#696969" />
<rect x="885" y="546" width="29" height="1" fill="#ffffff" />
<rect x="913" y="528" width="1" height="19" fill="#ffffff" />
<rect x="886" y="545" width="27" height="1" fill="#e3e3e3" />
<rect x="912" y="529" width="1" height="17" fill="#e3e3e3" />
<text x="887" y="541" font-family="Liberation Sans" font-size="12.2" textLength="19" lengthAdjust="spacingAndGlyphs" fill="#a0a0a0" xml:space="preserve" >50.0</text>
<text x="909.3" y="554" font-family="Liberation Sans" font-size="12.2" textLength="6.7" lengthAdjust="spacingAndGlyphs" fill="#000" xml:space="preserve" >%</text>
<rect x="924" y="528" width="16" height="11" fill="#f0f0f0" />
<rect x="924" y="528" width="16" height="1" fill="#ffffff" />
<rect x="924" y="528" width="1" height="11" fill="#ffffff" />
<rect x="924" y="538" width="16" height="1" fill="#696969" />
<rect x="939" y="528" width="1" height="11" fill="#696969" />
<rect x="925" y="537" width="14" height="1" fill="#a0a0a0" />
<rect x="938" y="529" width="1" height="9" fill="#a0a0a0" />
<path d="M929.5 534.75 L934.5 534.75 L932.0 531.75z" fill="#a0a0a0" shape-rendering="auto"/>
<rect x="924" y="540" width="16" height="11" fill="#f0f0f0" />
<rect x="924" y="540" width="16" height="1" fill="#ffffff" />
<rect x="924" y="540" width="1" height="11" fill="#ffffff" />
<rect x="924" y="550" width="16" height="1" fill="#696969" />
<rect x="939" y="540" width="1" height="11" fill="#696969" />
<rect x="925" y="549" width="14" height="1" fill="#a0a0a0" />
<rect x="938" y="541" width="1" height="9" fill="#a0a0a0" />
<path d="M929.5 544.25 L934.5 544.25 L932.0 547.25z" fill="#a0a0a0" shape-rendering="auto"/>
<rect x="941" y="528" width="16" height="11" fill="#f0f0f0" />
<rect x="941" y="528" width="16" height="1" fill="#ffffff" />
<rect x="941" y="528" width="1" height="11" fill="#ffffff" />
<rect x="941" y="538" width="16" height="1" fill="#696969" />
<rect x="956" y="528" width="1" height="11" fill="#696969" />
<rect x="942" y="537" width="14" height="1" fill="#a0a0a0" />
<rect x="955" y="529" width="1" height="9" fill="#a0a0a0" />
<path d="M946.5 534.75 L951.5 534.75 L949.0 531.75z" fill="#a0a0a0" shape-rendering="auto"/>
<rect x="941" y="540" width="16" height="11" fill="#f0f0f0" />
<rect x="941" y="540" width="16" height="1" fill="#ffffff" />
<rect x="941" y="540" width="1" height="11" fill="#ffffff" />
<rect x="941" y="550" width="16" height="1" fill="#696969" />
<rect x="956" y="540" width="1" height="11" fill="#696969" />
<rect x="942" y="549" width="14" height="1" fill="#a0a0a0" />
<rect x="955" y="541" width="1" height="9" fill="#a0a0a0" />
<path d="M946.5 544.25 L951.5 544.25 L949.0 547.25z" fill="#a0a0a0" shape-rendering="auto"/>
<rect x="957" y="528" width="16" height="11" fill="#f0f0f0" />
<rect x="957" y="528" width="16" height="1" fill="#ffffff" />
<rect x="957" y="528" width="1" height="11" fill="#ffffff" />
<rect x="957" y="538" width="16" height="1" fill="#696969" />
<rect x="972" y="528" width="1" height="11" fill="#696969" />
<rect x="958" y="537" width="14" height="1" fill="#a0a0a0" />
<rect x="971" y="529" width="1" height="9" fill="#a0a0a0" />
<path d="M962.5 534.75 L967.5 534.75 L965.0 531.75z" fill="#a0a0a0" shape-rendering="auto"/>
<rect x="957" y="540" width="16" height="11" fill="#f0f0f0" />
<rect x="957" y="540" width="16" height="1" fill="#ffffff" />
<rect x="957" y="540" width="1" height="11" fill="#ffffff" />
<rect x="957" y="550" width="16" height="1" fill="#696969" />
<rect x="972" y="540" width="1" height="11" fill="#696969" />
<rect x="958" y="549" width="14" height="1" fill="#a0a0a0" />
<rect x="971" y="541" width="1" height="9" fill="#a0a0a0" />
<path d="M962.5 544.25 L967.5 544.25 L965.0 547.25z" fill="#a0a0a0" shape-rendering="auto"/>
<rect x="972" y="528" width="48" height="19" fill="#fff" />
<rect x="972" y="528" width="48" height="1" fill="#a0a0a0" />
<rect x="972" y="528" width="1" height="19" fill="#a0a0a0" />
<rect x="973" y="529" width="46" height="1" fill="#696969" />
<rect x="973" y="529" width="1" height="17" fill="#696969" />
<rect x="972" y="546" width="48" height="1" fill="#ffffff" />
<rect x="1019" y="528" width="1" height="19" fill="#ffffff" />
<rect x="973" y="545" width="46" height="1" fill="#e3e3e3" />
<rect x="1018" y="529" width="1" height="17" fill="#e3e3e3" />
<text x="975.7" y="541" font-family="Liberation Sans" font-size="12.2" textLength="5.5" lengthAdjust="spacingAndGlyphs" fill="#a0a0a0" xml:space="preserve" >0</text>
<text x="857.1" y="561.6" font-family="Liberation Sans" font-size="12.2" textLength="4" lengthAdjust="spacingAndGlyphs" fill="#000" xml:space="preserve" >1</text>
<text x="870.6" y="561.6" font-family="Liberation Sans" font-size="12.2" textLength="13.1" lengthAdjust="spacingAndGlyphs" fill="#000" xml:space="preserve" >0.1</text>
<text x="972" y="557.7" font-family="Liberation Sans" font-size="12.2" textLength="51.5" lengthAdjust="spacingAndGlyphs" fill="#000" xml:space="preserve" >millisecond</text>
<rect x="846.5" y="573.5" width="182" height="53" fill="none" stroke="#ffffff"/>
<rect x="845.5" y="572.5" width="182" height="53" fill="none" stroke="#a0a0a0"/>
<rect x="850" y="569" width="158" height="13" fill="#f0f0f0" />
<rect x="853" y="569" width="12" height="12" fill="#fff" />
<rect x="853" y="569" width="12" height="1" fill="#a0a0a0" />
<rect x="853" y="569" width="1" height="12" fill="#a0a0a0" />
<rect x="854" y="570" width="10" height="1" fill="#696969" />
<rect x="854" y="570" width="1" height="10" fill="#696969" />
<rect x="853" y="580" width="12" height="1" fill="#ffffff" />
<rect x="864" y="569" width="1" height="12" fill="#ffffff" />
<rect x="854" y="579" width="10" height="1" fill="#e3e3e3" />
<rect x="863" y="570" width="1" height="10" fill="#e3e3e3" />
<path d="M855.769 573.8 l2.30769 2.30769 l4.15385 -4.15385 v2.58462 l-4.15385 4.15385 l-2.30769 -2.30769z" fill="#000" shape-rendering="auto"/>
<text x="871.7" y="578.3" font-family="Liberation Sans" font-size="12.4" font-weight="bold" textLength="132.6" lengthAdjust="spacingAndGlyphs" fill="#000" xml:space="preserve" >Star&#x27;s Angular Diameter</text>
<rect x="853" y="584" width="16" height="10" fill="#f0f0f0" />
<rect x="853" y="584" width="16" height="1" fill="#ffffff" />
<rect x="853" y="584" width="1" height="10" fill="#ffffff" />
<rect x="853" y="593" width="16" height="1" fill="#696969" />
<rect x="868" y="584" width="1" height="10" fill="#696969" />
<rect x="854" y="592" width="14" height="1" fill="#a0a0a0" />
<rect x="867" y="585" width="1" height="8" fill="#a0a0a0" />
<path d="M858.5 590.25 L863.5 590.25 L861.0 587.25z" fill="#a0a0a0" shape-rendering="auto"/>
<rect x="853" y="595" width="16" height="12" fill="#f0f0f0" />
<rect x="853" y="595" width="16" height="1" fill="#ffffff" />
<rect x="853" y="595" width="1" height="12" fill="#ffffff" />
<rect x="853" y="606" width="16" height="1" fill="#696969" />
<rect x="868" y="595" width="1" height="12" fill="#696969" />
<rect x="854" y="605" width="14" height="1" fill="#a0a0a0" />
<rect x="867" y="596" width="1" height="10" fill="#a0a0a0" />
<path d="M858.5 599.75 L863.5 599.75 L861.0 602.75z" fill="#a0a0a0" shape-rendering="auto"/>
<rect x="869" y="584" width="32" height="19" fill="#fff" />
<rect x="869" y="584" width="32" height="1" fill="#a0a0a0" />
<rect x="869" y="584" width="1" height="19" fill="#a0a0a0" />
<rect x="870" y="585" width="30" height="1" fill="#696969" />
<rect x="870" y="585" width="1" height="17" fill="#696969" />
<rect x="869" y="602" width="32" height="1" fill="#ffffff" />
<rect x="900" y="584" width="1" height="19" fill="#ffffff" />
<rect x="870" y="601" width="30" height="1" fill="#e3e3e3" />
<rect x="899" y="585" width="1" height="17" fill="#e3e3e3" />
<text x="872.9" y="596.7" font-family="Liberation Sans" font-size="12.2" textLength="13.2" lengthAdjust="spacingAndGlyphs" fill="#a0a0a0" xml:space="preserve" >0.1</text>
<text x="901.9" y="597.7" font-family="Liberation Sans" font-size="12.2" textLength="71.4" lengthAdjust="spacingAndGlyphs" fill="#000" xml:space="preserve" >milli arc second</text>
<text x="861" y="620.3" font-family="Liberation Sans" font-size="12.2" textLength="117" lengthAdjust="spacingAndGlyphs" fill="#000" xml:space="preserve" >Intensity at event centre:</text>
<rect x="981" y="603" width="32" height="20" fill="#fff" />
<rect x="981" y="603" width="32" height="1" fill="#a0a0a0" />
<rect x="981" y="603" width="1" height="20" fill="#a0a0a0" />
<rect x="982" y="604" width="30" height="1" fill="#696969" />
<rect x="982" y="604" width="1" height="18" fill="#696969" />
<rect x="981" y="622" width="32" height="1" fill="#ffffff" />
<rect x="1012" y="603" width="1" height="20" fill="#ffffff" />
<rect x="982" y="621" width="30" height="1" fill="#e3e3e3" />
<rect x="1011" y="604" width="1" height="18" fill="#e3e3e3" />
<text x="984.7" y="617" font-family="Liberation Sans" font-size="13.5" textLength="24.6" lengthAdjust="spacingAndGlyphs" fill="#808080" xml:space="preserve" >25.7</text>
<text x="1013.9" y="620.2" font-family="Liberation Sans" font-size="12.2" textLength="7.3" lengthAdjust="spacingAndGlyphs" fill="#000" xml:space="preserve" >%</text>
<rect x="846.5" y="633.5" width="182" height="49" fill="none" stroke="#ffffff"/>
<rect x="845.5" y="632.5" width="182" height="49" fill="none" stroke="#a0a0a0"/>
<rect x="850.5" y="626" width="65.9" height="12" fill="#f0f0f0" />
<text x="852.5" y="637.6" font-family="Liberation Sans" font-size="12.4" font-weight="bold" textLength="61.9" lengthAdjust="spacingAndGlyphs" fill="#000" xml:space="preserve" >Processing</text>
<circle cx="858.3" cy="648.7" r="5.5" fill="#fff" stroke="#e3e3e3" stroke-width="1" shape-rendering="auto"/>
<path d="M854.1 652.9 A6 6 0 0 1 862.5 644.5" fill="none" stroke="#a0a0a0" stroke-width="1" shape-rendering="auto"/>
<path d="M854.8 652.2 A5 5 0 0 1 861.8 645.2" fill="none" stroke="#696969" stroke-width="1" shape-rendering="auto"/>
<path d="M854.1 652.9 A6 6 0 0 0 862.5 644.5" fill="none" stroke="#ffffff" stroke-width="1" shape-rendering="auto"/>
<circle cx="858.3" cy="648.7" r="2" fill="#000" shape-rendering="auto"/>
<text x="870.3" y="653.7" font-family="Liberation Sans" font-size="12.2" textLength="69" lengthAdjust="spacingAndGlyphs" fill="#000" xml:space="preserve" >for Occultation</text>
<circle cx="954.3" cy="648.7" r="5.5" fill="#fff" stroke="#e3e3e3" stroke-width="1" shape-rendering="auto"/>
<path d="M950.1 652.9 A6 6 0 0 1 958.5 644.5" fill="none" stroke="#a0a0a0" stroke-width="1" shape-rendering="auto"/>
<path d="M950.8 652.2 A5 5 0 0 1 957.8 645.2" fill="none" stroke="#696969" stroke-width="1" shape-rendering="auto"/>
<path d="M950.1 652.9 A6 6 0 0 0 958.5 644.5" fill="none" stroke="#ffffff" stroke-width="1" shape-rendering="auto"/>
<text x="966" y="653.7" font-family="Liberation Sans" font-size="12.2" textLength="52" lengthAdjust="spacingAndGlyphs" fill="#000" xml:space="preserve" >for Grazing</text>
<text x="850.3" y="673.7" font-family="Liberation Sans" font-size="12.2" textLength="88.4" lengthAdjust="spacingAndGlyphs" fill="#000" xml:space="preserve" >Sum-Squared Error</text>
<rect x="942" y="658" width="80" height="20" fill="#fff" />
<rect x="942" y="658" width="80" height="1" fill="#a0a0a0" />
<rect x="942" y="658" width="1" height="20" fill="#a0a0a0" />
<rect x="943" y="659" width="78" height="1" fill="#696969" />
<rect x="943" y="659" width="1" height="18" fill="#696969" />
<rect x="942" y="677" width="80" height="1" fill="#ffffff" />
<rect x="1021" y="658" width="1" height="20" fill="#ffffff" />
<rect x="943" y="676" width="78" height="1" fill="#e3e3e3" />
<rect x="1020" y="659" width="1" height="18" fill="#e3e3e3" />
<text x="946.1" y="671.8" font-family="Liberation Sans" font-size="12.4" font-weight="bold" textLength="48.1" lengthAdjust="spacingAndGlyphs" fill="#000" xml:space="preserve" >1849030</text>
<rect x="846" y="690" width="12" height="12" fill="#fff" />
<rect x="846" y="690" width="12" height="1" fill="#a0a0a0" />
<rect x="846" y="690" width="1" height="12" fill="#a0a0a0" />
<rect x="847" y="691" width="10" height="1" fill="#696969" />
<rect x="847" y="691" width="1" height="10" fill="#696969" />
<rect x="846" y="701" width="12" height="1" fill="#ffffff" />
<rect x="857" y="690" width="1" height="12" fill="#ffffff" />
<rect x="847" y="700" width="10" height="1" fill="#e3e3e3" />
<rect x="856" y="691" width="1" height="10" fill="#e3e3e3" />
<text x="864.6" y="700" font-family="Liberation Sans" font-size="12.2" textLength="44.6" lengthAdjust="spacingAndGlyphs" fill="#000" xml:space="preserve" >Mag drop</text>
<rect x="914" y="686" width="40" height="20" fill="#fff" />
<rect x="914" y="686" width="40" height="1" fill="#a0a0a0" />
<rect x="914" y="686" width="1" height="20" fill="#a0a0a0" />
<rect x="915" y="687" width="38" height="1" fill="#696969" />
<rect x="915" y="687" width="1" height="18" fill="#696969" />
<rect x="914" y="705" width="40" height="1" fill="#ffffff" />
<rect x="953" y="686" width="1" height="20" fill="#ffffff" />
<rect x="915" y="704" width="38" height="1" fill="#e3e3e3" />
<rect x="952" y="687" width="1" height="18" fill="#e3e3e3" />
<text x="917.7" y="699.7" font-family="Liberation Sans" font-size="12.2" textLength="14.5" lengthAdjust="spacingAndGlyphs" fill="#000" xml:space="preserve" >4.7</text>
<text x="960.6" y="700" font-family="Liberation Sans" font-size="12.2" textLength="51.7" lengthAdjust="spacingAndGlyphs" fill="#000" xml:space="preserve" >considered</text>
<rect x="848" y="708" width="177" height="9" fill="#f0f0f0" />
<rect x="848" y="708" width="177" height="1" fill="#a0a0a0" />
<rect x="848" y="708" width="1" height="9" fill="#a0a0a0" />
<rect x="849" y="709" width="175" height="1" fill="#696969" />
<rect x="849" y="709" width="1" height="7" fill="#696969" />
<rect x="848" y="716" width="177" height="1" fill="#ffffff" />
<rect x="1024" y="708" width="1" height="9" fill="#ffffff" />
<rect x="849" y="715" width="175" height="1" fill="#e3e3e3" />
<rect x="1023" y="709" width="1" height="7" fill="#e3e3e3" />
<rect x="848" y="720" width="177" height="25" fill="#6e6e6e" />
<rect x="849" y="721" width="175" height="23" fill="#f0f0f0" />
<rect x="849" y="721" width="175" height="1" fill="#ffffff" />
<rect x="849" y="721" width="1" height="23" fill="#ffffff" />
<rect x="849" y="743" width="175" height="1" fill="#696969" />
<rect x="1023" y="721" width="1" height="23" fill="#696969" />
<rect x="850" y="742" width="173" height="1" fill="#a0a0a0" />
<rect x="1022" y="722" width="1" height="21" fill="#a0a0a0" />
<text x="871.6" y="735.7" font-family="Liberation Sans" font-size="12.4" font-weight="bold" textLength="128.5" lengthAdjust="spacingAndGlyphs" fill="#000" xml:space="preserve" >Fit to Diffraction Curve</text>
<rect x="852" y="753" width="12" height="12" fill="#fff" />
<rect x="852" y="753" width="12" height="1" fill="#a0a0a0" />
<rect x="852" y="753" width="1" height="12" fill="#a0a0a0" />
<rect x="853" y="754" width="10" height="1" fill="#696969" />
<rect x="853" y="754" width="1" height="10" fill="#696969" />
<rect x="852" y="764" width="12" height="1" fill="#ffffff" />
<rect x="863" y="753" width="1" height="12" fill="#ffffff" />
<rect x="853" y="763" width="10" height="1" fill="#e3e3e3" />
<rect x="862" y="754" width="1" height="10" fill="#e3e3e3" />
<path d="M854.769 757.8 l2.30769 2.30769 l4.15385 -4.15385 v2.58462 l-4.15385 4.15385 l-2.30769 -2.30769z" fill="#000" shape-rendering="auto"/>
<text x="870.6" y="762.5" font-family="Liberation Sans" font-size="12.2" textLength="33.6" lengthAdjust="spacingAndGlyphs" fill="#000" xml:space="preserve" >Pop up</text>
<rect x="908" y="749" width="115" height="21" fill="#f0f0f0" />
<rect x="908" y="749" width="115" height="1" fill="#ffffff" />
<rect x="908" y="749" width="1" height="21" fill="#ffffff" />
<rect x="908" y="769" width="115" height="1" fill="#696969" />
<rect x="1022" y="749" width="1" height="21" fill="#696969" />
<rect x="909" y="768" width="113" height="1" fill="#a0a0a0" />
<rect x="1021" y="750" width="1" height="19" fill="#a0a0a0" />
<text x="921.7" y="762.5" font-family="Liberation Sans" font-size="12.4" font-weight="bold" textLength="87.6" lengthAdjust="spacingAndGlyphs" fill="#000" xml:space="preserve" >Magnitude Calc</text>
<rect x="845" y="771" width="184" height="1" fill="#ffffff" />
<rect x="845" y="772" width="184" height="1" fill="#a0a0a0" />
<rect x="845" y="773" width="184" height="1" fill="#c8c8c8" />
<rect x="892" y="780" width="12" height="12" fill="#fff" />
<rect x="892" y="780" width="12" height="1" fill="#a0a0a0" />
<rect x="892" y="780" width="1" height="12" fill="#a0a0a0" />
<rect x="893" y="781" width="10" height="1" fill="#696969" />
<rect x="893" y="781" width="1" height="10" fill="#696969" />
<rect x="892" y="791" width="12" height="1" fill="#ffffff" />
<rect x="903" y="780" width="1" height="12" fill="#ffffff" />
<rect x="893" y="790" width="10" height="1" fill="#e3e3e3" />
<rect x="902" y="781" width="1" height="10" fill="#e3e3e3" />
<text x="910.5" y="789.7" font-family="Liberation Sans" font-size="12.2" textLength="23.7" lengthAdjust="spacingAndGlyphs" fill="#000" xml:space="preserve" >More</text>
<rect x="1038" y="22" width="471" height="855" rx="8" fill="#000" opacity="0.32" filter="url(#sh)"/>
<rect x="1040" y="12" width="467" height="855" rx="8" fill="#f0f0f0" stroke="#9a9a9a" stroke-width="1" shape-rendering="auto"/>
<path d="M1040.5 39 V20 A7.5 7.5 0 0 1 1048 12.5 H1499 A7.5 7.5 0 0 1 1506.5 20 V39z" fill="#f0f0f0" shape-rendering="auto"/>
<rect x="1048" y="18" width="16" height="16" fill="#000070" />
<rect x="1049" y="19" width="14" height="14" fill="#0000c8" />
<rect x="1053" y="19" width="1" height="1" fill="#fff" />
<rect x="1053" y="32" width="1" height="1" fill="#fff" />
<rect x="1055.2" y="19" width="1" height="1" fill="#fff" />
<rect x="1055.2" y="32" width="1" height="1" fill="#fff" />
<rect x="1057.4" y="19" width="1" height="1" fill="#fff" />
<rect x="1057.4" y="32" width="1" height="1" fill="#fff" />
<rect x="1059.6" y="19" width="1" height="1" fill="#fff" />
<rect x="1059.6" y="32" width="1" height="1" fill="#fff" />
<rect x="1061.8" y="19" width="1" height="1" fill="#fff" />
<rect x="1061.8" y="32" width="1" height="1" fill="#fff" />
<rect x="1048" y="26" width="16" height="1.4" fill="#ffff00" />
<path d="M1053 18 L1054.2 25 L1059 26.5 L1054.2 28 L1053 34 L1051.8 28 L1048 26.5 L1051.8 25z" fill="#ffff00" shape-rendering="auto"/>
<text x="1069.3" y="30.7" font-family="Liberation Sans" font-size="12.8" textLength="186" lengthAdjust="spacingAndGlyphs" fill="#1a1a1a" xml:space="preserve" >Magnitude &amp; Event time Calculator</text>
<line x1="1388" y1="26.5" x2="1398" y2="26.5" stroke="#1a1a1a" stroke-width="1" />
<rect x="1433.5" y="21.5" width="9" height="9" rx="1" fill="none" stroke="#1a1a1a" shape-rendering="auto"/>
<path d="M1479 21 l10 10 M1489 21 l-10 10" stroke="#1a1a1a" fill="none" shape-rendering="auto"/>
<rect x="1042.5" y="48.5" width="141" height="39" fill="none" stroke="#ffffff"/>
<rect x="1041.5" y="47.5" width="141" height="39" fill="none" stroke="#a0a0a0"/>
<rect x="1046.7" y="41" width="124.9" height="12" fill="#f0f0f0" />
<text x="1048.7" y="52.7" font-family="Liberation Sans" font-size="12.4" font-weight="bold" textLength="120.9" lengthAdjust="spacingAndGlyphs" fill="#000" xml:space="preserve" >Selection for analysis</text>
<circle cx="1054.5" cy="61.8" r="5.5" fill="#fff" stroke="#e3e3e3" stroke-width="1" shape-rendering="auto"/>
<path d="M1050.3 66 A6 6 0 0 1 1058.7 57.6" fill="none" stroke="#a0a0a0" stroke-width="1" shape-rendering="auto"/>
<path d="M1051 65.3 A5 5 0 0 1 1058 58.3" fill="none" stroke="#696969" stroke-width="1" shape-rendering="auto"/>
<path d="M1050.3 66 A6 6 0 0 0 1058.7 57.6" fill="none" stroke="#ffffff" stroke-width="1" shape-rendering="auto"/>
<circle cx="1054.5" cy="61.8" r="2" fill="#000" shape-rendering="auto"/>
<text x="1067.7" y="66.9" font-family="Liberation Sans" font-size="12.4" font-weight="bold" textLength="63.7" lengthAdjust="spacingAndGlyphs" fill="#000" xml:space="preserve" >Timing only</text>
<circle cx="1054.5" cy="76" r="5.5" fill="#fff" stroke="#e3e3e3" stroke-width="1" shape-rendering="auto"/>
<path d="M1050.3 80.2 A6 6 0 0 1 1058.7 71.8" fill="none" stroke="#a0a0a0" stroke-width="1" shape-rendering="auto"/>
<path d="M1051 79.5 A5 5 0 0 1 1058 72.5" fill="none" stroke="#696969" stroke-width="1" shape-rendering="auto"/>
<path d="M1050.3 80.2 A6 6 0 0 0 1058.7 71.8" fill="none" stroke="#ffffff" stroke-width="1" shape-rendering="auto"/>
<text x="1067.7" y="80.8" font-family="Liberation Sans" font-size="12.4" font-weight="bold" textLength="112.7" lengthAdjust="spacingAndGlyphs" fill="#000" xml:space="preserve" >Doublestar and time</text>
<rect x="1191.5" y="48.5" width="141" height="117" fill="none" stroke="#ffffff"/>
<rect x="1190.5" y="47.5" width="141" height="117" fill="none" stroke="#a0a0a0"/>
<rect x="1196.7" y="41" width="116.3" height="12" fill="#f0f0f0" />
<text x="1198.7" y="52.7" font-family="Liberation Sans" font-size="12.4" font-weight="bold" textLength="112.3" lengthAdjust="spacingAndGlyphs" fill="#000" xml:space="preserve" >Statistic Calculation</text>
<text x="1210.4" y="68" font-family="Liberation Sans" font-size="13.6" textLength="120.5" lengthAdjust="spacingAndGlyphs" fill="#000" xml:space="preserve" >Luminous Intensity</text>
<text x="1207" y="79.3" font-family="Liberation Sans" font-size="12.2" textLength="40" lengthAdjust="spacingAndGlyphs" fill="#000" xml:space="preserve" >Average</text>
<text x="1264.3" y="79.3" font-family="Liberation Sans" font-size="12.2" textLength="62" lengthAdjust="spacingAndGlyphs" fill="#000" xml:space="preserve" >Error Margin</text>
<rect x="1200" y="84" width="48" height="20" fill="#fff" />
<rect x="1200" y="84" width="48" height="1" fill="#a0a0a0" />
<rect x="1200" y="84" width="1" height="20" fill="#a0a0a0" />
<rect x="1201" y="85" width="46" height="1" fill="#696969" />
<rect x="1201" y="85" width="1" height="18" fill="#696969" />
<rect x="1200" y="103" width="48" height="1" fill="#ffffff" />
<rect x="1247" y="84" width="1" height="20" fill="#ffffff" />
<rect x="1201" y="102" width="46" height="1" fill="#e3e3e3" />
<rect x="1246" y="85" width="1" height="18" fill="#e3e3e3" />
<text x="1203.7" y="97.7" font-family="Liberation Sans" font-size="12.4" font-weight="bold" textLength="31" lengthAdjust="spacingAndGlyphs" fill="#000" xml:space="preserve" >570.0</text>
<text x="1252.7" y="99" font-family="Liberation Sans" font-size="14" font-weight="bold" textLength="20.3" lengthAdjust="spacingAndGlyphs" fill="#000" xml:space="preserve" >+/-</text>
<rect x="1279" y="84" width="42" height="20" fill="#fff" />
<rect x="1279" y="84" width="42" height="1" fill="#a0a0a0" />
<rect x="1279" y="84" width="1" height="20" fill="#a0a0a0" />
<rect x="1280" y="85" width="40" height="1" fill="#696969" />
<rect x="1280" y="85" width="1" height="18" fill="#696969" />
<rect x="1279" y="103" width="42" height="1" fill="#ffffff" />
<rect x="1320" y="84" width="1" height="20" fill="#ffffff" />
<rect x="1280" y="102" width="40" height="1" fill="#e3e3e3" />
<rect x="1319" y="85" width="1" height="18" fill="#e3e3e3" />
<text x="1282.5" y="97.7" font-family="Liberation Sans" font-size="12.4" font-weight="bold" textLength="19" lengthAdjust="spacingAndGlyphs" fill="#000" xml:space="preserve" >1.0</text>
<rect x="1200" y="107" width="48" height="20" fill="#fff" />
<rect x="1200" y="107" width="48" height="1" fill="#a0a0a0" />
<rect x="1200" y="107" width="1" height="20" fill="#a0a0a0" />
<rect x="1201" y="108" width="46" height="1" fill="#696969" />
<rect x="1201" y="108" width="1" height="18" fill="#696969" />
<rect x="1200" y="126" width="48" height="1" fill="#ffffff" />
<rect x="1247" y="107" width="1" height="20" fill="#ffffff" />
<rect x="1201" y="125" width="46" height="1" fill="#e3e3e3" />
<rect x="1246" y="108" width="1" height="18" fill="#e3e3e3" />
<text x="1203.7" y="120.7" font-family="Liberation Sans" font-size="12.4" font-weight="bold" textLength="31" lengthAdjust="spacingAndGlyphs" fill="#000" xml:space="preserve" >156.2</text>
<text x="1252.7" y="122" font-family="Liberation Sans" font-size="14" font-weight="bold" textLength="20.3" lengthAdjust="spacingAndGlyphs" fill="#000" xml:space="preserve" >+/-</text>
<rect x="1279" y="107" width="42" height="20" fill="#fff" />
<rect x="1279" y="107" width="42" height="1" fill="#a0a0a0" />
<rect x="1279" y="107" width="1" height="20" fill="#a0a0a0" />
<rect x="1280" y="108" width="40" height="1" fill="#696969" />
<rect x="1280" y="108" width="1" height="18" fill="#696969" />
<rect x="1279" y="126" width="42" height="1" fill="#ffffff" />
<rect x="1320" y="107" width="1" height="20" fill="#ffffff" />
<rect x="1280" y="125" width="40" height="1" fill="#e3e3e3" />
<rect x="1319" y="108" width="1" height="18" fill="#e3e3e3" />
<text x="1282.5" y="120.7" font-family="Liberation Sans" font-size="12.4" font-weight="bold" textLength="25" lengthAdjust="spacingAndGlyphs" fill="#000" xml:space="preserve" >34.3</text>
<rect x="1200" y="138" width="48" height="20" fill="#fff" />
<rect x="1200" y="138" width="48" height="1" fill="#a0a0a0" />
<rect x="1200" y="138" width="1" height="20" fill="#a0a0a0" />
<rect x="1201" y="139" width="46" height="1" fill="#696969" />
<rect x="1201" y="139" width="1" height="18" fill="#696969" />
<rect x="1200" y="157" width="48" height="1" fill="#ffffff" />
<rect x="1247" y="138" width="1" height="20" fill="#ffffff" />
<rect x="1201" y="156" width="46" height="1" fill="#e3e3e3" />
<rect x="1246" y="139" width="1" height="18" fill="#e3e3e3" />
<text x="1203.7" y="151.7" font-family="Liberation Sans" font-size="12.4" font-weight="bold" textLength="31" lengthAdjust="spacingAndGlyphs" fill="#000" xml:space="preserve" >726.2</text>
<text x="1252.7" y="153" font-family="Liberation Sans" font-size="14" font-weight="bold" textLength="20.3" lengthAdjust="spacingAndGlyphs" fill="#000" xml:space="preserve" >+/-</text>
<rect x="1279" y="138" width="42" height="20" fill="#fff" />
<rect x="1279" y="138" width="42" height="1" fill="#a0a0a0" />
<rect x="1279" y="138" width="1" height="20" fill="#a0a0a0" />
<rect x="1280" y="139" width="40" height="1" fill="#696969" />
<rect x="1280" y="139" width="1" height="18" fill="#696969" />
<rect x="1279" y="157" width="42" height="1" fill="#ffffff" />
<rect x="1320" y="138" width="1" height="20" fill="#ffffff" />
<rect x="1280" y="156" width="40" height="1" fill="#e3e3e3" />
<rect x="1319" y="139" width="1" height="18" fill="#e3e3e3" />
<text x="1282.5" y="151.7" font-family="Liberation Sans" font-size="12.4" font-weight="bold" textLength="25" lengthAdjust="spacingAndGlyphs" fill="#000" xml:space="preserve" >35.3</text>
<text x="1108.3" y="103.7" font-family="Liberation Sans" font-size="13.4" textLength="79.1" lengthAdjust="spacingAndGlyphs" fill="#000" xml:space="preserve" stroke="#000" stroke-width="0.45">First Event</text>
<text x="1088.7" y="127.7" font-family="Liberation Sans" font-size="13.4" textLength="100.2" lengthAdjust="spacingAndGlyphs" fill="#000" xml:space="preserve" stroke="#000" stroke-width="0.45">Second Event</text>
<text x="1120.3" y="152.7" font-family="Liberation Sans" font-size="12.4" font-weight="bold" textLength="57.7" lengthAdjust="spacingAndGlyphs" fill="#000" xml:space="preserve" >Combined</text>
<rect x="1341.5" y="48.5" width="142" height="82" fill="none" stroke="#ffffff"/>
<rect x="1340.5" y="47.5" width="142" height="82" fill="none" stroke="#a0a0a0"/>
<rect x="1346.6" y="41" width="61.4" height="12" fill="#f0f0f0" />
<text x="1348.6" y="52.7" font-family="Liberation Sans" font-size="12.4" font-weight="bold" textLength="57.4" lengthAdjust="spacingAndGlyphs" fill="#000" xml:space="preserve" >Estimation</text>
<text x="1363.7" y="69.3" font-family="Liberation Sans" font-size="13.2" font-weight="bold" textLength="70.6" lengthAdjust="spacingAndGlyphs" fill="#000" xml:space="preserve" >Magnitude</text>
<text x="1358.7" y="79.3" font-family="Liberation Sans" font-size="12.2" textLength="22.6" lengthAdjust="spacingAndGlyphs" fill="#000" xml:space="preserve" >Mag.</text>
<text x="1414.3" y="79.3" font-family="Liberation Sans" font-size="12.2" textLength="62" lengthAdjust="spacingAndGlyphs" fill="#000" xml:space="preserve" >Error Margin</text>
<rect x="1356" y="84" width="40" height="20" fill="#fff" />
<rect x="1356" y="84" width="40" height="1" fill="#a0a0a0" />
<rect x="1356" y="84" width="1" height="20" fill="#a0a0a0" />
<rect x="1357" y="85" width="38" height="1" fill="#696969" />
<rect x="1357" y="85" width="1" height="18" fill="#696969" />
<rect x="1356" y="103" width="40" height="1" fill="#ffffff" />
<rect x="1395" y="84" width="1" height="20" fill="#ffffff" />
<rect x="1357" y="102" width="38" height="1" fill="#e3e3e3" />
<rect x="1394" y="85" width="1" height="18" fill="#e3e3e3" />
<text x="1359.5" y="97.7" font-family="Liberation Sans" font-size="12.4" font-weight="bold" textLength="31.5" lengthAdjust="spacingAndGlyphs" fill="#000" xml:space="preserve" >13.16</text>
<text x="1402" y="99" font-family="Liberation Sans" font-size="14" font-weight="bold" textLength="20" lengthAdjust="spacingAndGlyphs" fill="#000" xml:space="preserve" >+/-</text>
<rect x="1428" y="84" width="40" height="20" fill="#fff" />
<rect x="1428" y="84" width="40" height="1" fill="#a0a0a0" />
<rect x="1428" y="84" width="1" height="20" fill="#a0a0a0" />
<rect x="1429" y="85" width="38" height="1" fill="#696969" />
<rect x="1429" y="85" width="1" height="18" fill="#696969" />
<rect x="1428" y="103" width="40" height="1" fill="#ffffff" />
<rect x="1467" y="84" width="1" height="20" fill="#ffffff" />
<rect x="1429" y="102" width="38" height="1" fill="#e3e3e3" />
<rect x="1466" y="85" width="1" height="18" fill="#e3e3e3" />
<text x="1431.5" y="97.7" font-family="Liberation Sans" font-size="12.4" font-weight="bold" textLength="25.5" lengthAdjust="spacingAndGlyphs" fill="#000" xml:space="preserve" >0.05</text>
<rect x="1356" y="107" width="40" height="20" fill="#fff" />
<rect x="1356" y="107" width="40" height="1" fill="#a0a0a0" />
<rect x="1356" y="107" width="1" height="20" fill="#a0a0a0" />
<rect x="1357" y="108" width="38" height="1" fill="#696969" />
<rect x="1357" y="108" width="1" height="18" fill="#696969" />
<rect x="1356" y="126" width="40" height="1" fill="#ffffff" />
<rect x="1395" y="107" width="1" height="20" fill="#ffffff" />
<rect x="1357" y="125" width="38" height="1" fill="#e3e3e3" />
<rect x="1394" y="108" width="1" height="18" fill="#e3e3e3" />
<text x="1359.5" y="120.7" font-family="Liberation Sans" font-size="12.4" font-weight="bold" textLength="31.5" lengthAdjust="spacingAndGlyphs" fill="#000" xml:space="preserve" >14.57</text>
<text x="1402" y="122" font-family="Liberation Sans" font-size="14" font-weight="bold" textLength="20" lengthAdjust="spacingAndGlyphs" fill="#000" xml:space="preserve" >+/-</text>
<rect x="1428" y="107" width="40" height="20" fill="#fff" />
<rect x="1428" y="107" width="40" height="1" fill="#a0a0a0" />
<rect x="1428" y="107" width="1" height="20" fill="#a0a0a0" />
<rect x="1429" y="108" width="38" height="1" fill="#696969" />
<rect x="1429" y="108" width="1" height="18" fill="#696969" />
<rect x="1428" y="126" width="40" height="1" fill="#ffffff" />
<rect x="1467" y="107" width="1" height="20" fill="#ffffff" />
<rect x="1429" y="125" width="38" height="1" fill="#e3e3e3" />
<rect x="1466" y="108" width="1" height="18" fill="#e3e3e3" />
<text x="1431.5" y="120.7" font-family="Liberation Sans" font-size="12.4" font-weight="bold" textLength="25.5" lengthAdjust="spacingAndGlyphs" fill="#000" xml:space="preserve" >0.22</text>
<text x="1338.7" y="141.7" font-family="Liberation Sans" font-size="12.4" font-weight="bold" textLength="149.3" lengthAdjust="spacingAndGlyphs" fill="#000" xml:space="preserve" >Assuming Pair&#x27;s Mag. as:</text>
<rect x="1354" y="149" width="40" height="19" fill="#fff" />
<rect x="1354" y="149" width="40" height="1" fill="#a0a0a0" />
<rect x="1354" y="149" width="1" height="19" fill="#a0a0a0" />
<rect x="1355" y="150" width="38" height="1" fill="#696969" />
<rect x="1355" y="150" width="1" height="17" fill="#696969" />
<rect x="1354" y="167" width="40" height="1" fill="#ffffff" />
<rect x="1393" y="149" width="1" height="19" fill="#ffffff" />
<rect x="1355" y="166" width="38" height="1" fill="#e3e3e3" />
<rect x="1392" y="150" width="1" height="17" fill="#e3e3e3" />
<text x="1357.5" y="162.5" font-family="Liberation Sans" font-size="12.4" font-weight="bold" textLength="31.5" lengthAdjust="spacingAndGlyphs" fill="#000" xml:space="preserve" >12.90</text>
<rect x="1394" y="147" width="16" height="11" fill="#f0f0f0" />
<rect x="1394" y="147" width="16" height="1" fill="#ffffff" />
<rect x="1394" y="147" width="1" height="11" fill="#ffffff" />
<rect x="1394" y="157" width="16" height="1" fill="#696969" />
<rect x="1409" y="147" width="1" height="11" fill="#696969" />
<rect x="1395" y="156" width="14" height="1" fill="#a0a0a0" />
<rect x="1408" y="148" width="1" height="9" fill="#a0a0a0" />
<path d="M1399.5 153.75 L1404.5 153.75 L1402.0 150.75z" fill="#000" shape-rendering="auto"/>
<rect x="1394" y="158" width="16" height="12" fill="#f0f0f0" />
<rect x="1394" y="158" width="16" height="1" fill="#ffffff" />
<rect x="1394" y="158" width="1" height="12" fill="#ffffff" />
<rect x="1394" y="169" width="16" height="1" fill="#696969" />
<rect x="1409" y="158" width="1" height="12" fill="#696969" />
<rect x="1395" y="168" width="14" height="1" fill="#a0a0a0" />
<rect x="1408" y="159" width="1" height="10" fill="#a0a0a0" />
<path d="M1399.5 162.75 L1404.5 162.75 L1402.0 165.75z" fill="#000" shape-rendering="auto"/>
<rect x="1410" y="147" width="16" height="11" fill="#f0f0f0" />
<rect x="1410" y="147" width="16" height="1" fill="#ffffff" />
<rect x="1410" y="147" width="1" height="11" fill="#ffffff" />
<rect x="1410" y="157" width="16" height="1" fill="#696969" />
<rect x="1425" y="147" width="1" height="11" fill="#696969" />
<rect x="1411" y="156" width="14" height="1" fill="#a0a0a0" />
<rect x="1424" y="148" width="1" height="9" fill="#a0a0a0" />
<path d="M1415.5 153.75 L1420.5 153.75 L1418.0 150.75z" fill="#000" shape-rendering="auto"/>
<rect x="1410" y="158" width="16" height="12" fill="#f0f0f0" />
<rect x="1410" y="158" width="16" height="1" fill="#ffffff" />
<rect x="1410" y="158" width="1" height="12" fill="#ffffff" />
<rect x="1410" y="169" width="16" height="1" fill="#696969" />
<rect x="1425" y="158" width="1" height="12" fill="#696969" />
<rect x="1411" y="168" width="14" height="1" fill="#a0a0a0" />
<rect x="1424" y="159" width="1" height="10" fill="#a0a0a0" />
<path d="M1415.5 162.75 L1420.5 162.75 L1418.0 165.75z" fill="#000" shape-rendering="auto"/>
<rect x="1426" y="147" width="16" height="11" fill="#f0f0f0" />
<rect x="1426" y="147" width="16" height="1" fill="#ffffff" />
<rect x="1426" y="147" width="1" height="11" fill="#ffffff" />
<rect x="1426" y="157" width="16" height="1" fill="#696969" />
<rect x="1441" y="147" width="1" height="11" fill="#696969" />
<rect x="1427" y="156" width="14" height="1" fill="#a0a0a0" />
<rect x="1440" y="148" width="1" height="9" fill="#a0a0a0" />
<path d="M1431.5 153.75 L1436.5 153.75 L1434.0 150.75z" fill="#000" shape-rendering="auto"/>
<rect x="1426" y="158" width="16" height="12" fill="#f0f0f0" />
<rect x="1426" y="158" width="16" height="1" fill="#ffffff" />
<rect x="1426" y="158" width="1" height="12" fill="#ffffff" />
<rect x="1426" y="169" width="16" height="1" fill="#696969" />
<rect x="1441" y="158" width="1" height="12" fill="#696969" />
<rect x="1427" y="168" width="14" height="1" fill="#a0a0a0" />
<rect x="1440" y="159" width="1" height="10" fill="#a0a0a0" />
<path d="M1431.5 162.75 L1436.5 162.75 L1434.0 165.75z" fill="#000" shape-rendering="auto"/>
<rect x="1048" y="172" width="225" height="1" fill="#c4c4c4" />
<rect x="1048" y="173" width="225" height="1" fill="#62b0ee" />
<rect x="1048" y="174" width="225" height="1" fill="#ffffff" />
<rect x="1042.5" y="186.5" width="238" height="113" fill="none" stroke="#ffffff"/>
<rect x="1041.5" y="185.5" width="238" height="113" fill="none" stroke="#a0a0a0"/>
<rect x="1046.7" y="179" width="173.6" height="12" fill="#f0f0f0" />
<text x="1048.7" y="190.5" font-family="Liberation Sans" font-size="12.2" textLength="169.6" lengthAdjust="spacingAndGlyphs" fill="#000" xml:space="preserve" >Select the BaseTime for Event Time</text>
<text x="1060.3" y="211" font-family="Liberation Sans" font-size="12.2" textLength="129" lengthAdjust="spacingAndGlyphs" fill="#000" xml:space="preserve" >Selected frame (Base) : No.</text>
<rect x="1196" y="195" width="78" height="20" fill="#fff" />
<rect x="1196" y="195" width="78" height="1" fill="#a0a0a0" />
<rect x="1196" y="195" width="1" height="20" fill="#a0a0a0" />
<rect x="1197" y="196" width="76" height="1" fill="#696969" />
<rect x="1197" y="196" width="1" height="18" fill="#696969" />
<rect x="1196" y="214" width="78" height="1" fill="#ffffff" />
<rect x="1273" y="195" width="1" height="20" fill="#ffffff" />
<rect x="1197" y="213" width="76" height="1" fill="#e3e3e3" />
<rect x="1272" y="196" width="1" height="18" fill="#e3e3e3" />
<circle cx="1062.7" cy="223.7" r="5.5" fill="#fff" stroke="#e3e3e3" stroke-width="1" shape-rendering="auto"/>
<path d="M1058.5 227.9 A6 6 0 0 1 1066.9 219.5" fill="none" stroke="#a0a0a0" stroke-width="1" shape-rendering="auto"/>
<path d="M1059.2 227.2 A5 5 0 0 1 1066.2 220.2" fill="none" stroke="#696969" stroke-width="1" shape-rendering="auto"/>
<path d="M1058.5 227.9 A6 6 0 0 0 1066.9 219.5" fill="none" stroke="#ffffff" stroke-width="1" shape-rendering="auto"/>
<circle cx="1062.7" cy="223.7" r="2" fill="#000" shape-rendering="auto"/>
<text x="1074.3" y="227.7" font-family="Liberation Sans" font-size="12.2" textLength="41" lengthAdjust="spacingAndGlyphs" fill="#000" xml:space="preserve" >First field</text>
<circle cx="1150.3" cy="223.7" r="5.5" fill="#fff" stroke="#e3e3e3" stroke-width="1" shape-rendering="auto"/>
<path d="M1146.1 227.9 A6 6 0 0 1 1154.5 219.5" fill="none" stroke="#a0a0a0" stroke-width="1" shape-rendering="auto"/>
<path d="M1146.8 227.2 A5 5 0 0 1 1153.8 220.2" fill="none" stroke="#696969" stroke-width="1" shape-rendering="auto"/>
<path d="M1146.1 227.9 A6 6 0 0 0 1154.5 219.5" fill="none" stroke="#ffffff" stroke-width="1" shape-rendering="auto"/>
<text x="1162" y="227.7" font-family="Liberation Sans" font-size="12.2" textLength="59.3" lengthAdjust="spacingAndGlyphs" fill="#000" xml:space="preserve" >Second field</text>
<text x="1248.7" y="227.7" font-family="Liberation Sans" font-size="12.2" textLength="28.3" lengthAdjust="spacingAndGlyphs" fill="#000" xml:space="preserve" >Graph</text>
<rect x="1056" y="235" width="19" height="20" fill="#fff" />
<rect x="1056" y="235" width="19" height="1" fill="#a0a0a0" />
<rect x="1056" y="235" width="1" height="20" fill="#a0a0a0" />
<rect x="1057" y="236" width="17" height="1" fill="#696969" />
<rect x="1057" y="236" width="1" height="18" fill="#696969" />
<rect x="1056" y="254" width="19" height="1" fill="#ffffff" />
<rect x="1074" y="235" width="1" height="20" fill="#ffffff" />
<rect x="1057" y="253" width="17" height="1" fill="#e3e3e3" />
<rect x="1073" y="236" width="1" height="18" fill="#e3e3e3" />
<text x="1059.5" y="249" font-family="Liberation Sans" font-size="12.2" textLength="11" lengthAdjust="spacingAndGlyphs" fill="#000" xml:space="preserve" >11</text>
<rect x="1076" y="235" width="19" height="20" fill="#fff" />
<rect x="1076" y="235" width="19" height="1" fill="#a0a0a0" />
<rect x="1076" y="235" width="1" height="20" fill="#a0a0a0" />
<rect x="1077" y="236" width="17" height="1" fill="#696969" />
<rect x="1077" y="236" width="1" height="18" fill="#696969" />
<rect x="1076" y="254" width="19" height="1" fill="#ffffff" />
<rect x="1094" y="235" width="1" height="20" fill="#ffffff" />
<rect x="1077" y="253" width="17" height="1" fill="#e3e3e3" />
<rect x="1093" y="236" width="1" height="18" fill="#e3e3e3" />
<text x="1079.5" y="249" font-family="Liberation Sans" font-size="12.2" textLength="12" lengthAdjust="spacingAndGlyphs" fill="#000" xml:space="preserve" >35</text>
<rect x="1097" y="235" width="46" height="20" fill="#fff" />
<rect x="1097" y="235" width="46" height="1" fill="#a0a0a0" />
<rect x="1097" y="235" width="1" height="20" fill="#a0a0a0" />
<rect x="1098" y="236" width="44" height="1" fill="#696969" />
<rect x="1098" y="236" width="1" height="18" fill="#696969" />
<rect x="1097" y="254" width="46" height="1" fill="#ffffff" />
<rect x="1142" y="235" width="1" height="20" fill="#ffffff" />
<rect x="1098" y="253" width="44" height="1" fill="#e3e3e3" />
<rect x="1141" y="236" width="1" height="18" fill="#e3e3e3" />
<text x="1100.5" y="249" font-family="Liberation Sans" font-size="12.2" textLength="39" lengthAdjust="spacingAndGlyphs" fill="#000" xml:space="preserve" >43.9624</text>
<rect x="1160" y="235" width="19" height="20" fill="#fff" />
<rect x="1160" y="235" width="19" height="1" fill="#a0a0a0" />
<rect x="1160" y="235" width="1" height="20" fill="#a0a0a0" />
<rect x="1161" y="236" width="17" height="1" fill="#696969" />
<rect x="1161" y="236" width="1" height="18" fill="#696969" />
<rect x="1160" y="254" width="19" height="1" fill="#ffffff" />
<rect x="1178" y="235" width="1" height="20" fill="#ffffff" />
<rect x="1161" y="253" width="17" height="1" fill="#e3e3e3" />
<rect x="1177" y="236" width="1" height="18" fill="#e3e3e3" />
<text x="1163.5" y="249" font-family="Liberation Sans" font-size="12.2" textLength="11" lengthAdjust="spacingAndGlyphs" fill="#000" xml:space="preserve" >11</text>
<rect x="1180" y="235" width="19" height="20" fill="#fff" />
<rect x="1180" y="235" width="19" height="1" fill="#a0a0a0" />
<rect x="1180" y="235" width="1" height="20" fill="#a0a0a0" />
<rect x="1181" y="236" width="17" height="1" fill="#696969" />
<rect x="1181" y="236" width="1" height="18" fill="#696969" />
<rect x="1180" y="254" width="19" height="1" fill="#ffffff" />
<rect x="1198" y="235" width="1" height="20" fill="#ffffff" />
<rect x="1181" y="253" width="17" height="1" fill="#e3e3e3" />
<rect x="1197" y="236" width="1" height="18" fill="#e3e3e3" />
<text x="1183.5" y="249" font-family="Liberation Sans" font-size="12.2" textLength="12" lengthAdjust="spacingAndGlyphs" fill="#000" xml:space="preserve" >35</text>
<rect x="1201" y="235" width="46" height="20" fill="#fff" />
<rect x="1201" y="235" width="46" height="1" fill="#a0a0a0" />
<rect x="1201" y="235" width="1" height="20" fill="#a0a0a0" />
<rect x="1202" y="236" width="44" height="1" fill="#696969" />
<rect x="1202" y="236" width="1" height="18" fill="#696969" />
<rect x="1201" y="254" width="46" height="1" fill="#ffffff" />
<rect x="1246" y="235" width="1" height="20" fill="#ffffff" />
<rect x="1202" y="253" width="44" height="1" fill="#e3e3e3" />
<rect x="1245" y="236" width="1" height="18" fill="#e3e3e3" />
<text x="1204.5" y="249" font-family="Liberation Sans" font-size="12.2" textLength="39" lengthAdjust="spacingAndGlyphs" fill="#000" xml:space="preserve" >44.1259</text>
<rect x="1256" y="232" width="17" height="21" fill="#f0f0f0" />
<rect x="1256" y="232" width="17" height="1" fill="#ffffff" />
<rect x="1256" y="232" width="1" height="21" fill="#ffffff" />
<rect x="1256" y="252" width="17" height="1" fill="#696969" />
<rect x="1272" y="232" width="1" height="21" fill="#696969" />
<rect x="1257" y="251" width="15" height="1" fill="#a0a0a0" />
<rect x="1271" y="233" width="1" height="19" fill="#a0a0a0" />
<path d="M1259.5 245.0 L1269.5 245.0 L1264.5 239.5z" fill="#000" shape-rendering="auto"/>
<rect x="1256" y="257" width="17" height="21" fill="#f0f0f0" />
<rect x="1256" y="257" width="17" height="1" fill="#ffffff" />
<rect x="1256" y="257" width="1" height="21" fill="#ffffff" />
<rect x="1256" y="277" width="17" height="1" fill="#696969" />
<rect x="1272" y="257" width="1" height="21" fill="#696969" />
<rect x="1257" y="276" width="15" height="1" fill="#a0a0a0" />
<rect x="1271" y="258" width="1" height="19" fill="#a0a0a0" />
<path d="M1259.5 265.0 L1269.5 265.0 L1264.5 270.5z" fill="#000" shape-rendering="auto"/>
<rect x="1048" y="261" width="202" height="15" fill="#f0f0f0" />
<rect x="1048" y="261" width="202" height="1" fill="#ffffff" />
<rect x="1048" y="261" width="1" height="15" fill="#ffffff" />
<rect x="1048" y="275" width="202" height="1" fill="#696969" />
<rect x="1249" y="261" width="1" height="15" fill="#696969" />
<rect x="1049" y="274" width="200" height="1" fill="#a0a0a0" />
<rect x="1248" y="262" width="1" height="13" fill="#a0a0a0" />
<text x="1058" y="272.5" font-family="Liberation Sans" font-size="12.2" textLength="181" lengthAdjust="spacingAndGlyphs" fill="#000" xml:space="preserve" >Apply the edit time and Re-open graph</text>
<rect x="1048" y="279" width="202" height="15" fill="#f0f0f0" />
<rect x="1048" y="279" width="202" height="1" fill="#ffffff" />
<rect x="1048" y="279" width="1" height="15" fill="#ffffff" />
<rect x="1048" y="293" width="202" height="1" fill="#696969" />
<rect x="1249" y="279" width="1" height="15" fill="#696969" />
<rect x="1049" y="292" width="200" height="1" fill="#a0a0a0" />
<rect x="1248" y="280" width="1" height="13" fill="#a0a0a0" />
<text x="1054.5" y="290.5" font-family="Liberation Sans" font-size="12.2" textLength="187.5" lengthAdjust="spacingAndGlyphs" fill="#000" xml:space="preserve" >Re-read  Time Stamp from current frame</text>
<text x="1252.7" y="289.3" font-family="Liberation Sans" font-size="12.2" textLength="22.6" lengthAdjust="spacingAndGlyphs" fill="#000" xml:space="preserve" >Time</text>
<rect x="1296" y="176" width="201" height="20" fill="#f0f0f0" />
<rect x="1296" y="176" width="201" height="1" fill="#ffffff" />
<rect x="1296" y="176" width="1" height="20" fill="#ffffff" />
<rect x="1296" y="195" width="201" height="1" fill="#696969" />
<rect x="1496" y="176" width="1" height="20" fill="#696969" />
<rect x="1297" y="194" width="199" height="1" fill="#a0a0a0" />
<rect x="1495" y="177" width="1" height="18" fill="#a0a0a0" />
<text x="1307.2" y="189.9" font-family="Liberation Sans" font-size="12.4" font-weight="bold" textLength="177" lengthAdjust="spacingAndGlyphs" fill="#000" xml:space="preserve" >Add doublestar result to Report</text>
<rect x="1287" y="197" width="209" height="1" fill="#7eb4ea" />
<rect x="1287" y="198" width="209" height="1" fill="#ffffff" />
<text x="1288" y="212.3" font-family="Liberation Sans" font-size="12.2" textLength="48" lengthAdjust="spacingAndGlyphs" fill="#000" xml:space="preserve" >Integrated</text>
<text x="1288" y="224.3" font-family="Liberation Sans" font-size="12.2" textLength="29" lengthAdjust="spacingAndGlyphs" fill="#000" xml:space="preserve" >frames</text>
<rect x="1344" y="209" width="32" height="19" fill="#fff" />
<rect x="1344" y="209" width="32" height="1" fill="#a0a0a0" />
<rect x="1344" y="209" width="1" height="19" fill="#a0a0a0" />
<rect x="1345" y="210" width="30" height="1" fill="#696969" />
<rect x="1345" y="210" width="1" height="17" fill="#696969" />
<rect x="1344" y="227" width="32" height="1" fill="#ffffff" />
<rect x="1375" y="209" width="1" height="19" fill="#ffffff" />
<rect x="1345" y="226" width="30" height="1" fill="#e3e3e3" />
<rect x="1374" y="210" width="1" height="17" fill="#e3e3e3" />
<text x="1347.5" y="223" font-family="Liberation Sans" font-size="12.2" textLength="5.5" lengthAdjust="spacingAndGlyphs" fill="#000" xml:space="preserve" >0</text>
<rect x="1376" y="209" width="16" height="11" fill="#f0f0f0" />
<rect x="1376" y="209" width="16" height="1" fill="#ffffff" />
<rect x="1376" y="209" width="1" height="11" fill="#ffffff" />
<rect x="1376" y="219" width="16" height="1" fill="#696969" />
<rect x="1391" y="209" width="1" height="11" fill="#696969" />
<rect x="1377" y="218" width="14" height="1" fill="#a0a0a0" />
<rect x="1390" y="210" width="1" height="9" fill="#a0a0a0" />
<path d="M1381.5 215.75 L1386.5 215.75 L1384.0 212.75z" fill="#000" shape-rendering="auto"/>
<rect x="1376" y="221" width="16" height="12" fill="#f0f0f0" />
<rect x="1376" y="221" width="16" height="1" fill="#ffffff" />
<rect x="1376" y="221" width="1" height="12" fill="#ffffff" />
<rect x="1376" y="232" width="16" height="1" fill="#696969" />
<rect x="1391" y="221" width="1" height="12" fill="#696969" />
<rect x="1377" y="231" width="14" height="1" fill="#a0a0a0" />
<rect x="1390" y="222" width="1" height="10" fill="#a0a0a0" />
<path d="M1381.5 225.75 L1386.5 225.75 L1384.0 228.75z" fill="#000" shape-rendering="auto"/>
<text x="1400.3" y="220" font-family="Liberation Sans" font-size="12.2" textLength="25.7" lengthAdjust="spacingAndGlyphs" fill="#000" xml:space="preserve" >Digits</text>
<rect x="1433" y="209" width="23" height="19" fill="#fff" />
<rect x="1433" y="209" width="23" height="1" fill="#a0a0a0" />
<rect x="1433" y="209" width="1" height="19" fill="#a0a0a0" />
<rect x="1434" y="210" width="21" height="1" fill="#696969" />
<rect x="1434" y="210" width="1" height="17" fill="#696969" />
<rect x="1433" y="227" width="23" height="1" fill="#ffffff" />
<rect x="1455" y="209" width="1" height="19" fill="#ffffff" />
<rect x="1434" y="226" width="21" height="1" fill="#e3e3e3" />
<rect x="1454" y="210" width="1" height="17" fill="#e3e3e3" />
<text x="1436.5" y="223" font-family="Liberation Sans" font-size="12.2" textLength="5.5" lengthAdjust="spacingAndGlyphs" fill="#000" xml:space="preserve" >3</text>
<rect x="1456" y="209" width="16" height="11" fill="#f0f0f0" />
<rect x="1456" y="209" width="16" height="1" fill="#ffffff" />
<rect x="1456" y="209" width="1" height="11" fill="#ffffff" />
<rect x="1456" y="219" width="16" height="1" fill="#696969" />
<rect x="1471" y="209" width="1" height="11" fill="#696969" />
<rect x="1457" y="218" width="14" height="1" fill="#a0a0a0" />
<rect x="1470" y="210" width="1" height="9" fill="#a0a0a0" />
<path d="M1461.5 215.75 L1466.5 215.75 L1464.0 212.75z" fill="#000" shape-rendering="auto"/>
<rect x="1456" y="221" width="16" height="12" fill="#f0f0f0" />
<rect x="1456" y="221" width="16" height="1" fill="#ffffff" />
<rect x="1456" y="221" width="1" height="12" fill="#ffffff" />
<rect x="1456" y="232" width="16" height="1" fill="#696969" />
<rect x="1471" y="221" width="1" height="12" fill="#696969" />
<rect x="1457" y="231" width="14" height="1" fill="#a0a0a0" />
<rect x="1470" y="222" width="1" height="10" fill="#a0a0a0" />
<path d="M1461.5 225.75 L1466.5 225.75 L1464.0 228.75z" fill="#000" shape-rendering="auto"/>
<rect x="1288" y="240" width="12" height="12" fill="#fff" />
<rect x="1288" y="240" width="12" height="1" fill="#a0a0a0" />
<rect x="1288" y="240" width="1" height="12" fill="#a0a0a0" />
<rect x="1289" y="241" width="10" height="1" fill="#696969" />
<rect x="1289" y="241" width="1" height="10" fill="#696969" />
<rect x="1288" y="251" width="12" height="1" fill="#ffffff" />
<rect x="1299" y="240" width="1" height="12" fill="#ffffff" />
<rect x="1289" y="250" width="10" height="1" fill="#e3e3e3" />
<rect x="1298" y="241" width="1" height="10" fill="#e3e3e3" />
<text x="1306.7" y="249.9" font-family="Liberation Sans" font-size="12.2" textLength="176.7" lengthAdjust="spacingAndGlyphs" fill="#000" xml:space="preserve" >Consider step hight for time estimation</text>
<rect x="1289.5" y="263.5" width="215" height="45" fill="none" stroke="#ffffff"/>
<rect x="1288.5" y="262.5" width="215" height="45" fill="none" stroke="#a0a0a0"/>
<rect x="1293.8" y="256" width="148.6" height="12" fill="#f0f0f0" />
<text x="1295.8" y="267.5" font-family="Liberation Sans" font-size="12.4" font-weight="bold" textLength="144.6" lengthAdjust="spacingAndGlyphs" fill="#000" xml:space="preserve" >Calculation for event time</text>
<circle cx="1303.5" cy="280.7" r="5.5" fill="#fff" stroke="#e3e3e3" stroke-width="1" shape-rendering="auto"/>
<path d="M1299.3 284.9 A6 6 0 0 1 1307.7 276.5" fill="none" stroke="#a0a0a0" stroke-width="1" shape-rendering="auto"/>
<path d="M1300 284.2 A5 5 0 0 1 1307 277.2" fill="none" stroke="#696969" stroke-width="1" shape-rendering="auto"/>
<path d="M1299.3 284.9 A6 6 0 0 0 1307.7 276.5" fill="none" stroke="#ffffff" stroke-width="1" shape-rendering="auto"/>
<text x="1315.5" y="284.8" font-family="Liberation Sans" font-size="12.2" textLength="17.7" lengthAdjust="spacingAndGlyphs" fill="#000" xml:space="preserve" >OFF</text>
<circle cx="1349.5" cy="280.7" r="5.5" fill="#fff" stroke="#e3e3e3" stroke-width="1" shape-rendering="auto"/>
<path d="M1345.3 284.9 A6 6 0 0 1 1353.7 276.5" fill="none" stroke="#a0a0a0" stroke-width="1" shape-rendering="auto"/>
<path d="M1346 284.2 A5 5 0 0 1 1353 277.2" fill="none" stroke="#696969" stroke-width="1" shape-rendering="auto"/>
<path d="M1345.3 284.9 A6 6 0 0 0 1353.7 276.5" fill="none" stroke="#ffffff" stroke-width="1" shape-rendering="auto"/>
<text x="1361.4" y="284.8" font-family="Liberation Sans" font-size="12.2" textLength="50.1" lengthAdjust="spacingAndGlyphs" fill="#000" xml:space="preserve" >WAT120N</text>
<circle cx="1429.7" cy="280.7" r="5.5" fill="#fff" stroke="#e3e3e3" stroke-width="1" shape-rendering="auto"/>
<path d="M1425.5 284.9 A6 6 0 0 1 1433.9 276.5" fill="none" stroke="#a0a0a0" stroke-width="1" shape-rendering="auto"/>
<path d="M1426.2 284.2 A5 5 0 0 1 1433.2 277.2" fill="none" stroke="#696969" stroke-width="1" shape-rendering="auto"/>
<path d="M1425.5 284.9 A6 6 0 0 0 1433.9 276.5" fill="none" stroke="#ffffff" stroke-width="1" shape-rendering="auto"/>
<text x="1441.5" y="284.8" font-family="Liberation Sans" font-size="12.2" textLength="54.9" lengthAdjust="spacingAndGlyphs" fill="#000" xml:space="preserve" >WAT910H&gt;</text>
<circle cx="1348.7" cy="296.7" r="5.5" fill="#fff" stroke="#e3e3e3" stroke-width="1" shape-rendering="auto"/>
<path d="M1344.5 300.9 A6 6 0 0 1 1352.9 292.5" fill="none" stroke="#a0a0a0" stroke-width="1" shape-rendering="auto"/>
<path d="M1345.2 300.2 A5 5 0 0 1 1352.2 293.2" fill="none" stroke="#696969" stroke-width="1" shape-rendering="auto"/>
<path d="M1344.5 300.9 A6 6 0 0 0 1352.9 292.5" fill="none" stroke="#ffffff" stroke-width="1" shape-rendering="auto"/>
<circle cx="1348.7" cy="296.7" r="2" fill="#000" shape-rendering="auto"/>
<text x="1361.3" y="300.3" font-family="Liberation Sans" font-size="12.4" font-weight="bold" textLength="111.4" lengthAdjust="spacingAndGlyphs" fill="#000" xml:space="preserve" >CMOS or WAT100N</text>
<rect x="1042" y="315" width="462" height="47" fill="#fff" />
<rect x="1042" y="315" width="462" height="1" fill="#a0a0a0" />
<rect x="1042" y="315" width="1" height="47" fill="#a0a0a0" />
<rect x="1043" y="316" width="460" height="1" fill="#696969" />
<rect x="1043" y="316" width="1" height="45" fill="#696969" />
<rect x="1042" y="361" width="462" height="1" fill="#ffffff" />
<rect x="1503" y="315" width="1" height="47" fill="#ffffff" />
<rect x="1043" y="360" width="460" height="1" fill="#e3e3e3" />
<rect x="1502" y="316" width="1" height="45" fill="#e3e3e3" />
<rect x="1042" y="361" width="462" height="1" fill="#f0f0f0" />
<rect x="1440" y="347" width="64" height="23" fill="#f0f0f0" />
<rect x="1440" y="347" width="64" height="1" fill="#ffffff" />
<rect x="1440" y="347" width="1" height="23" fill="#ffffff" />
<rect x="1440" y="369" width="64" height="1" fill="#696969" />
<rect x="1503" y="347" width="1" height="23" fill="#696969" />
<rect x="1441" y="368" width="62" height="1" fill="#a0a0a0" />
<rect x="1502" y="348" width="1" height="21" fill="#a0a0a0" />
<text x="1447.7" y="362" font-family="Liberation Sans" font-size="12.2" textLength="48.6" lengthAdjust="spacingAndGlyphs" fill="#000" xml:space="preserve" >-&gt; Clip brd.</text>
<rect x="1043" y="377" width="461" height="256" fill="#fff" />
<rect x="1043" y="377" width="461" height="1" fill="#a0a0a0" />
<rect x="1043" y="377" width="1" height="256" fill="#a0a0a0" />
<rect x="1044" y="378" width="459" height="1" fill="#696969" />
<rect x="1044" y="378" width="1" height="254" fill="#696969" />
<rect x="1043" y="632" width="461" height="1" fill="#ffffff" />
<rect x="1503" y="377" width="1" height="256" fill="#ffffff" />
<rect x="1044" y="631" width="459" height="1" fill="#e3e3e3" />
<rect x="1502" y="378" width="1" height="254" fill="#e3e3e3" />
<rect x="1487" y="379" width="15" height="238" fill="#f0f0f0" />
<rect x="1045" y="617" width="457" height="14" fill="#f0f0f0" />
<path d="M1490.5 389.75 L1499.5 389.75 L1495 384.75z" fill="#a8a8a8" shape-rendering="auto"/>
<path d="M1490.5 605.25 L1499.5 605.25 L1495 610.25z" fill="#a8a8a8" shape-rendering="auto"/>
<rect x="1061" y="624" width="320" height="2" fill="#8c8c8c" />
<clipPath id="clipMemo"><rect x="1045" y="379" width="439" height="238"/></clipPath><g clip-path="url(#clipMemo)">
<text x="1049.3" y="391" font-family="Liberation Mono" font-size="14.2" textLength="440" lengthAdjust="spacingAndGlyphs" fill="#000" xml:space="preserve" >2025-8-18 / (3885)Bogorodskij / UCAC4 362-079428 V=12.5</text>
<text x="1049.3" y="421" font-family="Liberation Mono" font-size="14.2" textLength="384" lengthAdjust="spacingAndGlyphs" fill="#000" xml:space="preserve" >Event Time : 11h35m43.868s  +/- 0.133s  S/N=3.58</text>
<text x="1049.3" y="436" font-family="Liberation Mono" font-size="14.2" textLength="264" lengthAdjust="spacingAndGlyphs" fill="#000" xml:space="preserve" >Mag Drop (predicted):  4.7   Mag.</text>
<text x="1049.3" y="451" font-family="Liberation Mono" font-size="14.2" textLength="264" lengthAdjust="spacingAndGlyphs" fill="#000" xml:space="preserve" >Mag Drop (measured ):  2.04  Mag.</text>
<text x="1049.3" y="481" font-family="Liberation Mono" font-size="14.2" textLength="328" lengthAdjust="spacingAndGlyphs" fill="#000" xml:space="preserve" >-Statistical analysis of Light Intensity-</text>
<text x="1049.3" y="496" font-family="Liberation Mono" font-size="14.2" textLength="320" lengthAdjust="spacingAndGlyphs" fill="#000" xml:space="preserve" >Light intensity    Average   Stdv      n</text>
<text x="1049.3" y="511" font-family="Liberation Mono" font-size="14.2" textLength="328" lengthAdjust="spacingAndGlyphs" fill="#000" xml:space="preserve" >  Combined  :       857.6    203.1     35</text>
<text x="1049.3" y="526" font-family="Liberation Mono" font-size="14.2" textLength="328" lengthAdjust="spacingAndGlyphs" fill="#000" xml:space="preserve" >  Background:       131.4      1.0      1</text>
<text x="1049.3" y="541" font-family="Liberation Mono" font-size="14.2" textLength="328" lengthAdjust="spacingAndGlyphs" fill="#000" xml:space="preserve" >Noise Level (N/S)  Upper    Lower   (S/N)</text>
<text x="1049.3" y="556" font-family="Liberation Mono" font-size="14.2" textLength="272" lengthAdjust="spacingAndGlyphs" fill="#000" xml:space="preserve" >  First event:     0.0000   0.0018</text>
<text x="1049.3" y="571" font-family="Liberation Mono" font-size="14.2" textLength="328" lengthAdjust="spacingAndGlyphs" fill="#000" xml:space="preserve" >  Total event:     0.2796   0.0014   3.58</text>
<text x="1049.3" y="586" font-family="Liberation Mono" font-size="14.2" textLength="56" lengthAdjust="spacingAndGlyphs" fill="#000" xml:space="preserve" >1.00544</text>
</g>
<rect x="1489" y="626" width="17" height="146" fill="url(#dith)" />
<rect x="1489" y="626" width="17" height="16" fill="#f0f0f0" />
<rect x="1489" y="626" width="17" height="1" fill="#ffffff" />
<rect x="1489" y="626" width="1" height="16" fill="#ffffff" />
<rect x="1489" y="641" width="17" height="1" fill="#696969" />
<rect x="1505" y="626" width="1" height="16" fill="#696969" />
<rect x="1490" y="640" width="15" height="1" fill="#a0a0a0" />
<rect x="1504" y="627" width="1" height="14" fill="#a0a0a0" />
<path d="M1494.0 635.75 L1501.0 635.75 L1497.5 631.75z" fill="#000" shape-rendering="auto"/>
<rect x="1489" y="654" width="17" height="17" fill="#f0f0f0" />
<rect x="1489" y="654" width="17" height="1" fill="#ffffff" />
<rect x="1489" y="654" width="1" height="17" fill="#ffffff" />
<rect x="1489" y="670" width="17" height="1" fill="#696969" />
<rect x="1505" y="654" width="1" height="17" fill="#696969" />
<rect x="1490" y="669" width="15" height="1" fill="#a0a0a0" />
<rect x="1504" y="655" width="1" height="15" fill="#a0a0a0" />
<rect x="1489" y="755" width="17" height="16" fill="#f0f0f0" />
<rect x="1489" y="755" width="17" height="1" fill="#ffffff" />
<rect x="1489" y="755" width="1" height="16" fill="#ffffff" />
<rect x="1489" y="770" width="17" height="1" fill="#696969" />
<rect x="1505" y="755" width="1" height="16" fill="#696969" />
<rect x="1490" y="769" width="15" height="1" fill="#a0a0a0" />
<rect x="1504" y="756" width="1" height="14" fill="#a0a0a0" />
<path d="M1494.0 761.25 L1501.0 761.25 L1497.5 765.25z" fill="#000" shape-rendering="auto"/>
<rect x="1043.5" y="649.5" width="175" height="65" fill="none" stroke="#ffffff"/>
<rect x="1042.5" y="648.5" width="175" height="65" fill="none" stroke="#a0a0a0"/>
<rect x="1049" y="642" width="86.7" height="12" fill="#f0f0f0" />
<text x="1051" y="652.7" font-family="Liberation Sans" font-size="12.2" textLength="82.7" lengthAdjust="spacingAndGlyphs" fill="#000" xml:space="preserve" >Text out to Graph</text>
<circle cx="1056.3" cy="663.7" r="5.5" fill="#fff" stroke="#e3e3e3" stroke-width="1" shape-rendering="auto"/>
<path d="M1052.1 667.9 A6 6 0 0 1 1060.5 659.5" fill="none" stroke="#a0a0a0" stroke-width="1" shape-rendering="auto"/>
<path d="M1052.8 667.2 A5 5 0 0 1 1059.8 660.2" fill="none" stroke="#696969" stroke-width="1" shape-rendering="auto"/>
<path d="M1052.1 667.9 A6 6 0 0 0 1060.5 659.5" fill="none" stroke="#ffffff" stroke-width="1" shape-rendering="auto"/>
<text x="1068.7" y="668.7" font-family="Liberation Sans" font-size="12.2" textLength="19.3" lengthAdjust="spacingAndGlyphs" fill="#000" xml:space="preserve" >OFF</text>
<circle cx="1056.3" cy="682" r="5.5" fill="#fff" stroke="#e3e3e3" stroke-width="1" shape-rendering="auto"/>
<path d="M1052.1 686.2 A6 6 0 0 1 1060.5 677.8" fill="none" stroke="#a0a0a0" stroke-width="1" shape-rendering="auto"/>
<path d="M1052.8 685.5 A5 5 0 0 1 1059.8 678.5" fill="none" stroke="#696969" stroke-width="1" shape-rendering="auto"/>
<path d="M1052.1 686.2 A6 6 0 0 0 1060.5 677.8" fill="none" stroke="#ffffff" stroke-width="1" shape-rendering="auto"/>
<circle cx="1056.3" cy="682" r="2" fill="#000" shape-rendering="auto"/>
<text x="1068.7" y="686.3" font-family="Liberation Sans" font-size="12.2" textLength="131" lengthAdjust="spacingAndGlyphs" fill="#000" xml:space="preserve" >Text with transparency BKG</text>
<circle cx="1056.3" cy="699.7" r="5.5" fill="#fff" stroke="#e3e3e3" stroke-width="1" shape-rendering="auto"/>
<path d="M1052.1 703.9 A6 6 0 0 1 1060.5 695.5" fill="none" stroke="#a0a0a0" stroke-width="1" shape-rendering="auto"/>
<path d="M1052.8 703.2 A5 5 0 0 1 1059.8 696.2" fill="none" stroke="#696969" stroke-width="1" shape-rendering="auto"/>
<path d="M1052.1 703.9 A6 6 0 0 0 1060.5 695.5" fill="none" stroke="#ffffff" stroke-width="1" shape-rendering="auto"/>
<text x="1068.7" y="704.7" font-family="Liberation Sans" font-size="12.2" textLength="141.6" lengthAdjust="spacingAndGlyphs" fill="#000" xml:space="preserve" >Text with opaque background</text>
<rect x="1225.5" y="649.5" width="87" height="65" fill="none" stroke="#ffffff"/>
<rect x="1224.5" y="648.5" width="87" height="65" fill="none" stroke="#a0a0a0"/>
<rect x="1230.7" y="642" width="30.6" height="12" fill="#f0f0f0" />
<text x="1232.7" y="652.7" font-family="Liberation Sans" font-size="12.2" textLength="26.6" lengthAdjust="spacingAndGlyphs" fill="#000" xml:space="preserve" >Mode</text>
<circle cx="1238.7" cy="663.7" r="5.5" fill="#fff" stroke="#e3e3e3" stroke-width="1" shape-rendering="auto"/>
<path d="M1234.5 667.9 A6 6 0 0 1 1242.9 659.5" fill="none" stroke="#a0a0a0" stroke-width="1" shape-rendering="auto"/>
<path d="M1235.2 667.2 A5 5 0 0 1 1242.2 660.2" fill="none" stroke="#696969" stroke-width="1" shape-rendering="auto"/>
<path d="M1234.5 667.9 A6 6 0 0 0 1242.9 659.5" fill="none" stroke="#ffffff" stroke-width="1" shape-rendering="auto"/>
<circle cx="1238.7" cy="663.7" r="2" fill="#000" shape-rendering="auto"/>
<text x="1251" y="668.7" font-family="Liberation Sans" font-size="12.2" textLength="22.7" lengthAdjust="spacingAndGlyphs" fill="#000" xml:space="preserve" >Time</text>
<circle cx="1238.7" cy="682" r="5.5" fill="#fff" stroke="#e3e3e3" stroke-width="1" shape-rendering="auto"/>
<path d="M1234.5 686.2 A6 6 0 0 1 1242.9 677.8" fill="none" stroke="#a0a0a0" stroke-width="1" shape-rendering="auto"/>
<path d="M1235.2 685.5 A5 5 0 0 1 1242.2 678.5" fill="none" stroke="#696969" stroke-width="1" shape-rendering="auto"/>
<path d="M1234.5 686.2 A6 6 0 0 0 1242.9 677.8" fill="none" stroke="#ffffff" stroke-width="1" shape-rendering="auto"/>
<text x="1250.3" y="686.3" font-family="Liberation Sans" font-size="12.2" textLength="49" lengthAdjust="spacingAndGlyphs" fill="#000" xml:space="preserve" >Info. Right</text>
<circle cx="1238.7" cy="699.7" r="5.5" fill="#fff" stroke="#e3e3e3" stroke-width="1" shape-rendering="auto"/>
<path d="M1234.5 703.9 A6 6 0 0 1 1242.9 695.5" fill="none" stroke="#a0a0a0" stroke-width="1" shape-rendering="auto"/>
<path d="M1235.2 703.2 A5 5 0 0 1 1242.2 696.2" fill="none" stroke="#696969" stroke-width="1" shape-rendering="auto"/>
<path d="M1234.5 703.9 A6 6 0 0 0 1242.9 695.5" fill="none" stroke="#ffffff" stroke-width="1" shape-rendering="auto"/>
<text x="1250.3" y="704.7" font-family="Liberation Sans" font-size="12.2" textLength="41.7" lengthAdjust="spacingAndGlyphs" fill="#000" xml:space="preserve" >Info. Left</text>
<rect x="1319" y="645" width="162" height="17" fill="url(#dith)" />
<rect x="1319" y="645" width="17" height="17" fill="#f0f0f0" />
<rect x="1319" y="645" width="17" height="1" fill="#ffffff" />
<rect x="1319" y="645" width="1" height="17" fill="#ffffff" />
<rect x="1319" y="661" width="17" height="1" fill="#696969" />
<rect x="1335" y="645" width="1" height="17" fill="#696969" />
<rect x="1320" y="660" width="15" height="1" fill="#a0a0a0" />
<rect x="1334" y="646" width="1" height="15" fill="#a0a0a0" />
<path d="M1329.25 650.0 L1329.25 657.0 L1325.25 653.5z" fill="#000" shape-rendering="auto"/>
<rect x="1380" y="645" width="16" height="17" fill="#f0f0f0" />
<rect x="1380" y="645" width="16" height="1" fill="#ffffff" />
<rect x="1380" y="645" width="1" height="17" fill="#ffffff" />
<rect x="1380" y="661" width="16" height="1" fill="#696969" />
<rect x="1395" y="645" width="1" height="17" fill="#696969" />
<rect x="1381" y="660" width="14" height="1" fill="#a0a0a0" />
<rect x="1394" y="646" width="1" height="15" fill="#a0a0a0" />
<rect x="1465" y="645" width="17" height="17" fill="#f0f0f0" />
<rect x="1465" y="645" width="17" height="1" fill="#ffffff" />
<rect x="1465" y="645" width="1" height="17" fill="#ffffff" />
<rect x="1465" y="661" width="17" height="1" fill="#696969" />
<rect x="1481" y="645" width="1" height="17" fill="#696969" />
<rect x="1466" y="660" width="15" height="1" fill="#a0a0a0" />
<rect x="1480" y="646" width="1" height="15" fill="#a0a0a0" />
<path d="M1471.75 650.0 L1471.75 657.0 L1475.75 653.5z" fill="#000" shape-rendering="auto"/>
<rect x="1321.5" y="673.5" width="55" height="41" fill="none" stroke="#ffffff"/>
<rect x="1320.5" y="672.5" width="55" height="41" fill="none" stroke="#a0a0a0"/>
<rect x="1326" y="666" width="46.3" height="12" fill="#f0f0f0" />
<text x="1328" y="676.3" font-family="Liberation Sans" font-size="12.2" textLength="42.3" lengthAdjust="spacingAndGlyphs" fill="#000" xml:space="preserve" >Font size</text>
<rect x="1328" y="683" width="16" height="11" fill="#f0f0f0" />
<rect x="1328" y="683" width="16" height="1" fill="#ffffff" />
<rect x="1328" y="683" width="1" height="11" fill="#ffffff" />
<rect x="1328" y="693" width="16" height="1" fill="#696969" />
<rect x="1343" y="683" width="1" height="11" fill="#696969" />
<rect x="1329" y="692" width="14" height="1" fill="#a0a0a0" />
<rect x="1342" y="684" width="1" height="9" fill="#a0a0a0" />
<path d="M1333.5 689.75 L1338.5 689.75 L1336.0 686.75z" fill="#000" shape-rendering="auto"/>
<rect x="1328" y="695" width="16" height="11" fill="#f0f0f0" />
<rect x="1328" y="695" width="16" height="1" fill="#ffffff" />
<rect x="1328" y="695" width="1" height="11" fill="#ffffff" />
<rect x="1328" y="705" width="16" height="1" fill="#696969" />
<rect x="1343" y="695" width="1" height="11" fill="#696969" />
<rect x="1329" y="704" width="14" height="1" fill="#a0a0a0" />
<rect x="1342" y="696" width="1" height="9" fill="#a0a0a0" />
<path d="M1333.5 699.25 L1338.5 699.25 L1336.0 702.25z" fill="#000" shape-rendering="auto"/>
<rect x="1344" y="683" width="24" height="19" fill="#fff" />
<rect x="1344" y="683" width="24" height="1" fill="#a0a0a0" />
<rect x="1344" y="683" width="1" height="19" fill="#a0a0a0" />
<rect x="1345" y="684" width="22" height="1" fill="#696969" />
<rect x="1345" y="684" width="1" height="17" fill="#696969" />
<rect x="1344" y="701" width="24" height="1" fill="#ffffff" />
<rect x="1367" y="683" width="1" height="19" fill="#ffffff" />
<rect x="1345" y="700" width="22" height="1" fill="#e3e3e3" />
<rect x="1366" y="684" width="1" height="17" fill="#e3e3e3" />
<text x="1347" y="697" font-family="Liberation Sans" font-size="12.2" textLength="12" lengthAdjust="spacingAndGlyphs" fill="#000" xml:space="preserve" >10</text>
<rect x="1386" y="666" width="98" height="19" fill="#fff" />
<rect x="1386" y="666" width="98" height="1" fill="#a0a0a0" />
<rect x="1386" y="666" width="1" height="19" fill="#a0a0a0" />
<rect x="1387" y="667" width="96" height="1" fill="#696969" />
<rect x="1387" y="667" width="1" height="17" fill="#696969" />
<rect x="1386" y="684" width="98" height="1" fill="#ffffff" />
<rect x="1483" y="666" width="1" height="19" fill="#ffffff" />
<rect x="1387" y="683" width="96" height="1" fill="#e3e3e3" />
<rect x="1482" y="667" width="1" height="17" fill="#e3e3e3" />
<text x="1390" y="680" font-family="Liberation Sans" font-size="12.2" textLength="30" lengthAdjust="spacingAndGlyphs" fill="#000" xml:space="preserve" >Edit16</text>
<rect x="1386" y="690" width="98" height="19" fill="#fff" />
<rect x="1386" y="690" width="98" height="1" fill="#a0a0a0" />
<rect x="1386" y="690" width="1" height="19" fill="#a0a0a0" />
<rect x="1387" y="691" width="96" height="1" fill="#696969" />
<rect x="1387" y="691" width="1" height="17" fill="#696969" />
<rect x="1386" y="708" width="98" height="1" fill="#ffffff" />
<rect x="1483" y="690" width="1" height="19" fill="#ffffff" />
<rect x="1387" y="707" width="96" height="1" fill="#e3e3e3" />
<rect x="1482" y="691" width="1" height="17" fill="#e3e3e3" />
<text x="1390" y="704" font-family="Liberation Sans" font-size="12.2" textLength="29" lengthAdjust="spacingAndGlyphs" fill="#000" xml:space="preserve" >Edit25</text>
<rect x="1048" y="722" width="432" height="72" fill="#fff" />
<rect x="1048" y="722" width="432" height="1" fill="#a0a0a0" />
<rect x="1048" y="722" width="1" height="72" fill="#a0a0a0" />
<rect x="1049" y="723" width="430" height="1" fill="#696969" />
<rect x="1049" y="723" width="1" height="70" fill="#696969" />
<rect x="1048" y="793" width="432" height="1" fill="#ffffff" />
<rect x="1479" y="722" width="1" height="72" fill="#ffffff" />
<rect x="1049" y="792" width="430" height="1" fill="#e3e3e3" />
<rect x="1478" y="723" width="1" height="70" fill="#e3e3e3" />
<text x="1052" y="738" font-family="Liberation Sans" font-size="15.4" textLength="355.7" lengthAdjust="spacingAndGlyphs" fill="#000" xml:space="preserve" >1  11 35 43.310 +/- 0.153s,  S/N= 3.30 D   Main change</text>
<rect x="1050" y="741" width="428" height="17" fill="#0078d7" />
<text x="1052" y="754.7" font-family="Liberation Sans" font-size="15.4" textLength="355.7" lengthAdjust="spacingAndGlyphs" fill="#fff" xml:space="preserve" >2  11 35 43.868 +/- 0.133s,  S/N= 3.58 R   Main change</text>
<rect x="1072" y="802" width="192" height="25" fill="#f0f0f0" />
<rect x="1072" y="802" width="192" height="1" fill="#ffffff" />
<rect x="1072" y="802" width="1" height="25" fill="#ffffff" />
<rect x="1072" y="826" width="192" height="1" fill="#696969" />
<rect x="1263" y="802" width="1" height="25" fill="#696969" />
<rect x="1073" y="825" width="190" height="1" fill="#a0a0a0" />
<rect x="1262" y="803" width="1" height="23" fill="#a0a0a0" />
<text x="1086" y="817" font-family="Liberation Sans" font-size="12.2" textLength="165.3" lengthAdjust="spacingAndGlyphs" fill="#000" xml:space="preserve" >Miss Disappearance  (approx. time)</text>
<rect x="1272" y="802" width="185" height="25" fill="#f0f0f0" />
<rect x="1272" y="802" width="185" height="1" fill="#ffffff" />
<rect x="1272" y="802" width="1" height="25" fill="#ffffff" />
<rect x="1272" y="826" width="185" height="1" fill="#696969" />
<rect x="1456" y="802" width="1" height="25" fill="#696969" />
<rect x="1273" y="825" width="183" height="1" fill="#a0a0a0" />
<rect x="1455" y="803" width="1" height="23" fill="#a0a0a0" />
<text x="1280.3" y="817" font-family="Liberation Sans" font-size="12.2" textLength="168.4" lengthAdjust="spacingAndGlyphs" fill="#000" xml:space="preserve" >Miss  Reapppearance [approx. tine]</text>
<rect x="1048" y="842" width="112" height="20" fill="#fff" />
<rect x="1048" y="842" width="112" height="1" fill="#a0a0a0" />
<rect x="1048" y="842" width="1" height="20" fill="#a0a0a0" />
<rect x="1049" y="843" width="110" height="1" fill="#696969" />
<rect x="1049" y="843" width="1" height="18" fill="#696969" />
<rect x="1048" y="861" width="112" height="1" fill="#ffffff" />
<rect x="1159" y="842" width="1" height="20" fill="#ffffff" />
<rect x="1049" y="860" width="110" height="1" fill="#e3e3e3" />
<rect x="1158" y="843" width="1" height="18" fill="#e3e3e3" />
<text x="1051.3" y="855.3" font-family="Liberation Sans" font-size="12.2" textLength="84" lengthAdjust="spacingAndGlyphs" fill="#000" xml:space="preserve" >Main light change</text>
<rect x="1142" y="844" width="16" height="16" fill="#f0f0f0" />
<rect x="1142" y="844" width="16" height="1" fill="#ffffff" />
<rect x="1142" y="844" width="1" height="16" fill="#ffffff" />
<rect x="1142" y="859" width="16" height="1" fill="#696969" />
<rect x="1157" y="844" width="1" height="16" fill="#696969" />
<rect x="1143" y="858" width="14" height="1" fill="#a0a0a0" />
<rect x="1156" y="845" width="1" height="14" fill="#a0a0a0" />
<path d="M1146.5 850.25 L1153.5 850.25 L1150.0 854.25z" fill="#000" shape-rendering="auto"/>
<clipPath id="clipMagWin"><rect x="1040.5" y="12" width="466" height="854.5" rx="8"/></clipPath><g clip-path="url(#clipMagWin)">
<rect x="1169" y="834" width="56" height="37" fill="#f0f0f0" />
<rect x="1169" y="834" width="56" height="1" fill="#ffffff" />
<rect x="1169" y="834" width="1" height="37" fill="#ffffff" />
<rect x="1169" y="870" width="56" height="1" fill="#696969" />
<rect x="1224" y="834" width="1" height="37" fill="#696969" />
<rect x="1170" y="869" width="54" height="1" fill="#a0a0a0" />
<rect x="1223" y="835" width="1" height="35" fill="#a0a0a0" />
<text x="1175.7" y="854.6" font-family="Liberation Sans" font-size="15.5" textLength="41.1" lengthAdjust="spacingAndGlyphs" fill="#000" xml:space="preserve" >Delete</text>
<rect x="1230" y="834" width="49" height="37" fill="#f0f0f0" />
<rect x="1230" y="834" width="49" height="1" fill="#ffffff" />
<rect x="1230" y="834" width="1" height="37" fill="#ffffff" />
<rect x="1230" y="870" width="49" height="1" fill="#696969" />
<rect x="1278" y="834" width="1" height="37" fill="#696969" />
<rect x="1231" y="869" width="47" height="1" fill="#a0a0a0" />
<rect x="1277" y="835" width="1" height="35" fill="#a0a0a0" />
<text x="1242.7" y="854.6" font-family="Liberation Sans" font-size="15.5" textLength="23.4" lengthAdjust="spacingAndGlyphs" fill="#000" xml:space="preserve" >Sort</text>
<rect x="1290" y="834" width="113" height="37" fill="#303030" />
<rect x="1291" y="835" width="111" height="35" fill="#f0f0f0" />
<rect x="1291" y="835" width="111" height="1" fill="#ffffff" />
<rect x="1291" y="835" width="1" height="35" fill="#ffffff" />
<rect x="1291" y="869" width="111" height="1" fill="#696969" />
<rect x="1401" y="835" width="1" height="35" fill="#696969" />
<rect x="1292" y="868" width="109" height="1" fill="#a0a0a0" />
<rect x="1400" y="836" width="1" height="33" fill="#a0a0a0" />
<text x="1300.3" y="854.7" font-family="Liberation Sans" font-size="14.5" font-weight="bold" textLength="92.7" lengthAdjust="spacingAndGlyphs" fill="#000" xml:space="preserve" >Add to report</text>
<rect x="1294.5" y="838.5" width="104" height="25" fill="none" stroke="#000" stroke-dasharray="1 1"/>
<rect x="1416" y="834" width="89" height="37" fill="#f0f0f0" />
<rect x="1416" y="834" width="89" height="1" fill="#ffffff" />
<rect x="1416" y="834" width="1" height="37" fill="#ffffff" />
<rect x="1416" y="870" width="89" height="1" fill="#696969" />
<rect x="1504" y="834" width="1" height="37" fill="#696969" />
<rect x="1417" y="869" width="87" height="1" fill="#a0a0a0" />
<rect x="1503" y="835" width="1" height="35" fill="#a0a0a0" />
<text x="1421.3" y="854.7" font-family="Liberation Sans" font-size="12.8" font-weight="bold" textLength="76.7" lengthAdjust="spacingAndGlyphs" fill="#000" xml:space="preserve" >Apply &amp; Close</text>
</g></svg>
</body></html>
